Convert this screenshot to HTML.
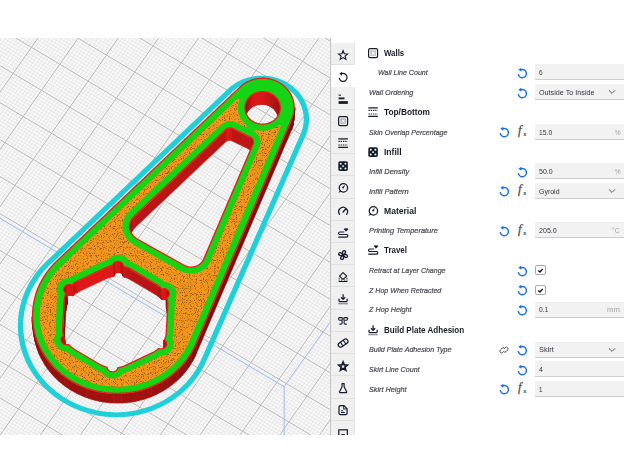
<!DOCTYPE html>
<html><head><meta charset="utf-8"><title>Cura</title>
<style>
html,body{margin:0;padding:0;background:#fff;}
body{width:628px;height:472px;position:relative;overflow:hidden;font-family:"Liberation Sans",sans-serif;color:#222;}
#view{position:absolute;left:0;top:38px;width:331px;height:397px;overflow:hidden;}
#vline{position:absolute;left:330px;top:38px;width:1px;height:397px;background:#c4c4c4;}
#side{position:absolute;left:331px;top:43px;width:24px;height:392px;background:#f0f0f0;overflow:hidden;}
.tab{position:absolute;left:0;width:24px;box-sizing:border-box;border-bottom:1px solid #e0e0e0;border-right:1px solid #e6e6e6}
.tab.sel{background:#fff;border-color:#fff}
.t{position:absolute;white-space:nowrap;line-height:12px;transform-origin:0 50%;}
.cat{font-weight:bold;font-size:9.5px;color:#161b26;}
.lab{font-style:italic;font-size:8px;color:#45484f;-webkit-text-stroke:0.2px #45484f;}
.val{font-size:8px;color:#30343c;}
.unit{font-size:8px;color:#a2a2a2;}
.fld{position:absolute;left:535px;width:88.5px;height:15px;background:#f2f2f2;border-bottom:1px solid #cdcdcd;}
.cb{position:absolute;left:535.3px;width:8.4px;height:8.4px;border:1px solid #a8a8a8;border-radius:2px;background:#fff}
svg.ic{position:absolute;overflow:visible}
</style></head>
<body>
<div id="view"><svg width="331" height="397" viewBox="0 0 331 397" style="display:block">
<defs><filter id="nz" x="0" y="0" width="100%" height="100%" color-interpolation-filters="sRGB"><feTurbulence type="fractalNoise" baseFrequency="0.85" numOctaves="2" seed="11" result="n"/><feColorMatrix in="n" type="matrix" values="0 0 0 0 0.58  0 0 0 0 0.33  0 0 0 0 0.06  4.4 0 0 0 -2.3"/></filter><clipPath id="infc"><path d="M126.5,176.5 126.5,176.5 126.8,176.1 126.8,176.1 127.2,175.7 127.2,175.6 128.6,174.0 128.6,174.0 129.0,173.6 129.0,173.6 220.7,87.0 220.7,87.0 221.0,86.7 221.0,86.7 221.4,86.3 221.4,86.3 222.1,85.8 222.1,85.8 222.5,85.5 222.5,85.5 223.2,85.1 223.2,85.1 223.7,84.8 223.7,84.8 224.5,84.5 224.5,84.5 225.0,84.3 225.0,84.2 225.8,84.0 225.8,84.0 226.3,83.8 226.4,83.8 227.1,83.6 227.2,83.6 227.7,83.5 227.7,83.5 228.5,83.4 228.6,83.4 229.1,83.3 229.2,83.3 230.0,83.3 230.0,83.3 230.5,83.3 230.6,83.3 231.4,83.3 231.4,83.3 232.0,83.4 232.0,83.4 232.8,83.5 232.8,83.5 233.4,83.6 233.4,83.6 234.2,83.8 234.2,83.9 234.7,84.0 234.7,84.0 235.5,84.3 235.5,84.3 236.0,84.5 236.0,84.5 236.4,84.7 236.4,84.7 245.1,89.0 245.3,89.1 245.5,89.1 245.7,89.1 246.0,89.1 246.2,89.0 246.4,88.9 246.5,88.7 246.7,88.6 246.8,88.4 246.8,88.2 246.8,87.9 246.8,87.7 246.7,87.5 246.6,87.4 246.4,87.2 246.0,86.9 246.0,86.9 245.9,86.7 245.8,86.7 245.4,86.4 245.4,86.4 245.3,86.2 245.3,86.2 244.9,85.9 244.9,85.9 244.7,85.7 244.7,85.7 244.3,85.3 244.3,85.3 244.1,85.1 244.1,85.1 243.8,84.8 243.8,84.7 243.6,84.6 243.6,84.6 243.3,84.2 243.3,84.2 243.1,84.0 243.1,84.0 242.8,83.6 242.8,83.6 242.6,83.4 242.6,83.4 242.3,83.0 242.3,83.0 242.2,82.8 242.1,82.8 241.8,82.4 241.8,82.4 241.7,82.2 241.7,82.2 241.4,81.7 241.4,81.7 241.3,81.5 241.3,81.5 241.0,81.1 241.0,81.1 240.9,80.9 240.9,80.9 240.6,80.4 240.6,80.4 240.5,80.2 240.5,80.2 240.3,79.8 240.3,79.7 240.2,79.5 240.1,79.5 239.9,79.1 239.9,79.1 239.8,78.9 239.8,78.8 239.6,78.4 239.6,78.4 239.5,78.2 239.5,78.2 239.3,77.7 239.3,77.7 239.2,77.5 239.2,77.5 239.1,77.0 239.1,77.0 239.0,76.7 239.0,76.7 238.8,76.3 238.8,76.3 238.8,76.0 238.7,76.0 238.6,75.5 238.6,75.5 238.5,75.3 238.5,75.3 238.4,74.8 238.4,74.8 238.4,74.6 238.4,74.6 238.3,74.1 238.3,74.1 238.2,73.8 238.2,73.8 238.1,73.3 238.1,73.3 238.1,73.1 238.1,73.1 238.0,72.6 238.0,72.6 238.0,72.4 238.0,72.4 237.9,71.9 237.9,71.8 237.9,71.6 237.9,71.6 237.9,71.1 237.9,71.1 237.9,70.9 237.9,70.9 237.9,70.4 237.9,70.4 237.8,70.1 237.8,70.1 237.8,69.6 237.8,69.6 237.9,69.4 237.9,69.4 237.9,68.9 237.9,68.9 237.9,68.6 237.9,68.6 237.9,68.1 237.9,68.1 237.9,67.9 237.9,67.9 238.0,67.4 238.0,67.4 238.0,67.1 238.0,67.1 238.1,66.6 238.1,66.6 238.1,66.4 238.1,66.4 238.2,65.9 238.2,65.9 238.3,65.7 238.3,65.7 238.4,65.2 238.4,65.1 238.4,64.9 238.4,64.9 238.6,64.4 238.6,64.4 238.6,64.2 238.6,64.2 238.8,63.7 238.8,63.7 238.8,63.5 238.9,63.5 239.0,63.0 239.0,63.0 239.1,62.8 239.1,62.8 239.3,62.3 239.3,62.3 239.3,62.2 239.4,62.0 239.4,61.8 239.3,61.6 239.3,61.4 239.2,61.2 239.0,61.0 238.8,60.9 238.6,60.8 238.4,60.7 238.2,60.7 237.9,60.7 237.7,60.8 237.5,60.9 237.3,61.0 61.7,227.9 61.7,227.9 59.9,229.6 59.9,229.7 58.2,231.4 58.2,231.4 56.6,233.2 56.6,233.2 55.1,235.1 55.0,235.1 53.6,237.0 53.6,237.0 52.2,238.9 52.2,238.9 50.8,240.9 50.8,240.9 49.6,242.9 49.5,242.9 48.4,245.0 48.3,245.0 47.2,247.1 47.2,247.1 46.2,249.2 46.2,249.2 45.2,251.3 45.2,251.4 44.3,253.5 44.3,253.6 43.5,255.7 43.5,255.8 42.8,258.0 42.7,258.0 42.1,260.2 42.1,260.3 41.5,262.5 41.5,262.5 41.0,264.8 41.0,264.8 40.6,267.1 40.6,267.1 40.3,269.4 40.3,269.5 40.0,271.7 40.0,271.8 39.9,274.1 39.8,274.1 39.8,276.4 39.8,276.4 39.8,278.7 39.8,278.8 39.8,281.1 39.8,281.1 40.0,283.4 40.0,283.4 40.3,285.7 40.3,285.8 40.6,288.0 40.6,288.1 41.0,290.3 41.0,290.4 41.5,292.6 41.5,292.7 42.1,294.9 42.1,294.9 42.7,297.2 42.7,297.2 43.4,299.4 43.5,299.4 44.3,301.6 44.3,301.6 45.2,303.8 45.2,303.8 46.1,305.9 46.1,306.0 47.2,308.1 47.2,308.1 48.3,310.1 48.3,310.2 49.5,312.2 49.5,312.2 50.7,314.2 50.8,314.3 52.1,316.2 52.1,316.2 53.5,318.1 53.5,318.2 55.0,320.0 55.0,320.1 56.5,321.9 56.5,321.9 58.1,323.7 58.1,323.7 59.8,325.4 59.8,325.5 61.5,327.1 61.5,327.2 63.3,328.8 63.3,328.8 65.2,330.4 65.2,330.4 67.1,331.9 67.1,331.9 69.0,333.4 69.1,333.4 71.0,334.8 71.1,334.8 73.1,336.2 73.1,336.2 75.2,337.5 75.2,337.5 77.4,338.7 77.4,338.7 79.5,339.9 79.6,339.9 81.8,341.0 81.8,341.0 84.1,342.0 84.1,342.0 86.4,342.9 86.4,343.0 88.7,343.8 88.7,343.8 91.1,344.6 91.1,344.7 93.5,345.4 93.5,345.4 95.9,346.1 95.9,346.1 98.3,346.7 98.4,346.7 100.8,347.2 100.8,347.2 103.3,347.6 103.3,347.7 105.8,348.0 105.8,348.0 108.3,348.3 108.3,348.3 110.8,348.5 110.9,348.6 113.4,348.7 113.4,348.7 115.9,348.8 115.9,348.8 118.4,348.8 118.5,348.8 121.0,348.7 121.0,348.7 123.5,348.5 123.5,348.5 126.0,348.3 126.0,348.3 128.5,348.0 128.6,348.0 131.0,347.6 131.1,347.6 133.5,347.2 133.5,347.1 136.0,346.6 136.0,346.6 138.4,346.0 138.4,346.0 140.8,345.3 140.9,345.3 143.2,344.6 143.3,344.6 145.6,343.8 145.6,343.8 147.9,342.9 148.0,342.9 150.3,341.9 150.3,341.9 152.5,340.9 152.6,340.9 154.8,339.8 154.8,339.8 157.0,338.6 157.0,338.6 159.1,337.4 159.1,337.4 161.2,336.1 161.2,336.1 163.3,334.7 163.3,334.7 165.3,333.3 165.3,333.3 167.2,331.8 167.3,331.8 169.2,330.3 169.2,330.3 171.0,328.7 171.0,328.7 172.8,327.0 172.8,327.0 174.5,325.3 174.6,325.3 176.2,323.6 176.2,323.6 177.8,321.8 177.8,321.8 179.4,319.9 179.4,319.9 180.8,318.0 180.9,318.0 182.2,316.1 182.3,316.1 183.6,314.1 183.6,314.1 184.9,312.1 184.9,312.1 186.1,310.0 186.1,310.0 187.2,308.0 187.2,307.9 188.2,305.8 188.2,305.8 189.2,303.6 189.2,303.6 280.8,88.3 280.8,88.1 280.9,87.9 280.8,87.7 280.8,87.5 280.7,87.3 280.5,87.2 280.4,87.0 280.2,86.9 280.0,86.9 279.7,86.8 279.5,86.8 279.3,86.9 279.1,87.0 278.9,87.1 278.7,87.3 278.7,87.3 278.5,87.4 278.5,87.4 278.1,87.7 278.1,87.8 277.9,87.9 277.9,87.9 277.4,88.2 277.4,88.2 277.2,88.3 277.2,88.3 276.8,88.6 276.8,88.6 276.6,88.8 276.5,88.8 276.1,89.1 276.1,89.1 275.9,89.2 275.9,89.2 275.4,89.5 275.4,89.5 275.2,89.6 275.2,89.6 274.7,89.8 274.7,89.8 274.5,89.9 274.5,90.0 274.0,90.2 274.0,90.2 273.8,90.3 273.8,90.3 273.3,90.5 273.3,90.5 273.0,90.6 273.0,90.6 272.5,90.8 272.5,90.8 272.3,90.9 272.3,90.9 271.8,91.1 271.8,91.1 271.5,91.2 271.5,91.2 271.0,91.4 271.0,91.4 270.8,91.5 270.8,91.5 270.3,91.6 270.2,91.6 270.0,91.7 270.0,91.7 269.5,91.8 269.5,91.9 269.2,91.9 269.2,91.9 268.7,92.0 268.7,92.0 268.5,92.1 268.4,92.1 267.9,92.2 267.9,92.2 267.7,92.3 267.7,92.3 267.1,92.4 267.1,92.4 266.9,92.4 266.9,92.4 266.3,92.5 266.3,92.5 266.1,92.5 266.1,92.5 265.5,92.6 265.5,92.6 265.3,92.6 265.3,92.6 264.7,92.7 264.7,92.7 264.5,92.7 264.4,92.7 263.9,92.7 263.9,92.7 263.6,92.7 263.6,92.7 263.1,92.7 263.1,92.7 262.8,92.8 262.8,92.8 262.3,92.8 262.3,92.8 262.0,92.7 262.0,92.7 261.5,92.7 261.5,92.7 261.2,92.7 261.2,92.7 260.7,92.7 260.7,92.7 260.4,92.7 260.4,92.7 259.9,92.6 259.9,92.6 259.6,92.6 259.6,92.6 259.1,92.5 259.0,92.5 258.8,92.5 258.8,92.5 258.3,92.4 258.2,92.4 258.0,92.4 258.0,92.4 257.5,92.3 257.5,92.3 257.2,92.2 257.2,92.2 256.7,92.1 256.7,92.1 256.4,92.0 256.4,92.0 255.9,91.9 255.9,91.9 255.7,91.8 255.5,91.8 255.2,91.8 255.0,91.9 254.8,91.9 254.6,92.1 254.4,92.2 254.3,92.4 254.2,92.6 254.2,92.8 254.2,93.1 254.2,93.3 254.4,93.5 254.5,93.7 254.7,93.8 255.3,94.2 255.4,94.2 255.8,94.6 255.9,94.6 256.6,95.2 256.6,95.2 257.0,95.6 257.0,95.6 257.6,96.3 257.7,96.3 258.0,96.8 258.1,96.8 258.6,97.5 258.6,97.5 258.9,98.0 258.9,98.0 259.3,98.8 259.3,98.8 259.6,99.3 259.6,99.4 259.9,100.1 259.9,100.2 260.1,100.7 260.1,100.8 260.3,101.6 260.3,101.6 260.4,102.2 260.4,102.2 260.5,103.0 260.6,103.1 260.6,103.6 260.6,103.7 260.6,104.5 260.6,104.6 260.5,105.1 260.5,105.2 260.4,106.0 260.4,106.0 260.3,106.6 260.3,106.6 260.0,107.4 260.0,107.5 259.8,108.0 259.8,108.0 259.7,108.4 259.7,108.4 210.4,223.5 210.4,223.6 210.2,224.0 210.2,224.0 209.4,225.6 209.3,225.6 208.8,226.5 208.8,226.5 207.7,227.9 207.7,227.9 207.1,228.7 207.0,228.8 205.8,230.0 205.8,230.0 205.0,230.7 204.9,230.8 203.5,231.8 203.5,231.8 202.6,232.4 202.6,232.4 201.0,233.3 201.0,233.3 200.0,233.8 200.0,233.8 198.3,234.5 198.2,234.5 197.2,234.8 197.2,234.8 195.4,235.2 195.3,235.2 194.3,235.4 194.2,235.4 192.4,235.6 192.4,235.6 191.3,235.6 191.2,235.6 189.4,235.6 189.4,235.6 188.3,235.5 188.2,235.5 186.4,235.2 186.4,235.1 185.3,234.9 185.3,234.9 183.6,234.3 183.5,234.3 182.5,233.9 182.5,233.9 180.9,233.1 180.8,233.1 180.4,232.9 180.3,232.9 133.6,206.7 133.5,206.7 133.1,206.4 133.1,206.4 131.2,205.1 131.2,205.1 130.8,204.8 130.7,204.8 130.3,204.5 130.3,204.4 128.7,203.0 128.7,203.0 128.3,202.6 128.2,202.6 127.9,202.2 127.9,202.2 126.5,200.5 126.5,200.5 126.2,200.1 126.2,200.0 125.9,199.6 125.9,199.6 124.8,197.8 124.8,197.7 124.5,197.3 124.5,197.3 124.3,196.8 124.3,196.8 123.5,194.8 123.5,194.8 123.3,194.3 123.3,194.3 123.2,193.8 123.2,193.8 122.7,191.7 122.7,191.7 122.7,191.2 122.6,191.1 122.6,190.6 122.6,190.6 122.5,188.5 122.5,188.5 122.5,188.0 122.5,188.0 122.5,187.5 122.5,187.4 122.7,185.4 122.7,185.3 122.8,184.8 122.8,184.8 122.9,184.3 122.9,184.3 123.5,182.3 123.5,182.2 123.7,181.8 123.7,181.7 123.9,181.2 123.9,181.2 124.8,179.3 124.8,179.3 125.0,178.8 125.0,178.8 125.3,178.3 125.3,178.3ZM69.3,239.8 69.5,239.8 69.8,239.7 70.0,239.6 70.1,239.6 70.1,239.5 72.0,238.3 72.0,238.3 72.3,238.1 72.4,238.1 72.4,238.1 72.4,238.1 72.7,237.9 72.7,237.9 74.8,236.8 74.8,236.8 74.9,236.7 74.9,236.7 75.0,236.7 75.0,236.7 75.1,236.6 75.1,236.6 101.6,224.1 101.6,224.1 101.7,224.0 101.7,224.0 101.7,224.0 101.8,224.0 101.9,224.0 101.9,224.0 104.1,223.1 104.1,223.1 104.4,222.9 104.4,222.9 104.5,222.9 104.5,222.9 104.8,222.8 104.8,222.8 107.1,222.1 107.1,222.1 107.2,222.0 107.4,221.9 107.7,221.8 107.8,221.6 108.1,221.3 108.1,221.3 108.4,220.9 108.4,220.9 108.4,220.9 108.5,220.9 108.8,220.5 108.8,220.5 109.2,220.2 109.2,220.2 109.5,219.8 109.6,219.8 109.6,219.8 109.6,219.8 110.0,219.5 110.0,219.5 110.4,219.2 110.4,219.2 110.8,218.9 110.9,218.9 110.9,218.9 110.9,218.9 111.3,218.6 111.3,218.6 111.8,218.3 111.8,218.3 112.2,218.1 112.3,218.1 112.3,218.1 112.3,218.1 112.8,217.9 112.8,217.9 113.3,217.7 113.3,217.7 113.8,217.5 113.8,217.5 113.8,217.5 113.8,217.5 114.3,217.3 114.3,217.3 114.8,217.2 114.9,217.2 115.3,217.1 115.4,217.1 115.4,217.1 115.4,217.1 115.9,217.0 115.9,217.0 116.4,216.9 116.5,216.9 117.0,216.9 117.0,216.9 117.0,216.9 117.0,216.9 117.5,216.8 117.6,216.8 118.1,216.8 118.1,216.8 118.6,216.8 118.6,216.8 118.7,216.8 118.7,216.8 119.2,216.9 119.2,216.9 119.7,216.9 119.7,216.9 120.2,217.0 120.3,217.0 120.3,217.0 120.3,217.0 120.8,217.1 120.8,217.1 121.3,217.2 121.4,217.2 121.8,217.4 121.9,217.4 121.9,217.4 121.9,217.4 122.4,217.5 122.4,217.5 122.9,217.7 122.9,217.7 123.4,217.9 123.4,217.9 123.4,217.9 123.4,217.9 123.9,218.2 123.9,218.2 124.4,218.4 124.4,218.4 124.8,218.6 124.8,218.7 124.9,218.7 124.9,218.7 125.3,218.9 125.3,219.0 125.7,219.2 125.7,219.3 126.1,219.5 126.1,219.6 126.2,219.6 126.2,219.6 126.6,219.9 126.6,219.9 127.0,220.2 127.0,220.3 127.3,220.6 127.3,220.6 127.4,220.6 127.4,220.6 127.7,221.0 127.7,221.0 128.0,221.4 128.0,221.4 128.3,221.8 128.3,221.8 128.4,221.8 128.4,221.8 128.6,222.2 128.7,222.2 128.9,222.6 129.0,222.8 129.2,222.9 129.4,223.0 129.6,223.1 129.6,223.1 131.7,224.0 131.7,224.0 132.1,224.1 132.1,224.2 132.1,224.2 132.1,224.2 132.4,224.3 132.4,224.3 134.5,225.4 134.5,225.4 134.7,225.5 134.7,225.5 134.7,225.5 134.7,225.5 134.8,225.6 134.8,225.6 159.7,240.4 159.7,240.4 159.9,240.5 159.9,240.5 159.9,240.5 159.9,240.5 160.1,240.6 160.1,240.6 162.0,241.9 162.0,241.9 162.3,242.1 162.3,242.1 162.3,242.1 162.4,242.1 162.6,242.3 162.6,242.4 164.4,243.8 164.4,243.8 164.5,243.9 164.7,244.0 165.0,244.1 165.2,244.2 165.6,244.2 165.7,244.2 166.2,244.3 166.2,244.3 166.2,244.3 166.2,244.3 166.7,244.4 166.7,244.4 167.3,244.5 167.3,244.5 167.7,244.6 167.8,244.6 167.8,244.7 167.8,244.7 168.3,244.8 168.3,244.8 168.8,245.0 168.8,245.0 169.3,245.2 169.3,245.2 169.3,245.2 169.4,245.2 169.8,245.4 169.8,245.4 170.3,245.7 170.3,245.7 170.7,245.9 170.7,245.9 170.8,246.0 170.8,246.0 171.2,246.2 171.2,246.2 171.6,246.5 171.6,246.5 172.0,246.8 172.0,246.8 172.1,246.9 172.1,246.9 172.5,247.2 172.5,247.2 172.9,247.5 172.9,247.5 173.2,247.9 173.2,247.9 173.3,247.9 173.3,247.9 173.6,248.3 173.6,248.3 173.9,248.7 173.9,248.7 174.2,249.0 174.3,249.1 174.3,249.1 174.3,249.1 174.6,249.5 174.6,249.5 174.8,249.9 174.8,249.9 175.1,250.3 175.1,250.4 175.1,250.4 175.1,250.4 175.3,250.8 175.3,250.8 175.6,251.3 175.6,251.3 175.7,251.7 175.7,251.7 175.8,251.8 175.8,251.8 175.9,252.2 175.9,252.2 176.1,252.7 176.1,252.7 176.2,253.2 176.2,253.2 176.2,253.2 176.2,253.3 176.3,253.7 176.3,253.7 176.4,254.2 176.4,254.2 176.4,254.7 176.4,254.7 176.4,254.7 176.4,254.7 176.5,255.2 176.5,255.2 176.5,255.7 176.5,255.7 176.5,256.2 176.5,256.2 176.5,256.2 176.5,256.3 176.4,256.7 176.4,256.7 176.4,257.2 176.4,257.2 176.3,257.7 176.3,257.7 176.3,257.7 176.3,257.8 176.2,258.2 176.2,258.2 176.0,258.7 176.0,258.7 175.9,259.2 175.9,259.2 175.9,259.2 175.9,259.2 175.7,259.7 175.7,259.7 175.5,260.1 175.5,260.1 175.3,260.6 175.3,260.6 175.3,260.6 175.2,260.6 175.0,261.0 175.0,261.1 174.8,261.4 174.7,261.6 174.6,261.8 174.7,262.1 174.7,262.2 174.7,262.2 174.9,264.4 174.9,264.4 174.9,264.7 174.9,264.7 174.9,264.8 174.9,264.8 174.9,265.1 174.9,265.1 174.9,267.3 174.9,267.3 174.9,267.5 174.9,267.5 174.9,267.5 174.9,267.5 174.9,267.7 174.9,267.7 173.4,294.9 173.4,294.9 173.4,295.1 173.4,295.1 173.4,295.1 173.4,295.1 173.4,295.3 173.4,295.3 173.1,297.5 173.1,297.5 173.1,297.8 173.1,297.8 173.1,297.9 173.1,297.9 173.0,298.2 173.0,298.2 172.6,300.3 172.6,300.4 172.5,300.5 172.5,300.7 172.5,300.9 172.6,301.2 172.8,301.5 172.8,301.5 173.0,302.0 173.0,302.0 173.0,302.0 173.0,302.0 173.1,302.5 173.2,302.5 173.3,303.0 173.3,303.0 173.4,303.4 173.4,303.4 173.4,303.5 173.4,303.5 173.5,303.9 173.5,304.0 173.6,304.4 173.6,304.5 173.7,304.9 173.7,304.9 173.7,305.0 173.7,305.0 173.7,305.4 173.7,305.5 173.7,306.0 173.7,306.0 173.7,306.4 173.7,306.4 173.7,306.5 173.7,306.5 173.7,307.0 173.6,307.0 173.6,307.5 173.6,307.5 173.5,307.9 173.5,307.9 173.5,308.0 173.5,308.0 173.4,308.4 173.4,308.5 173.3,308.9 173.3,309.0 173.1,309.4 173.1,309.4 173.1,309.5 173.1,309.5 172.9,309.9 172.9,309.9 172.7,310.4 172.7,310.4 172.5,310.8 172.5,310.8 172.5,310.9 172.5,310.9 172.3,311.3 172.2,311.3 172.0,311.7 172.0,311.7 171.7,312.1 171.7,312.1 171.7,312.2 171.7,312.2 171.4,312.6 171.4,312.6 171.1,313.0 171.0,313.0 170.7,313.3 170.7,313.4 170.7,313.4 170.7,313.4 170.4,313.7 170.3,313.8 170.0,314.1 170.0,314.1 169.6,314.4 169.6,314.4 169.6,314.5 169.5,314.5 169.2,314.8 169.2,314.8 168.7,315.1 168.7,315.1 168.3,315.4 168.3,315.4 168.3,315.4 168.2,315.4 167.8,315.7 167.8,315.7 167.4,315.9 167.3,315.9 166.9,316.2 166.9,316.2 166.9,316.2 166.8,316.2 166.4,316.4 166.4,316.4 165.9,316.6 165.9,316.6 165.4,316.8 165.4,316.8 165.3,316.8 165.3,316.8 164.9,316.9 164.8,316.9 164.3,317.1 164.3,317.1 163.8,317.2 163.8,317.2 163.8,317.2 163.7,317.2 163.3,317.3 163.2,317.3 162.7,317.4 162.7,317.4 162.2,317.4 162.2,317.4 162.1,317.4 162.1,317.4 161.6,317.5 161.6,317.5 161.2,317.5 160.9,317.5 160.7,317.6 160.5,317.7 160.4,317.8 160.3,317.8 158.4,319.0 158.4,319.0 158.1,319.2 158.1,319.2 158.1,319.2 158.1,319.2 157.7,319.4 157.7,319.4 155.7,320.5 155.7,320.5 155.5,320.6 155.5,320.6 155.5,320.6 155.5,320.6 155.3,320.7 155.3,320.7 128.9,333.2 128.9,333.2 128.8,333.3 128.8,333.3 128.8,333.3 128.7,333.3 128.6,333.3 128.6,333.3 126.4,334.3 126.4,334.3 126.1,334.4 126.1,334.4 126.0,334.4 126.0,334.4 125.7,334.5 125.7,334.5 123.4,335.2 123.4,335.2 123.3,335.3 123.1,335.4 122.9,335.5 122.7,335.7 122.4,336.0 122.4,336.0 122.1,336.4 122.1,336.4 122.1,336.4 122.0,336.4 121.7,336.8 121.7,336.8 121.3,337.1 121.3,337.2 121.0,337.5 120.9,337.5 120.9,337.5 120.9,337.5 120.5,337.8 120.5,337.8 120.1,338.1 120.1,338.1 119.7,338.4 119.7,338.4 119.6,338.4 119.6,338.5 119.2,338.7 119.2,338.7 118.7,339.0 118.7,339.0 118.3,339.2 118.2,339.2 118.2,339.2 118.2,339.2 117.7,339.4 117.7,339.4 117.2,339.6 117.2,339.6 116.8,339.8 116.7,339.8 116.7,339.8 116.7,339.8 116.2,340.0 116.2,340.0 115.7,340.1 115.7,340.1 115.2,340.2 115.2,340.2 115.1,340.2 115.1,340.2 114.6,340.3 114.6,340.3 114.1,340.4 114.0,340.4 113.6,340.5 113.5,340.5 113.5,340.5 113.5,340.5 113.0,340.5 113.0,340.5 112.4,340.5 112.4,340.5 111.9,340.5 111.9,340.5 111.8,340.5 111.8,340.5 111.3,340.4 111.3,340.4 110.8,340.4 110.8,340.4 110.3,340.3 110.3,340.3 110.2,340.3 110.2,340.3 109.7,340.2 109.7,340.2 109.2,340.1 109.2,340.1 108.7,340.0 108.7,340.0 108.6,339.9 108.6,339.9 108.1,339.8 108.1,339.8 107.6,339.6 107.6,339.6 107.2,339.4 107.1,339.4 107.1,339.4 107.1,339.4 106.6,339.2 106.6,339.2 106.2,338.9 106.1,338.9 105.7,338.7 105.7,338.7 105.7,338.7 105.6,338.6 105.2,338.4 105.2,338.4 104.8,338.1 104.8,338.1 104.4,337.8 104.4,337.8 104.3,337.8 104.3,337.7 104.0,337.4 104.0,337.4 103.6,337.1 103.6,337.1 103.2,336.7 103.2,336.7 103.2,336.7 103.2,336.7 102.8,336.3 102.8,336.3 102.5,335.9 102.5,335.9 102.2,335.6 102.2,335.6 102.1,335.5 102.1,335.5 101.9,335.1 101.9,335.1 101.6,334.7 101.5,334.6 101.3,334.4 101.1,334.3 100.9,334.3 100.9,334.3 98.8,333.3 98.8,333.3 98.5,333.2 98.4,333.2 98.4,333.2 98.4,333.2 98.1,333.0 98.1,333.0 96.0,331.9 96.0,331.9 95.9,331.8 95.9,331.8 95.8,331.8 95.8,331.8 95.7,331.7 95.7,331.7 70.8,317.0 70.7,317.0 70.6,316.9 70.6,316.9 70.6,316.9 70.6,316.9 70.4,316.8 70.4,316.8 68.5,315.5 68.5,315.5 68.2,315.3 68.2,315.3 68.1,315.3 68.1,315.2 67.9,315.0 67.9,315.0 66.1,313.6 66.1,313.6 66.0,313.5 65.8,313.4 65.5,313.3 65.3,313.2 64.8,313.2 64.8,313.2 64.3,313.1 64.3,313.1 64.3,313.1 64.2,313.1 63.8,313.0 63.7,313.0 63.2,312.9 63.2,312.9 62.7,312.8 62.7,312.7 62.7,312.7 62.7,312.7 62.2,312.6 62.2,312.6 61.7,312.4 61.7,312.4 61.2,312.2 61.2,312.2 61.1,312.2 61.1,312.2 60.7,312.0 60.7,312.0 60.2,311.7 60.2,311.7 59.8,311.5 59.7,311.5 59.7,311.4 59.7,311.4 59.3,311.2 59.3,311.2 58.8,310.9 58.8,310.9 58.4,310.6 58.4,310.6 58.4,310.5 58.4,310.5 58.0,310.2 58.0,310.2 57.6,309.9 57.6,309.9 57.3,309.5 57.2,309.5 57.2,309.5 57.2,309.5 56.9,309.1 56.9,309.1 56.5,308.7 56.5,308.7 56.2,308.3 56.2,308.3 56.2,308.3 56.2,308.3 55.9,307.9 55.9,307.9 55.6,307.5 55.6,307.4 55.4,307.1 55.4,307.0 55.3,307.0 55.3,307.0 55.1,306.6 55.1,306.6 54.9,306.1 54.9,306.1 54.7,305.7 54.7,305.7 54.7,305.6 54.7,305.6 54.5,305.2 54.5,305.1 54.4,304.7 54.4,304.7 54.3,304.2 54.3,304.2 54.2,304.2 54.2,304.1 54.2,303.7 54.2,303.7 54.1,303.2 54.1,303.2 54.0,302.7 54.0,302.7 54.0,302.7 54.0,302.6 54.0,302.2 54.0,302.2 54.0,301.7 54.0,301.7 54.0,301.2 54.0,301.2 54.0,301.1 54.0,301.1 54.0,300.7 54.0,300.7 54.1,300.2 54.1,300.2 54.2,299.7 54.2,299.7 54.2,299.6 54.2,299.6 54.3,299.2 54.3,299.2 54.4,298.7 54.4,298.7 54.6,298.2 54.6,298.2 54.6,298.2 54.6,298.2 54.8,297.7 54.8,297.7 55.0,297.3 55.0,297.2 55.2,296.8 55.2,296.8 55.2,296.8 55.2,296.8 55.4,296.3 55.4,296.3 55.7,296.0 55.8,295.8 55.8,295.5 55.8,295.3 55.8,295.2 55.8,295.2 55.6,293.0 55.6,293.0 55.5,292.7 55.5,292.6 55.5,292.6 55.5,292.6 55.5,292.3 55.5,292.3 55.5,290.1 55.5,290.1 55.5,289.9 55.5,289.9 55.5,289.9 55.5,289.9 55.5,289.7 55.5,289.7 57.0,262.4 57.0,262.4 57.0,262.2 57.0,262.2 57.0,262.2 57.0,262.2 57.1,262.1 57.1,262.0 57.3,259.9 57.3,259.9 57.3,259.5 57.3,259.5 57.3,259.5 57.3,259.5 57.4,259.1 57.4,259.1 57.9,257.0 57.9,257.0 57.9,256.9 57.9,256.6 57.9,256.4 57.8,256.2 57.6,255.8 57.6,255.8 57.5,255.4 57.4,255.3 57.4,255.3 57.4,255.3 57.3,254.9 57.3,254.8 57.1,254.4 57.1,254.3 57.0,253.9 57.0,253.9 57.0,253.8 57.0,253.8 56.9,253.4 56.9,253.4 56.8,252.9 56.8,252.9 56.8,252.4 56.8,252.4 56.7,252.3 56.7,252.3 56.7,251.9 56.7,251.9 56.7,251.4 56.7,251.3 56.7,250.9 56.7,250.9 56.7,250.8 56.7,250.8 56.8,250.4 56.8,250.3 56.8,249.9 56.8,249.8 56.9,249.4 56.9,249.4 56.9,249.3 56.9,249.3 57.0,248.9 57.0,248.9 57.2,248.4 57.2,248.4 57.3,247.9 57.3,247.9 57.3,247.9 57.3,247.8 57.5,247.4 57.5,247.4 57.7,246.9 57.7,246.9 57.9,246.5 57.9,246.5 57.9,246.5 57.9,246.4 58.2,246.0 58.2,246.0 58.4,245.6 58.4,245.6 58.7,245.2 58.7,245.2 58.7,245.1 58.7,245.1 59.0,244.7 59.0,244.7 59.4,244.3 59.4,244.3 59.7,244.0 59.7,243.9 59.7,243.9 59.7,243.9 60.1,243.6 60.1,243.6 60.4,243.2 60.5,243.2 60.8,242.9 60.8,242.9 60.9,242.8 60.9,242.8 61.3,242.5 61.3,242.5 61.7,242.2 61.7,242.2 62.1,241.9 62.1,241.9 62.2,241.9 62.2,241.9 62.6,241.6 62.6,241.6 63.1,241.4 63.1,241.4 63.5,241.1 63.5,241.1 63.6,241.1 63.6,241.1 64.0,240.9 64.1,240.9 64.5,240.7 64.6,240.7 65.0,240.5 65.0,240.5 65.1,240.5 65.1,240.5 65.6,240.4 65.6,240.4 66.1,240.2 66.1,240.2 66.6,240.1 66.6,240.1 66.7,240.1 66.7,240.1 67.2,240.0 67.2,240.0 67.7,239.9 67.7,239.9 68.2,239.9 68.3,239.9 68.3,239.9 68.3,239.9 68.8,239.9 68.8,239.9Z" clip-rule="evenodd"/></clipPath></defs>
<rect width="331" height="397" fill="#f9f9f9"/>
<path d="M332.5,-3.0L334.0,-2.1M326.4,-3.0L334.0,1.6M314.0,-3.0L334.0,9.0M307.9,-3.0L334.0,12.7M301.7,-3.0L334.0,16.4M295.5,-3.0L334.0,20.1M289.3,-3.0L334.0,23.8M283.2,-3.0L334.0,27.4M277.0,-3.0L334.0,31.1M270.8,-3.0L334.0,34.8M264.6,-3.0L334.0,38.5M252.3,-3.0L334.0,45.9M246.1,-3.0L334.0,49.6M239.9,-3.0L334.0,53.3M233.8,-3.0L334.0,57.0M227.6,-3.0L334.0,60.7M221.4,-3.0L334.0,64.4M215.2,-3.0L334.0,68.1M209.0,-3.0L334.0,71.8M202.8,-3.0L334.0,75.5M190.5,-3.0L334.0,82.9M184.3,-3.0L334.0,86.5M178.1,-3.0L334.0,90.2M171.9,-3.0L334.0,93.9M165.7,-3.0L334.0,97.6M159.5,-3.0L334.0,101.3M153.4,-3.0L334.0,105.0M147.2,-3.0L334.0,108.7M141.0,-3.0L334.0,112.4M128.6,-3.0L334.0,119.8M122.4,-3.0L334.0,123.5M116.2,-3.0L334.0,127.1M110.0,-3.0L334.0,130.8M103.8,-3.0L334.0,134.5M97.6,-3.0L334.0,138.2M91.4,-3.0L334.0,141.9M85.2,-3.0L334.0,145.6M79.0,-3.0L334.0,149.3M66.6,-3.0L334.0,156.7M3.9,-3.0L-3.0,6.8M60.4,-3.0L334.0,160.3M7.9,-3.0L-3.0,12.5M54.2,-3.0L334.0,164.0M11.9,-3.0L-3.0,18.3M48.0,-3.0L334.0,167.7M16.0,-3.0L-3.0,24.0M41.8,-3.0L334.0,171.4M20.0,-3.0L-3.0,29.8M35.6,-3.0L334.0,175.1M24.0,-3.0L-3.0,35.5M29.4,-3.0L334.0,178.8M28.0,-3.0L-3.0,41.2M23.2,-3.0L334.0,182.5M32.1,-3.0L-3.0,47.0M17.0,-3.0L334.0,186.2M36.1,-3.0L-3.0,52.7M4.5,-3.0L334.0,193.5M44.1,-3.0L-3.0,64.2M-1.7,-3.0L334.0,197.2M48.2,-3.0L-3.0,69.9M-3.0,-0.1L334.0,200.9M52.2,-3.0L-3.0,75.6M-3.0,3.6L334.0,204.6M56.2,-3.0L-3.0,81.4M-3.0,7.3L334.0,208.3M60.2,-3.0L-3.0,87.1M-3.0,11.0L334.0,212.0M64.3,-3.0L-3.0,92.8M-3.0,14.7L334.0,215.6M68.3,-3.0L-3.0,98.6M-3.0,18.4L334.0,219.3M72.3,-3.0L-3.0,104.3M-3.0,22.1L334.0,223.0M76.3,-3.0L-3.0,110.0M-3.0,29.5L334.0,230.4M84.4,-3.0L-3.0,121.5M-3.0,33.2L334.0,234.1M88.4,-3.0L-3.0,127.2M-3.0,36.9L334.0,237.7M92.4,-3.0L-3.0,132.9M-3.0,40.6L334.0,241.4M96.4,-3.0L-3.0,138.7M-3.0,44.3L334.0,245.1M100.4,-3.0L-3.0,144.4M-3.0,48.0L334.0,248.8M104.5,-3.0L-3.0,150.1M-3.0,51.7L334.0,252.5M108.5,-3.0L-3.0,155.8M-3.0,55.5L334.0,256.2M112.5,-3.0L-3.0,161.6M-3.0,59.2L334.0,259.8M116.5,-3.0L-3.0,167.3M-3.0,66.6L334.0,267.2M124.5,-3.0L-3.0,178.7M-3.0,70.3L334.0,270.9M128.6,-3.0L-3.0,184.5M-3.0,74.0L334.0,274.6M132.6,-3.0L-3.0,190.2M-3.0,77.7L334.0,278.3M136.6,-3.0L-3.0,195.9M-3.0,81.4L334.0,281.9M140.6,-3.0L-3.0,201.6M-3.0,85.1L334.0,285.6M144.6,-3.0L-3.0,207.4M-3.0,88.8L334.0,289.3M148.6,-3.0L-3.0,213.1M-3.0,92.5L334.0,293.0M152.7,-3.0L-3.0,218.8M-3.0,96.2L334.0,296.7M156.7,-3.0L-3.0,224.5M-3.0,103.6L334.0,304.0M164.7,-3.0L-3.0,236.0M-3.0,107.3L334.0,307.7M168.7,-3.0L-3.0,241.7M-3.0,111.0L334.0,311.4M172.7,-3.0L-3.0,247.4M-3.0,114.6L334.0,315.1M176.7,-3.0L-3.0,253.1M-3.0,118.3L334.0,318.7M180.7,-3.0L-3.0,258.8M-3.0,122.0L334.0,322.4M184.8,-3.0L-3.0,264.6M-3.0,125.7L334.0,326.1M188.8,-3.0L-3.0,270.3M-3.0,129.4L334.0,329.8M192.8,-3.0L-3.0,276.0M-3.0,133.1L334.0,333.5M196.8,-3.0L-3.0,281.7M-3.0,140.5L334.0,340.8M204.8,-3.0L-3.0,293.1M-3.0,144.2L334.0,344.5M208.8,-3.0L-3.0,298.9M-3.0,147.9L334.0,348.2M212.8,-3.0L-3.0,304.6M-3.0,151.6L334.0,351.8M216.8,-3.0L-3.0,310.3M-3.0,155.3L334.0,355.5M220.9,-3.0L-3.0,316.0M-3.0,159.0L334.0,359.2M224.9,-3.0L-3.0,321.7M-3.0,162.7L334.0,362.9M228.9,-3.0L-3.0,327.4M-3.0,166.4L334.0,366.6M232.9,-3.0L-3.0,333.1M-3.0,170.1L334.0,370.2M236.9,-3.0L-3.0,338.8M-3.0,177.5L334.0,377.6M244.9,-3.0L-3.0,350.3M-3.0,181.2L334.0,381.3M248.9,-3.0L-3.0,356.0M-3.0,184.9L334.0,384.9M252.9,-3.0L-3.0,361.7M-3.0,188.6L334.0,388.6M256.9,-3.0L-3.0,367.4M-3.0,192.3L334.0,392.3M260.9,-3.0L-3.0,373.1M-3.0,196.0L334.0,396.0M264.9,-3.0L-3.0,378.8M-3.0,199.7L334.0,399.6M268.9,-3.0L-3.0,384.5M-3.0,203.4L328.4,400.0M272.9,-3.0L-3.0,390.2M-3.0,207.0L322.2,400.0M276.9,-3.0L-3.0,395.9M-3.0,214.4L309.8,400.0M284.9,-3.0L2.1,400.0M-3.0,218.1L303.6,400.0M289.0,-3.0L6.2,400.0M-3.0,221.8L297.4,400.0M293.0,-3.0L10.2,400.0M-3.0,225.5L291.2,400.0M297.0,-3.0L14.2,400.0M-3.0,229.2L285.0,400.0M301.0,-3.0L18.2,400.0M-3.0,232.9L278.8,400.0M305.0,-3.0L22.2,400.0M-3.0,236.6L272.6,400.0M309.0,-3.0L26.2,400.0M-3.0,240.3L266.4,400.0M313.0,-3.0L30.2,400.0M-3.0,244.0L260.2,400.0M317.0,-3.0L34.2,400.0M-3.0,251.3L247.8,400.0M325.0,-3.0L42.2,400.0M-3.0,255.0L241.6,400.0M329.0,-3.0L46.2,400.0M-3.0,258.7L235.4,400.0M333.0,-3.0L50.2,400.0M-3.0,262.4L229.2,400.0M334.0,1.2L54.2,400.0M-3.0,266.1L223.0,400.0M334.0,6.9L58.2,400.0M-3.0,269.8L216.8,400.0M334.0,12.6L62.2,400.0M-3.0,273.5L210.6,400.0M334.0,18.3L66.2,400.0M-3.0,277.2L204.4,400.0M334.0,24.0L70.2,400.0M-3.0,280.9L198.2,400.0M334.0,29.7L74.2,400.0M-3.0,288.2L185.7,400.0M334.0,41.1L82.2,400.0M-3.0,291.9L179.5,400.0M334.0,46.8L86.1,400.0M-3.0,295.6L173.3,400.0M334.0,52.5L90.1,400.0M-3.0,299.3L167.1,400.0M334.0,58.2L94.1,400.0M-3.0,303.0L160.9,400.0M334.0,63.9L98.1,400.0M-3.0,306.7L154.7,400.0M334.0,69.6L102.1,400.0M-3.0,310.4L148.4,400.0M334.0,75.3L106.1,400.0M-3.0,314.1L142.2,400.0M334.0,81.0L110.1,400.0M-3.0,317.8L136.0,400.0M334.0,86.6L114.1,400.0M-3.0,325.1L123.6,400.0M334.0,98.0L122.1,400.0M-3.0,328.8L117.3,400.0M334.0,103.7L126.1,400.0M-3.0,332.5L111.1,400.0M334.0,109.4L130.1,400.0M-3.0,336.2L104.9,400.0M334.0,115.1L134.1,400.0M-3.0,339.9L98.7,400.0M334.0,120.8L138.1,400.0M-3.0,343.6L92.5,400.0M334.0,126.5L142.1,400.0M-3.0,347.2L86.2,400.0M334.0,132.2L146.1,400.0M-3.0,350.9L80.0,400.0M334.0,137.9L150.0,400.0M-3.0,354.6L73.8,400.0M334.0,143.5L154.0,400.0M-3.0,362.0L61.3,400.0M334.0,154.9L162.0,400.0M-3.0,365.7L55.1,400.0M334.0,160.6L166.0,400.0M-3.0,369.4L48.9,400.0M334.0,166.3L170.0,400.0M-3.0,373.0L42.6,400.0M334.0,172.0L174.0,400.0M-3.0,376.7L36.4,400.0M334.0,177.7L178.0,400.0M-3.0,380.4L30.2,400.0M334.0,183.3L182.0,400.0M-3.0,384.1L23.9,400.0M334.0,189.0L186.0,400.0M-3.0,387.8L17.7,400.0M334.0,194.7L189.9,400.0M-3.0,391.5L11.5,400.0M334.0,200.4L193.9,400.0M-3.0,398.8L-1.0,400.0M334.0,211.7L201.9,400.0M334.0,217.4L205.9,400.0M334.0,223.1L209.9,400.0M334.0,228.8L213.9,400.0M334.0,234.5L217.8,400.0M334.0,240.1L221.8,400.0M334.0,245.8L225.8,400.0M334.0,251.5L229.8,400.0M334.0,257.2L233.8,400.0M334.0,268.5L241.8,400.0M334.0,274.2L245.7,400.0M334.0,279.9L249.7,400.0M334.0,285.6L253.7,400.0M334.0,291.2L257.7,400.0M334.0,296.9L261.7,400.0M334.0,302.6L265.6,400.0M334.0,308.3L269.6,400.0M334.0,313.9L273.6,400.0M334.0,325.3L281.6,400.0M334.0,330.9L285.5,400.0M334.0,336.6L289.5,400.0M334.0,342.3L293.5,400.0M334.0,348.0L297.5,400.0M334.0,353.6L301.5,400.0M334.0,359.3L305.4,400.0M334.0,365.0L309.4,400.0M334.0,370.6L313.4,400.0M334.0,382.0L321.3,400.0M334.0,387.6L325.3,400.0M334.0,393.3L329.3,400.0M334.0,399.0L333.3,400.0" stroke="#e5e5e5" stroke-width="0.85" fill="none"/>
<path d="M320.2,-3.0L334.0,5.3M258.5,-3.0L334.0,42.2M196.7,-3.0L334.0,79.2M134.8,-3.0L334.0,116.1M72.8,-3.0L334.0,153.0M-0.1,-3.0L-3.0,1.1M10.8,-3.0L334.0,189.8M40.1,-3.0L-3.0,58.4M-3.0,25.8L334.0,226.7M80.3,-3.0L-3.0,115.8M-3.0,62.9L334.0,263.5M120.5,-3.0L-3.0,173.0M-3.0,99.9L334.0,300.3M160.7,-3.0L-3.0,230.2M-3.0,136.8L334.0,337.1M200.8,-3.0L-3.0,287.4M-3.0,173.8L334.0,373.9M240.9,-3.0L-3.0,344.6M-3.0,210.7L316.0,400.0M280.9,-3.0L-1.9,400.0M-3.0,247.7L254.0,400.0M321.0,-3.0L38.2,400.0M-3.0,284.6L191.9,400.0M334.0,35.4L78.2,400.0M-3.0,321.4L129.8,400.0M334.0,92.3L118.1,400.0M-3.0,358.3L67.5,400.0M334.0,149.2L158.0,400.0M-3.0,395.1L5.2,400.0M334.0,206.1L197.9,400.0M334.0,262.9L237.8,400.0M334.0,319.6L277.6,400.0M334.0,376.3L317.4,400.0" stroke="#b8b8b8" stroke-width="1.0" fill="none"/>
<path d="M-2,179.2 L284.1,348.8 L332,281.3 M284.1,348.8 V400" stroke="#94b9f6" stroke-width="0.95" fill="none"/>
<path d="M286.0,43.8 285.1,43.3 284.6,43.1 283.7,42.6 283.3,42.4 282.3,42.0 281.9,41.8 280.9,41.4 280.5,41.2 279.5,40.8 279.0,40.7 278.0,40.3 277.6,40.2 276.6,39.9 276.1,39.7 275.1,39.4 274.6,39.3 273.6,39.1 273.1,38.9 272.1,38.7 271.6,38.6 270.6,38.4 270.1,38.3 269.1,38.2 268.6,38.1 267.5,38.0 267.0,37.9 266.0,37.8 265.5,37.8 264.4,37.7 263.9,37.7 262.9,37.7 262.4,37.7 261.3,37.7 260.8,37.7 259.8,37.7 259.3,37.7 258.2,37.8 257.7,37.8 256.7,37.9 256.2,38.0 255.2,38.1 254.7,38.2 253.6,38.3 253.1,38.4 252.1,38.6 251.6,38.7 250.6,38.9 250.1,39.0 249.1,39.3 248.6,39.4 247.6,39.7 247.1,39.8 246.1,40.1 245.7,40.3 244.7,40.6 244.2,40.8 243.2,41.1 242.8,41.3 241.8,41.7 241.4,41.9 240.4,42.3 240.0,42.6 239.1,43.0 238.6,43.2 237.7,43.7 237.3,44.0 236.4,44.5 236.0,44.7 235.1,45.3 234.7,45.5 233.8,46.1 233.4,46.4 232.6,46.9 232.2,47.2 231.4,47.8 231.0,48.1 230.2,48.8 229.8,49.1 229.1,49.7 228.7,50.1 228.0,50.8 227.8,50.9 46.1,223.5 45.9,223.7 44.0,225.5 43.7,225.9 41.8,227.8 41.5,228.2 39.7,230.1 39.4,230.5 37.7,232.5 37.4,232.9 35.8,235.0 35.5,235.3 34.0,237.5 33.7,237.9 32.2,240.0 32.0,240.4 30.6,242.6 30.4,243.0 29.0,245.3 28.8,245.7 27.6,248.0 27.4,248.4 26.2,250.7 26.0,251.1 25.0,253.5 24.8,253.9 23.8,256.3 23.6,256.8 22.7,259.2 22.6,259.6 21.8,262.0 21.6,262.5 20.9,265.0 20.8,265.4 20.2,267.9 20.1,268.3 19.5,270.8 19.4,271.3 19.0,273.8 18.9,274.3 18.5,276.8 18.5,277.3 18.2,279.8 18.2,280.3 18.0,282.8 18.0,283.3 17.9,285.8 17.9,286.3 17.8,288.8 17.9,289.3 17.9,291.8 18.0,292.3 18.1,294.8 18.2,295.3 18.5,297.8 18.5,298.3 18.9,300.8 19.0,301.3 19.4,303.8 19.5,304.2 20.0,306.7 20.1,307.2 20.8,309.7 20.9,310.1 21.6,312.6 21.7,313.0 22.5,315.5 22.7,315.9 23.6,318.3 23.8,318.8 24.7,321.1 24.9,321.6 26.0,323.9 26.2,324.3 27.3,326.7 27.5,327.1 28.8,329.4 29.0,329.8 30.3,332.0 30.5,332.4 31.9,334.6 32.2,335.0 33.6,337.2 33.9,337.6 35.4,339.7 35.7,340.1 37.3,342.1 37.6,342.5 39.3,344.5 39.6,344.9 41.4,346.9 41.7,347.2 43.5,349.1 43.9,349.5 45.8,351.3 46.1,351.6 48.1,353.4 48.4,353.8 50.5,355.5 50.8,355.8 52.9,357.5 53.3,357.8 55.4,359.4 55.8,359.7 58.0,361.2 58.4,361.5 60.7,363.0 61.1,363.2 63.4,364.7 63.8,364.9 66.2,366.2 66.6,366.5 69.0,367.8 69.4,368.0 71.9,369.2 72.3,369.4 74.8,370.5 75.3,370.7 77.8,371.7 78.2,371.9 80.8,372.9 81.3,373.1 83.8,374.0 84.3,374.1 86.9,374.9 87.4,375.1 90.1,375.8 90.5,375.9 93.2,376.6 93.7,376.7 96.4,377.3 96.9,377.4 99.6,377.9 100.1,377.9 102.8,378.3 103.3,378.4 106.1,378.7 106.6,378.8 109.3,379.0 109.8,379.1 112.6,379.2 113.1,379.3 115.8,379.3 116.3,379.3 117.1,379.3 117.6,379.3 120.2,379.3 120.7,379.2 123.4,379.1 123.9,379.0 126.6,378.8 127.1,378.7 129.8,378.4 130.3,378.3 133.0,377.9 133.5,377.8 136.1,377.3 136.6,377.2 139.2,376.7 139.7,376.6 142.3,375.9 142.8,375.8 145.4,375.1 145.9,374.9 148.4,374.1 148.9,374.0 151.4,373.1 151.9,372.9 154.4,372.0 154.8,371.8 157.3,370.8 157.7,370.6 160.2,369.5 160.6,369.2 163.0,368.1 163.4,367.8 165.8,366.6 166.2,366.4 168.5,365.0 168.9,364.8 171.2,363.4 171.6,363.2 173.8,361.7 174.2,361.4 176.3,359.9 176.7,359.6 178.8,358.1 179.2,357.7 181.2,356.1 181.6,355.8 183.5,354.1 183.9,353.8 185.8,352.0 186.2,351.7 188.0,349.9 188.3,349.5 190.1,347.7 190.5,347.3 192.2,345.4 192.5,345.0 194.1,343.1 194.4,342.7 196.0,340.7 196.3,340.3 197.8,338.2 198.1,337.8 199.5,335.7 199.7,335.3 201.1,333.2 201.3,332.8 202.6,330.6 202.8,330.2 204.0,328.0 204.3,327.5 205.4,325.3 205.6,324.8 206.6,322.6 206.7,322.4 305.7,97.6 305.8,97.3 306.2,96.4 306.4,96.0 306.7,95.0 306.8,94.6 307.2,93.7 307.3,93.2 307.6,92.3 307.7,91.8 307.9,90.9 308.0,90.5 308.2,89.5 308.3,89.0 308.5,88.1 308.6,87.6 308.7,86.7 308.8,86.2 308.9,85.3 308.9,84.8 309.0,83.8 309.0,83.4 309.1,82.4 309.1,81.9 309.1,81.0 309.1,80.5 309.0,79.5 309.0,79.1 308.9,78.1 308.9,77.7 308.8,76.7 308.8,76.2 308.6,75.3 308.5,74.8 308.4,73.9 308.3,73.4 308.1,72.5 308.0,72.0 307.7,71.1 307.6,70.6 307.4,69.7 307.2,69.2 306.9,68.3 306.8,67.9 306.4,67.0 306.3,66.5 305.9,65.6 305.7,65.2 305.3,64.3 305.1,63.9 304.7,63.0 304.5,62.6 304.0,61.7 303.8,61.3 303.3,60.4 303.1,60.0 302.5,59.2 302.3,58.8 301.7,58.0 301.5,57.6 300.9,56.8 300.6,56.4 300.0,55.6 299.7,55.2 299.1,54.5 298.7,54.1 298.1,53.3 297.8,53.0 297.1,52.3 296.7,51.9 296.0,51.2 295.7,50.9 294.9,50.2 294.6,49.9 293.8,49.2 293.4,48.9 292.7,48.3 292.3,48.0 291.5,47.3 291.1,47.1 290.2,46.5 289.8,46.2 289.0,45.6 288.6,45.4 287.7,44.8 287.3,44.6 286.4,44.1ZM284.4,48.8 284.7,48.9 285.6,49.5 285.9,49.6 286.7,50.2 287.0,50.4 287.8,51.0 288.0,51.2 288.9,51.8 289.1,52.0 289.9,52.6 290.1,52.8 290.9,53.5 291.1,53.7 291.9,54.4 292.1,54.6 292.8,55.3 293.0,55.5 293.7,56.3 293.9,56.5 294.6,57.2 294.8,57.5 295.4,58.2 295.6,58.5 296.2,59.3 296.4,59.5 297.0,60.3 297.2,60.6 297.7,61.4 297.9,61.7 298.4,62.5 298.6,62.8 299.0,63.6 299.2,63.9 299.7,64.7 299.8,65.0 300.2,65.9 300.4,66.2 300.8,67.1 300.9,67.4 301.2,68.3 301.3,68.5 301.7,69.5 301.8,69.7 302.1,70.7 302.2,71.0 302.4,71.9 302.5,72.2 302.8,73.1 302.8,73.4 303.0,74.4 303.1,74.7 303.2,75.6 303.3,75.9 303.4,76.9 303.5,77.2 303.6,78.1 303.6,78.4 303.7,79.4 303.7,79.7 303.7,80.7 303.7,81.0 303.7,81.9 303.7,82.2 303.7,83.2 303.6,83.5 303.6,84.5 303.5,84.8 303.4,85.7 303.4,86.0 303.3,87.0 303.2,87.3 303.0,88.2 303.0,88.5 302.8,89.5 302.7,89.8 302.5,90.7 302.4,91.0 302.1,91.9 302.0,92.2 301.7,93.2 301.6,93.4 301.3,94.4 301.2,94.6 300.8,95.5 300.7,95.7 201.7,320.6 201.6,320.7 200.6,323.0 200.5,323.2 199.4,325.5 199.2,325.8 198.0,328.0 197.9,328.3 196.6,330.5 196.4,330.7 195.1,332.9 194.9,333.1 193.5,335.2 193.3,335.5 191.8,337.5 191.6,337.8 190.1,339.8 189.9,340.1 188.2,342.0 188.0,342.3 186.3,344.2 186.1,344.4 184.3,346.3 184.1,346.5 182.2,348.3 182.0,348.5 180.1,350.3 179.9,350.5 177.9,352.2 177.7,352.4 175.6,354.0 175.4,354.2 173.3,355.8 173.0,356.0 170.9,357.5 170.6,357.7 168.4,359.1 168.2,359.3 165.9,360.7 165.7,360.9 163.4,362.2 163.1,362.3 160.7,363.6 160.5,363.7 158.1,364.9 157.8,365.0 155.4,366.1 155.1,366.3 152.6,367.3 152.3,367.4 149.8,368.4 149.5,368.5 147.0,369.3 146.7,369.4 144.1,370.2 143.8,370.3 141.2,371.1 140.9,371.1 138.3,371.8 138.0,371.9 135.4,372.4 135.1,372.5 132.4,373.0 132.1,373.0 129.4,373.4 129.1,373.5 126.4,373.8 126.1,373.9 123.4,374.1 123.1,374.1 120.4,374.3 120.1,374.3 117.4,374.4 117.1,374.4 116.3,374.4 116.0,374.4 113.3,374.3 112.9,374.3 110.2,374.1 109.8,374.1 107.1,373.9 106.8,373.8 104.0,373.5 103.7,373.5 101.0,373.1 100.6,373.0 97.9,372.5 97.6,372.4 94.9,371.9 94.6,371.8 91.9,371.1 91.6,371.1 89.0,370.3 88.7,370.2 86.1,369.4 85.7,369.3 83.2,368.4 82.8,368.3 80.3,367.4 80.0,367.2 77.5,366.2 77.2,366.1 74.7,364.9 74.4,364.8 72.0,363.6 71.7,363.5 69.3,362.2 69.0,362.0 66.7,360.7 66.4,360.5 64.1,359.1 63.8,359.0 61.6,357.5 61.3,357.3 59.1,355.8 58.9,355.6 56.7,354.0 56.5,353.8 54.4,352.1 54.1,351.9 52.1,350.1 51.9,349.9 49.9,348.1 49.7,347.9 47.8,346.1 47.6,345.8 45.8,343.9 45.6,343.7 43.8,341.7 43.6,341.5 41.9,339.5 41.7,339.2 40.1,337.2 39.9,336.9 38.4,334.8 38.2,334.6 36.8,332.4 36.6,332.1 35.2,329.9 35.0,329.7 33.7,327.4 33.6,327.2 32.4,324.9 32.2,324.6 31.1,322.3 31.0,322.0 29.9,319.7 29.8,319.4 28.8,317.0 28.7,316.7 27.8,314.3 27.7,314.0 26.9,311.6 26.8,311.3 26.1,308.8 26.0,308.5 25.4,306.1 25.3,305.8 24.8,303.3 24.7,303.0 24.3,300.5 24.2,300.2 23.9,297.6 23.8,297.3 23.6,294.8 23.5,294.5 23.4,292.0 23.3,291.7 23.2,289.1 23.2,288.8 23.2,286.3 23.2,286.0 23.3,283.4 23.4,283.1 23.5,280.6 23.6,280.3 23.8,277.7 23.9,277.4 24.2,274.9 24.3,274.6 24.7,272.1 24.8,271.8 25.3,269.3 25.4,269.0 26.0,266.5 26.1,266.2 26.8,263.8 26.9,263.5 27.7,261.0 27.8,260.8 28.7,258.3 28.8,258.1 29.8,255.7 29.9,255.4 31.0,253.0 31.1,252.8 32.3,250.4 32.4,250.2 33.7,247.9 33.8,247.6 35.1,245.4 35.3,245.1 36.7,242.9 36.8,242.6 38.3,240.5 38.5,240.2 40.0,238.1 40.2,237.8 41.8,235.8 42.0,235.5 43.7,233.5 43.9,233.3 45.7,231.3 45.9,231.1 47.7,229.2 47.9,228.9 49.8,227.1 49.9,227.0 231.6,54.4 231.7,54.3 232.5,53.6 232.7,53.4 233.5,52.7 233.7,52.5 234.5,51.9 234.8,51.7 235.6,51.1 235.8,50.9 236.7,50.3 236.9,50.1 237.8,49.6 238.1,49.4 238.9,48.9 239.2,48.7 240.1,48.2 240.4,48.0 241.3,47.5 241.6,47.4 242.5,46.9 242.8,46.8 243.7,46.4 244.0,46.3 245.0,45.9 245.3,45.7 246.2,45.4 246.6,45.3 247.5,44.9 247.8,44.8 248.8,44.5 249.1,44.4 250.1,44.1 250.5,44.1 251.5,43.8 251.8,43.7 252.8,43.5 253.1,43.5 254.2,43.3 254.5,43.2 255.5,43.1 255.8,43.0 256.9,42.9 257.2,42.9 258.2,42.8 258.6,42.7 259.6,42.7 259.9,42.7 261.0,42.6 261.3,42.6 262.4,42.6 262.7,42.6 263.7,42.7 264.1,42.7 265.1,42.8 265.4,42.8 266.5,42.9 266.8,42.9 267.8,43.0 268.2,43.1 269.2,43.2 269.5,43.3 270.5,43.5 270.9,43.6 271.9,43.8 272.2,43.8 273.2,44.1 273.5,44.2 274.5,44.5 274.8,44.6 275.8,44.9 276.1,45.0 277.1,45.3 277.4,45.4 278.4,45.8 278.7,45.9 279.6,46.3 279.9,46.4 280.9,46.9 281.2,47.0 282.1,47.5 282.4,47.6 283.3,48.1 283.6,48.3Z" fill="#1fd0d8" fill-rule="evenodd"/>
<path d="M33.4,288.8 33.4,291.4 32.0,281.4 31.9,278.9ZM33.4,291.4 33.6,293.9 32.2,284.0 32.0,281.4ZM33.6,293.9 33.9,296.4 32.5,286.6 32.2,284.0ZM33.9,296.4 34.2,298.9 32.8,289.1 32.5,286.6ZM34.2,298.9 34.7,301.5 33.3,291.6 32.8,289.1ZM191.5,325.1 192.8,322.9 193.0,313.3 191.7,315.6ZM192.8,322.9 194.0,320.6 194.2,311.0 193.0,313.3ZM194.0,320.6 195.2,318.3 195.4,308.7 194.2,311.0ZM195.2,318.3 196.2,316.0 196.5,306.3 195.4,308.7ZM245.1,79.6 245.2,79.1 245.9,67.1 245.8,67.6ZM245.2,79.1 245.3,78.6 246.0,66.6 245.9,67.1ZM245.3,78.6 245.5,78.1 246.2,66.1 246.0,66.6ZM65.7,260.9 65.7,260.8 64.6,250.6 64.6,250.7ZM63.0,310.7 63.0,310.6 61.9,300.9 61.9,301.0ZM65.3,307.4 65.3,307.3 64.2,297.5 64.2,297.7ZM66.2,270.7 66.2,270.6 65.1,260.5 65.1,260.5ZM66.2,270.6 66.6,268.5 65.5,258.4 65.1,260.5ZM66.6,268.5 66.6,268.4 65.5,258.3 65.5,258.4Z" fill="#840e0e" stroke="#840e0e" stroke-width="0.6"/>
<path d="M34.7,301.5 35.2,304.0 33.8,294.2 33.3,291.6ZM35.2,304.0 35.9,306.4 34.5,296.7 33.8,294.2ZM35.9,306.4 36.6,308.9 35.2,299.2 34.5,296.7ZM36.6,308.9 37.4,311.3 36.0,301.6 35.2,299.2ZM37.4,311.3 38.3,313.7 36.9,304.0 36.0,301.6ZM38.3,313.7 39.2,316.1 37.9,306.4 36.9,304.0ZM39.2,316.1 40.3,318.5 38.9,308.8 37.9,306.4ZM185.5,333.7 187.1,331.6 187.3,322.1 185.6,324.2ZM187.1,331.6 188.7,329.5 188.8,320.0 187.3,322.1ZM188.7,329.5 190.1,327.3 190.3,317.8 188.8,320.0ZM190.1,327.3 191.5,325.1 191.7,315.6 190.3,317.8ZM245.5,78.1 245.6,77.6 246.3,65.6 246.2,66.1ZM245.6,77.6 245.8,77.1 246.5,65.1 246.3,65.6ZM245.8,77.1 245.9,76.7 246.7,64.6 246.5,65.1ZM131.0,196.9 131.5,194.9 131.1,184.0 130.5,186.1ZM65.7,260.8 65.8,260.3 64.8,250.1 64.6,250.6ZM65.8,260.3 65.9,260.3 64.8,250.1 64.8,250.1ZM114.0,238.0 114.1,237.5 113.5,227.1 113.3,227.6ZM114.1,237.5 114.1,237.5 113.5,227.0 113.5,227.1ZM168.7,265.5 168.7,266.0 168.7,255.8 168.7,255.3ZM166.0,315.2 166.0,315.8 165.9,306.1 165.9,305.6ZM63.0,310.6 63.1,310.1 62.0,300.4 61.9,300.9ZM63.1,310.1 63.2,310.1 62.0,300.4 62.0,300.4ZM66.6,268.4 67.3,266.4 66.2,256.2 65.5,258.3ZM67.5,265.9 67.6,265.7 66.5,255.6 66.4,255.8Z" fill="#8a0f0f" stroke="#8a0f0f" stroke-width="0.6"/>
<path d="M40.3,318.5 41.4,320.8 40.1,311.2 38.9,308.8ZM41.4,320.8 42.7,323.0 41.3,313.5 40.1,311.2ZM42.7,323.0 44.0,325.3 42.6,315.7 41.3,313.5ZM44.0,325.3 45.3,327.5 44.0,317.9 42.6,315.7ZM45.3,327.5 46.8,329.6 45.5,320.1 44.0,317.9ZM46.8,329.6 48.3,331.8 47.1,322.3 45.5,320.1ZM48.3,331.8 49.9,333.8 48.7,324.3 47.1,322.3ZM178.4,341.4 180.3,339.6 180.3,330.1 178.4,332.0ZM180.3,339.6 182.1,337.7 182.2,328.2 180.3,330.1ZM182.1,337.7 183.8,335.7 183.9,326.2 182.2,328.2ZM183.8,335.7 185.5,333.7 185.6,324.2 183.9,326.2ZM245.9,76.7 246.1,76.2 246.9,64.1 246.7,64.6ZM278.4,79.7 278.4,80.2 279.5,68.1 279.4,67.6ZM278.4,80.2 278.5,80.7 279.5,68.6 279.5,68.1ZM278.5,80.7 278.5,81.2 279.6,69.2 279.5,68.6ZM278.5,81.2 278.5,81.7 279.6,69.7 279.6,69.2ZM252.0,115.1 252.0,115.7 252.8,104.0 252.8,103.4ZM65.9,260.3 66.1,259.8 65.0,249.6 64.8,250.1ZM113.9,238.2 114.0,238.0 113.3,227.6 113.3,227.8ZM114.1,237.5 114.3,237.0 113.7,226.5 113.5,227.0ZM168.7,265.4 168.7,265.5 168.7,255.3 168.7,255.3ZM167.0,273.0 167.2,275.1 167.1,265.1 166.9,262.9ZM167.2,275.1 167.2,275.2 167.1,265.1 167.1,265.1ZM164.1,311.6 164.1,311.8 164.0,302.1 164.0,301.9ZM166.0,315.2 166.0,315.2 165.9,305.6 165.9,305.5ZM63.2,310.1 63.4,309.6 62.2,299.9 62.0,300.4ZM67.3,266.4 67.3,266.3 66.2,256.2 66.2,256.2ZM67.3,266.3 67.5,265.9 66.4,255.8 66.2,256.2Z" fill="#900f0f" stroke="#900f0f" stroke-width="0.6"/>
<path d="M49.9,333.8 51.6,335.8 50.4,326.4 48.7,324.3ZM51.6,335.8 53.4,337.8 52.2,328.4 50.4,326.4ZM53.4,337.8 55.2,339.7 54.0,330.3 52.2,328.4ZM55.2,339.7 57.1,341.6 55.9,332.2 54.0,330.3ZM57.1,341.6 59.0,343.4 57.9,334.0 55.9,332.2ZM59.0,343.4 61.1,345.1 59.9,335.7 57.9,334.0ZM61.1,345.1 63.1,346.8 62.0,337.4 59.9,335.7ZM63.1,346.8 65.3,348.4 64.2,339.0 62.0,337.4ZM168.0,349.8 170.2,348.2 170.1,338.9 167.9,340.5ZM170.2,348.2 172.3,346.6 172.3,337.3 170.1,338.9ZM172.3,346.6 174.4,345.0 174.4,335.6 172.3,337.3ZM174.4,345.0 176.4,343.2 176.4,333.8 174.4,335.6ZM176.4,343.2 178.4,341.4 178.4,332.0 176.4,333.8ZM246.1,76.2 246.4,75.7 247.1,63.6 246.9,64.1ZM246.4,75.7 246.6,75.3 247.3,63.2 247.1,63.6ZM278.0,78.2 278.2,78.7 279.2,66.6 279.1,66.1ZM278.2,78.7 278.3,79.2 279.3,67.1 279.2,66.6ZM278.3,79.2 278.4,79.7 279.4,67.6 279.3,67.1ZM251.9,114.5 252.0,115.1 252.8,103.4 252.6,102.8ZM131.5,194.9 132.4,193.0 132.0,182.1 131.1,184.0ZM66.1,259.8 66.1,259.7 65.0,249.5 65.0,249.6ZM114.3,237.0 114.3,236.9 113.7,226.5 113.7,226.5ZM123.2,237.9 123.2,237.9 122.7,227.5 122.7,227.4ZM123.2,237.9 123.3,238.4 122.7,228.0 122.7,227.5ZM123.3,238.4 123.3,238.6 122.8,228.2 122.7,228.0ZM168.6,264.9 168.6,264.9 168.6,254.8 168.6,254.7ZM168.6,264.9 168.7,265.4 168.7,255.3 168.6,254.8ZM166.4,270.2 166.4,270.4 166.3,260.2 166.3,260.1ZM166.5,270.8 166.5,270.8 166.4,260.7 166.4,260.7ZM166.5,270.8 167.0,272.9 166.9,262.8 166.4,260.7ZM167.0,272.9 167.0,273.0 166.9,262.9 166.9,262.8ZM165.9,314.6 165.9,314.7 165.8,305.0 165.8,305.0ZM165.9,314.7 166.0,315.2 165.9,305.5 165.8,305.0ZM63.4,309.6 63.4,309.6 62.3,299.8 62.2,299.9ZM65.2,307.6 65.3,307.4 64.2,297.7 64.1,297.9Z" fill="#961010" stroke="#961010" stroke-width="0.6"/>
<path d="M65.3,348.4 67.5,349.9 66.4,340.6 64.2,339.0ZM67.5,349.9 69.7,351.4 68.7,342.1 66.4,340.6ZM69.7,351.4 72.0,352.8 71.0,343.5 68.7,342.1ZM72.0,352.8 74.3,354.1 73.3,344.9 71.0,343.5ZM74.3,354.1 76.7,355.4 75.8,346.2 73.3,344.9ZM76.7,355.4 79.2,356.6 78.2,347.4 75.8,346.2ZM79.2,356.6 81.7,357.7 80.7,348.5 78.2,347.4ZM81.7,357.7 84.2,358.8 83.3,349.5 80.7,348.5ZM84.2,358.8 86.7,359.7 85.8,350.5 83.3,349.5ZM151.3,358.7 153.8,357.6 153.6,348.4 151.1,349.4ZM153.8,357.6 156.3,356.5 156.1,347.2 153.6,348.4ZM156.3,356.5 158.7,355.3 158.6,346.0 156.1,347.2ZM158.7,355.3 161.1,354.0 161.0,344.8 158.6,346.0ZM161.1,354.0 163.5,352.7 163.3,343.4 161.0,344.8ZM163.5,352.7 165.8,351.3 165.7,342.0 163.3,343.4ZM165.8,351.3 168.0,349.8 167.9,340.5 165.7,342.0ZM246.6,75.3 246.8,74.8 247.5,62.7 247.3,63.2ZM246.8,74.8 247.1,74.3 247.8,62.3 247.5,62.7ZM277.4,76.2 277.6,76.7 278.6,64.7 278.4,64.2ZM277.6,76.7 277.7,77.2 278.8,65.1 278.6,64.7ZM277.7,77.2 277.9,77.7 278.9,65.6 278.8,65.1ZM277.9,77.7 278.0,78.2 279.1,66.1 278.9,65.6ZM251.7,113.9 251.9,114.5 252.6,102.8 252.5,102.2ZM66.1,259.7 66.4,259.3 65.3,249.1 65.0,249.5ZM114.3,236.9 114.6,236.5 114.0,226.0 113.7,226.5ZM123.0,237.3 123.0,237.4 122.5,226.9 122.5,226.9ZM123.0,237.4 123.2,237.9 122.7,227.4 122.5,226.9ZM168.5,264.3 168.5,264.4 168.4,254.2 168.4,254.2ZM168.5,264.4 168.6,264.9 168.6,254.7 168.4,254.2ZM166.4,270.4 166.5,270.8 166.4,260.7 166.3,260.2ZM164.1,311.8 164.1,312.0 164.0,302.3 164.0,302.1ZM165.7,314.1 165.7,314.1 165.6,304.5 165.6,304.4ZM165.7,314.1 165.9,314.6 165.8,305.0 165.6,304.5ZM63.4,309.6 63.7,309.1 62.5,299.4 62.3,299.8Z" fill="#9c1111" stroke="#9c1111" stroke-width="0.6"/>
<path d="M86.7,359.7 89.3,360.6 88.4,351.4 85.8,350.5ZM89.3,360.6 91.9,361.4 91.1,352.2 88.4,351.4ZM91.9,361.4 94.6,362.2 93.8,353.0 91.1,352.2ZM94.6,362.2 97.2,362.8 96.5,353.6 93.8,353.0ZM97.2,362.8 99.9,363.4 99.2,354.2 96.5,353.6ZM99.9,363.4 102.6,363.9 101.9,354.7 99.2,354.2ZM102.6,363.9 105.4,364.3 104.7,355.1 101.9,354.7ZM105.4,364.3 108.1,364.6 107.4,355.5 104.7,355.1ZM108.1,364.6 110.8,364.9 110.2,355.7 107.4,355.5ZM110.8,364.9 113.6,365.0 113.0,355.9 110.2,355.7ZM121.9,365.0 124.6,364.9 124.1,355.7 121.3,355.9ZM124.6,364.9 127.4,364.6 126.9,355.4 124.1,355.7ZM127.4,364.6 130.1,364.3 129.7,355.1 126.9,355.4ZM130.1,364.3 132.8,363.9 132.4,354.7 129.7,355.1ZM132.8,363.9 135.5,363.4 135.2,354.2 132.4,354.7ZM135.5,363.4 138.2,362.8 137.9,353.6 135.2,354.2ZM138.2,362.8 140.9,362.1 140.6,352.9 137.9,353.6ZM140.9,362.1 143.5,361.4 143.2,352.2 140.6,352.9ZM143.5,361.4 146.2,360.6 145.9,351.3 143.2,352.2ZM146.2,360.6 148.7,359.7 148.5,350.4 145.9,351.3ZM148.7,359.7 151.3,358.7 151.1,349.4 148.5,350.4ZM247.1,74.3 247.4,73.9 248.1,61.8 247.8,62.3ZM247.4,73.9 247.7,73.5 248.4,61.4 248.1,61.8ZM276.4,74.4 276.7,74.8 277.7,62.8 277.5,62.3ZM276.7,74.8 276.9,75.3 278.0,63.2 277.7,62.8ZM276.9,75.3 277.2,75.8 278.2,63.7 278.0,63.2ZM277.2,75.8 277.4,76.2 278.4,64.2 278.2,63.7ZM251.4,113.4 251.7,113.9 252.5,102.2 252.2,101.7ZM132.4,193.0 133.6,191.2 133.2,180.3 132.0,182.1ZM66.4,259.3 66.4,259.3 65.3,249.0 65.3,249.1ZM113.8,238.3 113.9,238.2 113.3,227.8 113.2,227.9ZM114.6,236.5 114.6,236.4 114.0,226.0 114.0,226.0ZM122.8,236.8 122.8,236.9 122.3,226.4 122.2,226.4ZM122.8,236.9 123.0,237.3 122.5,226.9 122.3,226.4ZM123.3,238.6 123.4,238.8 122.9,228.3 122.8,228.2ZM168.2,263.8 168.2,263.9 168.2,253.7 168.1,253.6ZM168.2,263.9 168.5,264.3 168.4,254.2 168.2,253.7ZM165.5,313.6 165.5,313.6 165.4,303.9 165.4,303.9ZM165.5,313.6 165.7,314.1 165.6,304.4 165.4,303.9ZM63.7,309.1 63.7,309.1 62.6,299.3 62.5,299.4Z" fill="#a21111" stroke="#a21111" stroke-width="0.6"/>
<path d="M113.6,365.0 116.4,365.1 115.8,356.0 113.0,355.9ZM116.4,365.1 119.1,365.1 118.6,356.0 115.8,356.0ZM119.1,365.1 121.9,365.0 121.3,355.9 118.6,356.0ZM247.7,73.5 248.0,73.1 248.7,61.0 248.4,61.4ZM248.0,73.1 248.3,72.6 249.0,60.6 248.7,61.0ZM275.3,72.7 275.6,73.1 276.6,61.0 276.3,60.6ZM275.6,73.1 275.9,73.5 276.9,61.4 276.6,61.0ZM275.9,73.5 276.2,74.0 277.2,61.9 276.9,61.4ZM276.2,74.0 276.4,74.4 277.5,62.3 277.2,61.9ZM251.1,112.8 251.4,113.4 252.2,101.7 251.9,101.2ZM66.4,259.3 66.7,258.8 65.6,248.6 65.3,249.0ZM114.6,236.4 115.0,236.0 114.4,225.6 114.0,226.0ZM122.4,236.3 122.5,236.4 121.9,225.9 121.9,225.9ZM122.5,236.4 122.8,236.8 122.2,226.4 121.9,225.9ZM167.9,263.3 167.9,263.4 167.9,253.2 167.8,253.1ZM167.9,263.4 168.2,263.8 168.1,253.6 167.9,253.2ZM164.1,312.0 164.2,312.2 164.1,302.5 164.0,302.3ZM165.1,313.1 165.2,313.1 165.1,303.4 165.0,303.4ZM165.2,313.1 165.5,313.6 165.4,303.9 165.1,303.4ZM63.7,309.1 64.0,308.7 62.9,298.9 62.6,299.3ZM65.1,307.8 65.2,307.6 64.1,297.9 64.0,298.0Z" fill="#a81212" stroke="#a81212" stroke-width="0.6"/>
<path d="M196.2,316.0 291.4,92.3 292.5,80.4 196.5,306.3ZM291.4,92.3 291.8,91.3 292.9,79.4 292.5,80.4ZM291.8,91.3 292.1,90.4 293.3,78.5 292.9,79.4ZM292.1,90.4 292.4,89.5 293.6,77.6 293.3,78.5ZM245.0,81.1 245.0,80.6 245.7,68.6 245.7,69.1ZM245.0,80.6 245.1,80.1 245.8,68.1 245.7,68.6ZM245.1,80.1 245.1,79.6 245.8,67.6 245.8,68.1ZM130.7,199.0 131.0,196.9 130.5,186.1 130.3,188.2ZM65.6,261.4 65.6,261.4 64.5,251.2 64.5,251.2ZM65.6,261.4 65.7,260.9 64.6,250.7 64.5,251.2ZM62.9,311.3 62.9,311.2 61.8,301.5 61.8,301.5ZM62.9,311.2 63.0,310.7 61.9,301.0 61.8,301.5ZM64.5,299.9 65.9,272.9 64.8,262.8 63.4,290.0ZM65.9,272.9 65.9,272.8 64.8,262.7 64.8,262.8ZM65.9,272.8 66.2,270.7 65.1,260.5 64.8,262.7ZM67.6,265.7 67.6,265.6 66.5,255.4 66.5,255.6Z" fill="#7e0d0d" stroke="#7e0d0d" stroke-width="0.6"/>
<path d="M292.4,89.5 292.7,88.6 293.8,76.7 293.6,77.6ZM292.7,88.6 292.9,87.6 294.1,75.7 293.8,76.7ZM292.9,87.6 293.1,86.7 294.3,74.8 294.1,75.7ZM245.0,82.1 245.0,81.6 245.7,69.6 245.7,70.1ZM245.0,81.6 245.0,81.1 245.7,69.1 245.7,69.6ZM65.3,307.3 65.3,307.1 64.2,297.3 64.2,297.5ZM64.5,302.1 64.5,299.9 63.4,290.1 63.3,292.3ZM64.5,299.9 64.5,299.9 63.4,290.0 63.4,290.1Z" fill="#780d0d" stroke="#780d0d" stroke-width="0.6"/>
<path d="M293.1,86.7 293.3,85.8 294.5,73.8 294.3,74.8ZM293.3,85.8 293.4,84.8 294.6,72.8 294.5,73.8ZM293.4,84.8 293.5,83.8 294.7,71.9 294.6,72.8ZM293.5,83.8 293.6,82.9 294.8,70.9 294.7,71.9Z" fill="#720c0c" stroke="#720c0c" stroke-width="0.6"/>
<path d="M293.6,82.9 293.6,81.9 294.8,69.9 294.8,70.9ZM293.6,81.9 293.6,81.0 294.8,68.9 294.8,69.9Z" fill="#6c0b0b" stroke="#6c0b0b" stroke-width="0.6"/>
<path d="M248.3,72.6 248.6,72.2 249.4,60.1 249.0,60.6ZM248.6,72.2 249.0,71.9 249.7,59.8 249.4,60.1ZM273.8,71.1 274.2,71.5 275.2,59.4 274.8,59.0ZM274.2,71.5 274.6,71.9 275.6,59.8 275.2,59.4ZM274.6,71.9 274.9,72.3 275.9,60.2 275.6,59.8ZM274.9,72.3 275.3,72.7 276.3,60.6 275.9,60.2ZM133.6,191.2 135.0,189.6 134.6,178.7 133.2,180.3ZM250.7,112.4 251.1,112.8 251.9,101.2 251.5,100.7ZM122.0,235.9 122.1,235.9 121.6,225.5 121.5,225.4ZM122.1,235.9 122.4,236.3 121.9,225.9 121.6,225.5ZM123.4,238.8 123.5,238.9 123.0,228.5 122.9,228.3ZM161.1,261.0 161.1,261.1 161.0,250.9 161.0,250.8ZM161.1,261.1 161.4,261.4 161.3,251.2 161.0,250.9ZM167.5,262.9 167.5,262.9 167.5,252.7 167.4,252.7ZM167.5,262.9 167.9,263.3 167.8,253.1 167.5,252.7ZM164.2,312.2 164.4,312.3 164.3,302.6 164.1,302.5ZM164.8,312.6 164.8,312.7 164.7,303.0 164.7,302.9ZM164.8,312.7 165.1,313.1 165.0,303.4 164.7,303.0ZM64.0,308.7 64.1,308.6 62.9,298.9 62.9,298.9Z" fill="#ae1313" stroke="#ae1313" stroke-width="0.6"/>
<path d="M249.0,71.9 249.3,71.5 250.1,59.4 249.7,59.8ZM249.3,71.5 249.7,71.1 250.5,59.0 250.1,59.4ZM272.2,69.8 272.6,70.1 273.6,58.0 273.2,57.7ZM272.6,70.1 273.1,70.4 274.0,58.3 273.6,58.0ZM273.1,70.4 273.5,70.8 274.4,58.7 274.0,58.3ZM273.5,70.8 273.8,71.1 274.8,59.0 274.4,58.7ZM250.2,111.9 250.7,112.4 251.5,100.7 251.0,100.2ZM66.7,258.8 66.8,258.8 65.7,248.6 65.6,248.6ZM73.4,257.5 73.8,257.2 72.7,246.9 72.4,247.2ZM113.6,238.5 113.8,238.3 113.2,227.9 113.0,228.0ZM115.0,236.0 115.0,236.0 114.4,225.5 114.4,225.6ZM121.6,235.5 121.7,235.5 121.1,225.1 121.1,225.0ZM121.7,235.5 122.0,235.9 121.5,225.4 121.1,225.1ZM123.5,238.9 123.7,239.0 123.2,228.6 123.0,228.5ZM157.7,258.0 159.4,259.4 159.3,249.2 157.5,247.8ZM159.4,259.4 159.5,259.5 159.3,249.2 159.3,249.2ZM159.5,259.5 161.1,261.0 161.0,250.8 159.3,249.2ZM161.4,261.4 161.6,261.5 161.4,251.3 161.3,251.2ZM167.1,262.5 167.1,262.5 167.0,252.3 167.0,252.3ZM167.1,262.5 167.5,262.9 167.4,252.7 167.0,252.3ZM164.4,312.3 164.8,312.6 164.7,302.9 164.3,302.6Z" fill="#b41313" stroke="#b41313" stroke-width="0.6"/>
<path d="M249.7,71.1 250.1,70.7 250.8,58.6 250.5,59.0ZM270.4,68.6 270.9,68.9 271.8,56.8 271.4,56.5ZM270.9,68.9 271.3,69.2 272.3,57.0 271.8,56.8ZM271.3,69.2 271.8,69.5 272.7,57.3 272.3,57.0ZM271.8,69.5 272.2,69.8 273.2,57.7 272.7,57.3ZM135.0,189.6 225.8,103.8 226.3,92.0 134.6,178.7ZM249.2,111.3 249.7,111.6 250.5,99.9 249.9,99.5ZM249.7,111.6 250.2,111.9 251.0,100.2 250.5,99.9ZM66.8,258.8 67.2,258.4 66.1,248.2 65.7,248.6ZM73.8,257.2 73.8,257.1 72.8,246.9 72.7,246.9ZM115.0,236.0 115.4,235.6 114.8,225.2 114.4,225.5ZM121.1,235.2 121.2,235.2 120.6,224.7 120.6,224.7ZM121.2,235.2 121.6,235.5 121.1,225.0 120.6,224.7ZM131.0,242.1 155.7,256.7 155.5,246.5 130.6,231.7ZM155.7,256.7 155.7,256.7 155.5,246.5 155.5,246.5ZM155.7,256.7 157.6,258.0 157.5,247.8 155.5,246.5ZM157.6,258.0 157.7,258.0 157.5,247.8 157.5,247.8ZM161.6,261.5 161.7,261.7 161.6,251.4 161.4,251.3ZM166.6,262.2 166.6,262.2 166.5,252.0 166.5,252.0ZM166.6,262.2 167.1,262.5 167.0,252.3 166.5,252.0ZM64.1,308.6 64.4,308.2 63.3,298.5 62.9,298.9ZM64.9,307.9 65.1,307.8 64.0,298.0 63.8,298.1Z" fill="#ba1414" stroke="#ba1414" stroke-width="0.6"/>
<path d="M250.1,70.7 250.5,70.4 251.3,58.3 250.8,58.6ZM250.5,70.4 250.9,70.1 251.7,57.9 251.3,58.3ZM268.5,67.7 269.0,67.9 269.9,55.8 269.4,55.5ZM269.0,67.9 269.5,68.1 270.4,56.0 269.9,55.8ZM269.5,68.1 269.9,68.4 270.9,56.2 270.4,56.0ZM269.9,68.4 270.4,68.6 271.4,56.5 270.9,56.2ZM225.8,103.8 226.2,103.4 226.7,91.6 226.3,92.0ZM231.6,102.6 232.1,102.9 232.7,91.1 232.2,90.8ZM232.1,102.9 249.2,111.3 249.9,99.5 232.7,91.1ZM67.2,258.4 67.2,258.4 66.1,248.2 66.1,248.2ZM73.3,257.6 73.4,257.5 72.4,247.2 72.3,247.3ZM73.8,257.1 75.6,255.7 74.6,245.4 72.8,246.9ZM115.4,235.6 115.4,235.6 114.8,225.1 114.8,225.2ZM120.6,234.9 120.6,234.9 120.1,224.4 120.0,224.4ZM120.6,234.9 121.1,235.2 120.6,224.7 120.1,224.4ZM123.7,239.0 123.8,239.1 123.3,228.7 123.2,228.6ZM126.8,240.0 128.9,240.9 128.5,230.5 126.3,229.6ZM128.9,240.9 129.0,241.0 128.5,230.6 128.5,230.5ZM129.0,241.0 131.0,242.1 130.6,231.7 128.5,230.6ZM131.0,242.1 131.0,242.1 130.6,231.7 130.6,231.7ZM166.0,261.9 166.1,261.9 166.0,251.7 165.9,251.7ZM166.1,261.9 166.6,262.2 166.5,252.0 166.0,251.7ZM64.4,308.2 64.5,308.2 63.4,298.5 63.3,298.5Z" fill="#c01515" stroke="#c01515" stroke-width="0.6"/>
<path d="M250.9,70.1 251.3,69.7 252.1,57.6 251.7,57.9ZM266.4,67.0 266.9,67.2 267.8,55.0 267.3,54.9ZM266.9,67.2 267.4,67.3 268.4,55.2 267.8,55.0ZM267.4,67.3 268.0,67.5 268.9,55.4 268.4,55.2ZM268.0,67.5 268.5,67.7 269.4,55.5 268.9,55.4ZM231.1,102.5 231.6,102.6 232.2,90.8 231.6,90.7ZM67.2,258.4 67.6,258.1 66.6,247.8 66.1,248.2ZM71.8,257.5 71.8,257.5 70.8,247.3 70.7,247.2ZM71.8,257.5 72.3,257.7 71.3,247.4 70.8,247.3ZM75.6,255.7 75.6,255.7 74.6,245.4 74.6,245.4ZM115.4,235.6 115.9,235.3 115.3,224.8 114.8,225.1ZM120.0,234.7 120.1,234.7 119.5,224.2 119.4,224.2ZM120.1,234.7 120.6,234.9 120.0,224.4 119.5,224.2ZM123.8,239.1 124.0,239.2 123.5,228.8 123.3,228.7ZM124.5,239.3 126.7,240.0 126.3,229.6 124.0,228.9ZM126.7,240.0 126.8,240.0 126.3,229.6 126.3,229.6ZM161.7,261.7 161.9,261.7 161.8,251.5 161.6,251.4ZM165.5,261.7 165.5,261.7 165.4,251.5 165.4,251.5ZM165.5,261.7 166.0,261.9 165.9,251.7 165.4,251.5ZM64.5,308.2 64.9,307.9 63.8,298.1 63.4,298.5Z" fill="#c61515" stroke="#c61515" stroke-width="0.6"/>
<path d="M251.3,69.7 251.8,69.4 252.5,57.3 252.1,57.6ZM251.8,69.4 252.2,69.1 253.0,57.0 252.5,57.3ZM264.2,66.6 264.8,66.7 265.7,54.5 265.1,54.4ZM264.8,66.7 265.3,66.8 266.2,54.6 265.7,54.5ZM265.3,66.8 265.9,66.9 266.8,54.7 266.2,54.6ZM265.9,66.9 266.4,67.0 267.3,54.9 266.8,54.7ZM226.2,103.4 226.7,103.1 227.2,91.3 226.7,91.6ZM230.5,102.3 231.1,102.5 231.6,90.7 231.1,90.5ZM71.2,257.4 71.2,257.4 70.2,247.1 70.1,247.1ZM71.2,257.4 71.8,257.5 70.7,247.2 70.2,247.1ZM72.3,257.7 72.5,257.7 71.5,247.5 71.3,247.4ZM75.6,255.7 77.5,254.4 76.6,244.1 74.6,245.4ZM113.5,238.6 113.6,238.5 113.0,228.0 112.9,228.2ZM119.4,234.6 119.5,234.6 118.9,224.1 118.8,224.1ZM119.5,234.6 120.0,234.7 119.4,224.2 118.9,224.1ZM124.0,239.2 124.5,239.3 124.0,228.9 123.5,228.8ZM124.5,239.3 124.5,239.3 124.0,228.9 124.0,228.9ZM161.9,261.7 162.1,261.8 162.0,251.6 161.8,251.5ZM164.9,261.6 164.9,261.6 164.8,251.4 164.8,251.4ZM164.9,261.6 165.5,261.7 165.4,251.5 164.8,251.4Z" fill="#cc1616" stroke="#cc1616" stroke-width="0.6"/>
<path d="M252.2,69.1 252.7,68.9 253.5,56.7 253.0,57.0ZM262.1,66.4 262.6,66.4 263.5,54.3 262.9,54.2ZM262.6,66.4 263.2,66.5 264.0,54.3 263.5,54.3ZM263.2,66.5 263.7,66.5 264.6,54.4 264.0,54.3ZM263.7,66.5 264.2,66.6 265.1,54.4 264.6,54.4ZM229.9,102.3 230.5,102.3 231.1,90.5 230.5,90.5ZM67.6,258.1 67.7,258.0 66.6,247.8 66.6,247.8ZM70.5,257.3 70.6,257.3 69.6,247.0 69.5,247.0ZM70.6,257.3 71.2,257.4 70.1,247.1 69.6,247.0ZM72.5,257.7 72.7,257.8 71.7,247.5 71.5,247.5ZM77.5,254.4 77.6,254.4 76.6,244.1 76.6,244.1ZM115.9,235.3 115.9,235.2 115.3,224.8 115.3,224.8ZM118.8,234.5 118.8,234.5 118.3,224.0 118.2,224.0ZM118.8,234.5 119.4,234.6 118.8,224.1 118.3,224.0ZM164.2,261.5 164.3,261.5 164.2,251.3 164.1,251.3ZM164.3,261.5 164.9,261.6 164.8,251.4 164.2,251.3Z" fill="#d21717" stroke="#d21717" stroke-width="0.6"/>
<path d="M252.7,68.9 253.1,68.6 253.9,56.5 253.5,56.7ZM253.1,68.6 253.6,68.3 254.4,56.2 253.9,56.5ZM257.7,66.9 258.2,66.7 259.1,54.6 258.5,54.7ZM258.2,66.7 258.8,66.6 259.6,54.5 259.1,54.6ZM258.8,66.6 259.3,66.6 260.2,54.4 259.6,54.5ZM259.3,66.6 259.9,66.5 260.7,54.3 260.2,54.4ZM259.9,66.5 260.4,66.5 261.3,54.3 260.7,54.3ZM260.4,66.5 261.0,66.4 261.8,54.3 261.3,54.3ZM261.0,66.4 261.5,66.4 262.4,54.2 261.8,54.3ZM261.5,66.4 262.1,66.4 262.9,54.2 262.4,54.2ZM226.7,103.1 227.2,102.8 227.7,91.0 227.2,91.3ZM228.2,102.4 228.8,102.3 229.3,90.5 228.8,90.6ZM228.8,102.3 229.4,102.3 229.9,90.5 229.3,90.5ZM229.4,102.3 229.9,102.3 230.5,90.5 229.9,90.5ZM67.7,258.0 68.2,257.8 67.1,247.5 66.6,247.8ZM69.3,257.4 69.4,257.4 68.3,247.1 68.3,247.1ZM69.4,257.4 69.9,257.3 68.9,247.1 68.3,247.1ZM69.9,257.3 70.0,257.3 68.9,247.1 68.9,247.1ZM70.0,257.3 70.5,257.3 69.5,247.0 68.9,247.1ZM72.7,257.8 72.9,257.7 71.9,247.5 71.7,247.5ZM73.1,257.7 73.3,257.6 72.3,247.3 72.1,247.4ZM77.6,254.4 79.6,253.3 78.7,243.0 76.6,244.1ZM112.6,238.8 112.6,238.8 112.0,228.3 112.0,228.3ZM112.6,238.8 113.1,238.7 112.5,228.3 112.0,228.3ZM115.9,235.2 116.4,235.0 115.8,224.5 115.3,224.8ZM117.6,234.6 117.6,234.6 117.0,224.1 117.0,224.1ZM117.6,234.6 118.2,234.5 117.6,224.0 117.0,224.1ZM118.2,234.5 118.2,234.5 117.7,224.0 117.6,224.0ZM118.2,234.5 118.8,234.5 118.2,224.0 117.7,224.0ZM162.1,261.8 162.3,261.8 162.2,251.6 162.0,251.6ZM162.3,261.8 162.5,261.7 162.4,251.5 162.2,251.6ZM163.0,261.6 163.1,261.6 163.0,251.4 162.9,251.4ZM163.1,261.6 163.6,261.5 163.5,251.3 163.0,251.4ZM163.6,261.5 163.7,261.5 163.6,251.3 163.5,251.3ZM163.7,261.5 164.2,261.5 164.1,251.3 163.6,251.3Z" fill="#d81717" stroke="#d81717" stroke-width="0.6"/>
<path d="M253.6,68.3 254.1,68.1 254.9,56.0 254.4,56.2ZM254.1,68.1 254.6,67.9 255.4,55.7 254.9,56.0ZM254.6,67.9 255.1,67.7 255.9,55.5 255.4,55.7ZM255.1,67.7 255.6,67.5 256.4,55.3 255.9,55.5ZM255.6,67.5 256.1,67.3 256.9,55.2 256.4,55.3ZM256.1,67.3 256.6,67.1 257.5,55.0 256.9,55.2ZM256.6,67.1 257.2,67.0 258.0,54.8 257.5,55.0ZM257.2,67.0 257.7,66.9 258.5,54.7 258.0,54.8ZM227.2,102.8 227.7,102.6 228.2,90.8 227.7,91.0ZM227.7,102.6 228.2,102.4 228.8,90.6 228.2,90.8ZM68.2,257.8 68.2,257.8 67.2,247.5 67.1,247.5ZM68.2,257.8 68.7,257.6 67.7,247.3 67.2,247.5ZM68.7,257.6 68.8,257.5 67.7,247.3 67.7,247.3ZM68.8,257.5 69.3,257.4 68.3,247.1 67.7,247.3ZM72.9,257.7 73.1,257.7 72.1,247.4 71.9,247.5ZM79.6,253.3 79.6,253.3 78.7,243.0 78.7,243.0ZM79.6,253.3 105.8,240.9 105.1,230.5 78.7,243.0ZM105.8,240.9 105.8,240.9 105.1,230.5 105.1,230.5ZM105.8,240.9 108.0,240.0 107.3,229.6 105.1,230.5ZM108.0,240.0 108.0,240.0 107.4,229.6 107.3,229.6ZM108.0,240.0 110.3,239.3 109.6,228.9 107.4,229.6ZM110.3,239.3 110.3,239.3 109.7,228.9 109.6,228.9ZM110.3,239.3 112.6,238.8 112.0,228.3 109.7,228.9ZM113.1,238.7 113.3,238.7 112.7,228.2 112.5,228.3ZM113.3,238.7 113.5,238.6 112.9,228.2 112.7,228.2ZM116.4,235.0 116.5,235.0 115.9,224.5 115.8,224.5ZM116.5,235.0 117.0,234.8 116.4,224.3 115.9,224.5ZM117.0,234.8 117.0,234.7 116.4,224.3 116.4,224.3ZM117.0,234.7 117.6,234.6 117.0,224.1 116.4,224.3ZM162.5,261.7 163.0,261.6 162.9,251.4 162.4,251.5Z" fill="#de1818" stroke="#de1818" stroke-width="0.6"/>
<path d="M279.2,43.9 278.3,43.4 277.4,42.9 276.5,42.5 275.5,42.1 274.5,41.7 273.5,41.4 272.5,41.1 271.5,40.8 270.5,40.5 269.5,40.3 268.5,40.1 267.4,40.0 266.4,39.8 265.3,39.7 264.3,39.7 263.2,39.6 262.2,39.6 261.1,39.7 260.1,39.7 259.0,39.8 258.0,39.9 256.9,40.1 255.9,40.3 254.9,40.5 253.8,40.8 252.8,41.0 251.8,41.3 250.8,41.7 249.9,42.1 248.9,42.5 248.0,42.9 247.0,43.3 246.1,43.8 245.2,44.3 244.3,44.9 243.5,45.5 242.6,46.0 241.8,46.7 241.0,47.3 240.2,48.0 239.5,48.7 56.0,222.9 54.1,224.8 52.3,226.8 50.5,228.7 48.8,230.8 47.1,232.9 45.6,235.0 44.1,237.2 42.7,239.4 41.4,241.7 40.2,244.0 39.0,246.3 37.9,248.7 36.9,251.1 36.0,253.6 35.2,256.0 34.5,258.5 33.9,261.0 33.3,263.5 32.9,266.1 32.5,268.6 32.2,271.2 32.0,273.7 31.9,276.3 31.9,278.9 32.0,281.4 32.2,284.0 32.5,286.6 32.8,289.1 33.3,291.6 33.8,294.2 34.5,296.7 35.2,299.2 36.0,301.6 36.9,304.0 37.9,306.4 38.9,308.8 40.1,311.2 41.3,313.5 42.6,315.7 44.0,317.9 45.5,320.1 47.1,322.3 48.7,324.3 50.4,326.4 52.2,328.4 54.0,330.3 55.9,332.2 57.9,334.0 59.9,335.7 62.0,337.4 64.2,339.0 66.4,340.6 68.7,342.1 71.0,343.5 73.3,344.9 75.8,346.2 78.2,347.4 80.7,348.5 83.3,349.5 85.8,350.5 88.4,351.4 91.1,352.2 93.8,353.0 96.5,353.6 99.2,354.2 101.9,354.7 104.7,355.1 107.4,355.5 110.2,355.7 113.0,355.9 115.8,356.0 118.6,356.0 121.3,355.9 124.1,355.7 126.9,355.4 129.7,355.1 132.4,354.7 135.2,354.2 137.9,353.6 140.6,352.9 143.2,352.2 145.9,351.3 148.5,350.4 151.1,349.4 153.6,348.4 156.1,347.2 158.6,346.0 161.0,344.8 163.3,343.4 165.7,342.0 167.9,340.5 170.1,338.9 172.3,337.3 174.4,335.6 176.4,333.8 178.4,332.0 180.3,330.1 182.2,328.2 183.9,326.2 185.6,324.2 187.3,322.1 188.8,320.0 190.3,317.8 191.7,315.6 193.0,313.3 194.2,311.0 195.4,308.7 196.5,306.3 292.5,80.4 292.9,79.4 293.3,78.5 293.6,77.6 293.8,76.7 294.1,75.7 294.3,74.8 294.5,73.8 294.6,72.8 294.7,71.9 294.8,70.9 294.8,69.9 294.8,68.9 294.8,68.0 294.7,67.0 294.6,66.0 294.5,65.1 294.3,64.1 294.1,63.2 293.9,62.2 293.6,61.3 293.3,60.3 293.0,59.4 292.6,58.5 292.2,57.6 291.8,56.7 291.3,55.8 290.8,55.0 290.3,54.1 289.7,53.3 289.1,52.5 288.5,51.7 287.9,50.9 287.2,50.2 286.5,49.4 285.8,48.7 285.1,48.0 284.3,47.4 283.5,46.7 282.7,46.1 281.9,45.5 281.0,45.0 280.1,44.4ZM276.8,78.4 276.5,78.8 276.2,79.2 275.9,79.7 275.5,80.0 275.2,80.4 274.8,80.8 274.4,81.2 274.0,81.5 273.6,81.9 273.1,82.2 272.7,82.5 272.2,82.8 271.8,83.1 271.3,83.3 270.8,83.6 270.3,83.8 269.8,84.1 269.3,84.3 268.8,84.5 268.3,84.6 267.8,84.8 267.2,85.0 266.7,85.1 266.2,85.2 265.6,85.3 265.1,85.4 264.5,85.5 264.0,85.5 263.4,85.5 262.9,85.6 262.3,85.6 261.7,85.5 261.2,85.5 260.6,85.4 260.1,85.4 259.5,85.3 259.0,85.2 258.5,85.1 257.9,84.9 257.4,84.8 256.9,84.6 256.3,84.5 255.8,84.3 255.3,84.0 254.8,83.8 254.3,83.6 253.9,83.3 253.4,83.0 252.9,82.8 252.5,82.5 252.0,82.1 251.6,81.8 251.2,81.5 250.8,81.1 250.4,80.8 250.0,80.4 249.7,80.0 249.3,79.6 249.0,79.2 248.6,78.8 248.3,78.4 248.0,77.9 247.8,77.5 247.5,77.0 247.3,76.6 247.0,76.1 246.8,75.6 246.6,75.2 246.5,74.7 246.3,74.2 246.2,73.7 246.0,73.2 245.9,72.7 245.8,72.2 245.8,71.7 245.7,71.2 245.7,70.6 245.7,70.1 245.7,69.6 245.7,69.1 245.7,68.6 245.8,68.1 245.8,67.6 245.9,67.1 246.0,66.6 246.2,66.1 246.3,65.6 246.5,65.1 246.7,64.6 246.9,64.1 247.1,63.6 247.3,63.2 247.5,62.7 247.8,62.3 248.1,61.8 248.4,61.4 248.7,61.0 249.0,60.6 249.4,60.1 249.7,59.8 250.1,59.4 250.5,59.0 250.8,58.6 251.3,58.3 251.7,57.9 252.1,57.6 252.5,57.3 253.0,57.0 253.5,56.7 253.9,56.5 254.4,56.2 254.9,56.0 255.4,55.7 255.9,55.5 256.4,55.3 256.9,55.2 257.5,55.0 258.0,54.8 258.5,54.7 259.1,54.6 259.6,54.5 260.2,54.4 260.7,54.3 261.3,54.3 261.8,54.3 262.4,54.2 262.9,54.2 263.5,54.3 264.0,54.3 264.6,54.4 265.1,54.4 265.7,54.5 266.2,54.6 266.8,54.7 267.3,54.9 267.8,55.0 268.4,55.2 268.9,55.4 269.4,55.5 269.9,55.8 270.4,56.0 270.9,56.2 271.4,56.5 271.8,56.8 272.3,57.0 272.7,57.3 273.2,57.7 273.6,58.0 274.0,58.3 274.4,58.7 274.8,59.0 275.2,59.4 275.6,59.8 275.9,60.2 276.3,60.6 276.6,61.0 276.9,61.4 277.2,61.9 277.5,62.3 277.7,62.8 278.0,63.2 278.2,63.7 278.4,64.2 278.6,64.7 278.8,65.1 278.9,65.6 279.1,66.1 279.2,66.6 279.3,67.1 279.4,67.6 279.5,68.1 279.5,68.6 279.6,69.2 279.6,69.7 279.6,70.2 279.5,70.7 279.5,71.2 279.5,71.7 279.4,72.2 279.3,72.7 279.2,73.2 279.1,73.7 278.9,74.2 278.7,74.7 278.6,75.2 278.4,75.7 278.2,76.2 277.9,76.6 277.7,77.1 277.4,77.5 277.1,78.0ZM133.2,180.3 134.6,178.7 226.3,92.0 226.7,91.6 227.2,91.3 227.7,91.0 228.2,90.8 228.8,90.6 229.3,90.5 229.9,90.5 230.5,90.5 231.1,90.5 231.6,90.7 232.2,90.8 232.7,91.1 249.9,99.5 250.5,99.9 251.0,100.2 251.5,100.7 251.9,101.2 252.2,101.7 252.5,102.2 252.6,102.8 252.8,103.4 252.8,104.0 252.7,104.6 252.6,105.2 252.4,105.8 203.1,220.9 202.3,222.5 201.3,223.9 200.0,225.2 198.6,226.3 197.0,227.2 195.2,227.8 193.4,228.3 191.6,228.5 189.7,228.4 187.9,228.1 186.1,227.5 184.4,226.7 137.6,200.5 135.8,199.3 134.1,197.8 132.7,196.1 131.6,194.3 130.9,192.3 130.4,190.3 130.3,188.2 130.5,186.1 131.1,184.0 132.0,182.1ZM66.3,254.9 66.2,254.7 65.8,254.4 65.7,254.3 65.4,253.9 65.4,253.9 65.1,253.4 65.0,253.4 64.8,252.9 64.8,252.9 64.6,252.4 64.6,252.3 64.6,251.8 64.5,251.7 64.5,251.2 64.5,251.2 64.6,250.7 64.6,250.6 64.8,250.1 64.8,250.1 65.0,249.6 65.0,249.5 65.3,249.1 65.3,249.0 65.6,248.6 65.7,248.6 66.1,248.2 66.1,248.2 66.6,247.8 66.6,247.8 67.1,247.5 67.2,247.5 67.7,247.3 67.7,247.3 68.3,247.1 68.3,247.1 68.9,247.1 68.9,247.1 69.5,247.0 69.6,247.0 70.1,247.1 70.2,247.1 70.7,247.2 70.8,247.3 71.3,247.4 71.5,247.5 71.7,247.5 71.9,247.5 72.1,247.4 72.3,247.3 72.4,247.2 72.7,246.9 72.8,246.9 74.6,245.4 74.6,245.4 76.6,244.1 76.6,244.1 78.7,243.0 78.7,243.0 105.1,230.5 105.1,230.5 107.3,229.6 107.4,229.6 109.6,228.9 109.7,228.9 112.0,228.3 112.0,228.3 112.5,228.3 112.7,228.2 112.9,228.2 113.0,228.0 113.2,227.9 113.3,227.8 113.3,227.6 113.5,227.1 113.5,227.0 113.7,226.5 113.7,226.5 114.0,226.0 114.0,226.0 114.4,225.6 114.4,225.5 114.8,225.2 114.8,225.1 115.3,224.8 115.3,224.8 115.8,224.5 115.9,224.5 116.4,224.3 116.4,224.3 117.0,224.1 117.0,224.1 117.6,224.0 117.7,224.0 118.2,224.0 118.3,224.0 118.8,224.1 118.9,224.1 119.4,224.2 119.5,224.2 120.0,224.4 120.1,224.4 120.6,224.7 120.6,224.7 121.1,225.0 121.1,225.1 121.5,225.4 121.6,225.5 121.9,225.9 121.9,225.9 122.2,226.4 122.3,226.4 122.5,226.9 122.5,226.9 122.7,227.4 122.7,227.5 122.7,228.0 122.8,228.2 122.9,228.3 123.0,228.5 123.2,228.6 123.3,228.7 123.5,228.8 124.0,228.9 124.0,228.9 126.3,229.6 126.3,229.6 128.5,230.5 128.5,230.6 130.6,231.7 130.6,231.7 155.5,246.5 155.5,246.5 157.5,247.8 157.5,247.8 159.3,249.2 159.3,249.2 161.0,250.8 161.0,250.9 161.3,251.2 161.4,251.3 161.6,251.4 161.8,251.5 162.0,251.6 162.2,251.6 162.4,251.5 162.9,251.4 163.0,251.4 163.5,251.3 163.6,251.3 164.1,251.3 164.2,251.3 164.8,251.4 164.8,251.4 165.4,251.5 165.4,251.5 165.9,251.7 166.0,251.7 166.5,252.0 166.5,252.0 167.0,252.3 167.0,252.3 167.4,252.7 167.5,252.7 167.8,253.1 167.9,253.2 168.1,253.6 168.2,253.7 168.4,254.2 168.4,254.2 168.6,254.7 168.6,254.8 168.7,255.3 168.7,255.3 168.7,255.8 168.7,255.9 168.6,256.4 168.6,256.5 168.5,257.0 168.4,257.0 168.2,257.5 168.2,257.6 167.9,258.0 167.9,258.1 167.6,258.5 167.5,258.5 167.1,258.9 167.1,258.9 166.7,259.2 166.5,259.4 166.4,259.5 166.3,259.7 166.3,259.9 166.3,260.1 166.3,260.2 166.4,260.7 166.4,260.7 166.9,262.8 166.9,262.9 167.1,265.1 167.1,265.1 167.1,267.3 167.1,267.3 165.6,294.6 165.6,294.6 165.4,296.8 165.4,296.8 164.9,299.0 164.9,299.0 164.2,301.1 164.2,301.2 164.0,301.6 164.0,301.8 164.0,301.9 164.0,302.1 164.0,302.3 164.1,302.5 164.3,302.6 164.7,302.9 164.7,303.0 165.0,303.4 165.1,303.4 165.4,303.9 165.4,303.9 165.6,304.4 165.6,304.5 165.8,305.0 165.8,305.0 165.9,305.5 165.9,305.6 165.9,306.1 165.9,306.2 165.8,306.7 165.8,306.7 165.7,307.2 165.7,307.3 165.5,307.7 165.4,307.8 165.2,308.2 165.1,308.3 164.8,308.7 164.8,308.8 164.4,309.1 164.3,309.2 163.9,309.5 163.8,309.5 163.4,309.8 163.3,309.8 162.8,310.0 162.7,310.0 162.2,310.2 162.1,310.2 161.6,310.3 161.5,310.3 161.0,310.3 160.9,310.3 160.3,310.2 160.3,310.2 159.7,310.1 159.7,310.1 159.2,309.9 159.0,309.8 158.8,309.8 158.6,309.8 158.4,309.9 158.2,310.0 158.0,310.1 157.7,310.4 157.7,310.4 155.9,311.9 155.8,311.9 153.9,313.2 153.9,313.2 151.8,314.3 151.8,314.3 125.4,326.8 125.4,326.8 123.2,327.7 123.1,327.7 120.9,328.5 120.8,328.5 118.5,329.0 118.5,329.0 118.0,329.1 117.8,329.1 117.6,329.2 117.5,329.3 117.3,329.4 117.2,329.6 117.2,329.8 117.0,330.2 117.0,330.3 116.8,330.8 116.8,330.8 116.5,331.3 116.5,331.3 116.1,331.7 116.1,331.8 115.7,332.2 115.7,332.2 115.2,332.5 115.2,332.6 114.7,332.8 114.6,332.8 114.1,333.0 114.1,333.1 113.5,333.2 113.5,333.2 112.9,333.3 112.9,333.3 112.3,333.3 112.2,333.3 111.7,333.3 111.6,333.2 111.1,333.1 111.0,333.1 110.5,332.9 110.4,332.9 110.0,332.6 109.9,332.6 109.4,332.3 109.4,332.3 109.0,331.9 109.0,331.9 108.6,331.5 108.6,331.4 108.3,331.0 108.3,330.9 108.0,330.5 108.0,330.4 107.9,329.9 107.8,329.8 107.8,329.3 107.7,329.2 107.6,329.0 107.5,328.8 107.4,328.7 107.2,328.6 107.0,328.6 106.5,328.5 106.5,328.4 104.3,327.7 104.2,327.7 102.0,326.8 102.0,326.8 99.9,325.7 99.9,325.7 75.0,310.9 75.0,310.9 73.0,309.6 73.0,309.6 71.2,308.2 71.2,308.1 69.5,306.6 69.5,306.5 69.2,306.2 69.1,306.0 68.9,305.9 68.7,305.9 68.5,305.8 68.3,305.8 68.1,305.9 67.6,306.0 67.5,306.0 67.0,306.1 66.9,306.1 66.3,306.1 66.3,306.1 65.7,306.0 65.7,306.0 65.1,305.9 65.1,305.9 64.5,305.7 64.5,305.7 64.0,305.4 63.9,305.4 63.5,305.1 63.4,305.0 63.0,304.7 63.0,304.6 62.7,304.2 62.6,304.2 62.3,303.8 62.3,303.7 62.1,303.2 62.1,303.2 61.9,302.7 61.9,302.6 61.8,302.1 61.8,302.1 61.8,301.5 61.8,301.5 61.9,301.0 61.9,300.9 62.0,300.4 62.0,300.4 62.2,299.9 62.3,299.8 62.5,299.4 62.6,299.3 62.9,298.9 62.9,298.9 63.3,298.5 63.4,298.5 63.8,298.1 64.0,298.0 64.1,297.9 64.2,297.7 64.2,297.5 64.2,297.3 64.2,297.1 64.0,296.7 64.0,296.7 63.6,294.5 63.6,294.5 63.4,292.3 63.3,292.3 63.4,290.1 63.4,290.0 64.8,262.8 64.8,262.7 65.1,260.5 65.1,260.5 65.5,258.4 65.5,258.3 66.2,256.2 66.2,256.2 66.4,255.8 66.5,255.6 66.5,255.4 66.5,255.2 66.4,255.0Z" fill="#ee1c1c" fill-rule="evenodd"/>
<path d="M278.5,45.0 277.7,44.5 276.8,44.1 275.9,43.6 275.0,43.3 274.0,42.9 273.1,42.6 272.1,42.3 271.2,42.0 270.2,41.8 269.2,41.5 268.2,41.4 267.2,41.2 266.2,41.1 265.2,41.0 264.2,40.9 263.2,40.9 262.2,40.9 261.2,40.9 260.2,41.0 259.2,41.1 258.2,41.2 257.2,41.3 256.2,41.5 255.2,41.7 254.2,42.0 253.2,42.2 252.3,42.5 251.3,42.9 250.4,43.2 249.5,43.6 248.6,44.0 247.7,44.4 246.8,44.9 245.9,45.4 245.1,45.9 244.3,46.5 243.5,47.0 242.7,47.6 241.9,48.2 241.2,48.9 240.5,49.5 57.0,223.8 55.1,225.7 53.3,227.6 51.5,229.5 49.9,231.5 48.3,233.6 46.7,235.7 45.3,237.8 43.9,240.0 42.6,242.3 41.4,244.5 40.2,246.8 39.2,249.2 38.2,251.5 37.3,253.9 36.5,256.4 35.8,258.8 35.2,261.3 34.7,263.8 34.2,266.2 33.8,268.8 33.6,271.3 33.4,273.8 33.3,276.3 33.3,278.9 33.4,281.4 33.6,283.9 33.8,286.4 34.2,288.9 34.6,291.4 35.2,293.9 35.8,296.4 36.5,298.8 37.3,301.2 38.2,303.6 39.1,306.0 40.2,308.3 41.3,310.6 42.5,312.9 43.8,315.1 45.2,317.3 46.7,319.4 48.2,321.5 49.8,323.6 51.5,325.6 53.2,327.6 55.0,329.5 56.9,331.3 58.8,333.1 60.8,334.8 62.9,336.5 65.0,338.1 67.2,339.6 69.4,341.1 71.7,342.5 74.0,343.8 76.4,345.1 78.8,346.2 81.3,347.4 83.8,348.4 86.3,349.4 88.9,350.2 91.5,351.1 94.1,351.8 96.8,352.4 99.5,353.0 102.2,353.5 104.9,353.9 107.6,354.2 110.3,354.5 113.0,354.6 115.8,354.7 118.5,354.7 121.3,354.6 124.0,354.4 126.7,354.2 129.5,353.9 132.2,353.4 134.9,352.9 137.5,352.4 140.2,351.7 142.8,351.0 145.4,350.2 148.0,349.3 150.5,348.3 153.0,347.3 155.5,346.1 157.9,344.9 160.3,343.7 162.6,342.3 164.9,340.9 167.1,339.5 169.3,337.9 171.4,336.3 173.5,334.7 175.5,332.9 177.4,331.1 179.3,329.3 181.1,327.4 182.9,325.4 184.5,323.4 186.1,321.4 187.7,319.3 189.1,317.1 190.5,315.0 191.8,312.7 193.0,310.5 194.1,308.2 195.2,305.8 291.3,79.9 291.6,79.0 292.0,78.1 292.3,77.2 292.5,76.3 292.8,75.4 293.0,74.5 293.1,73.6 293.3,72.7 293.4,71.8 293.4,70.8 293.5,69.9 293.5,69.0 293.4,68.0 293.4,67.1 293.3,66.2 293.1,65.2 293.0,64.3 292.8,63.4 292.6,62.5 292.3,61.6 292.0,60.7 291.7,59.8 291.3,59.0 291.0,58.1 290.5,57.2 290.1,56.4 289.6,55.6 289.1,54.8 288.6,54.0 288.0,53.2 287.4,52.4 286.8,51.7 286.2,51.0 285.5,50.3 284.8,49.6 284.1,48.9 283.4,48.3 282.6,47.7 281.9,47.1 281.1,46.5 280.2,46.0 279.4,45.5ZM65.1,255.5 64.8,255.3 64.8,255.2 64.7,255.2 64.7,255.1 64.3,254.7 64.3,254.7 64.2,254.6 64.2,254.5 63.9,254.1 63.9,254.0 63.8,254.0 63.8,253.9 63.6,253.4 63.5,253.3 63.5,253.3 63.5,253.2 63.3,252.7 63.3,252.6 63.3,252.6 63.3,252.5 63.2,252.0 63.2,251.9 63.2,251.9 63.2,251.8 63.2,251.3 63.2,251.2 63.2,251.1 63.2,251.0 63.3,250.5 63.3,250.4 63.3,250.4 63.3,250.3 63.4,249.8 63.5,249.7 63.5,249.7 63.5,249.6 63.7,249.1 63.7,249.0 63.8,249.0 63.8,248.9 64.1,248.5 64.1,248.4 64.2,248.3 64.2,248.3 64.6,247.9 64.6,247.8 64.7,247.8 64.7,247.7 65.1,247.3 65.2,247.3 65.2,247.2 65.3,247.2 65.7,246.9 65.8,246.8 65.8,246.8 65.9,246.7 66.4,246.5 66.5,246.4 66.5,246.4 66.6,246.4 67.1,246.2 67.2,246.1 67.3,246.1 67.4,246.1 67.9,245.9 68.0,245.9 68.0,245.9 68.1,245.9 68.7,245.8 68.8,245.8 68.8,245.8 68.9,245.8 69.5,245.8 69.6,245.8 69.6,245.8 69.7,245.8 70.3,245.9 70.4,245.9 70.4,245.9 70.5,245.9 71.1,246.0 71.1,246.0 71.2,246.1 71.3,246.1 71.6,246.2 71.8,246.0 71.8,246.0 71.8,246.0 71.9,245.9 73.7,244.5 73.7,244.5 73.8,244.4 73.8,244.4 75.8,243.1 75.8,243.1 75.9,243.1 75.9,243.0 78.0,241.9 78.0,241.9 78.0,241.9 78.1,241.9 104.5,229.4 104.5,229.4 104.6,229.4 104.6,229.4 106.8,228.5 106.8,228.4 106.9,228.4 106.9,228.4 109.2,227.7 109.2,227.7 109.3,227.7 109.3,227.6 111.7,227.1 111.7,227.1 111.8,227.1 111.8,227.1 112.1,227.1 112.2,226.8 112.2,226.7 112.2,226.6 112.2,226.6 112.4,226.1 112.5,226.0 112.5,226.0 112.5,225.9 112.8,225.4 112.9,225.4 112.9,225.3 112.9,225.2 113.3,224.8 113.3,224.8 113.4,224.7 113.4,224.7 113.8,224.3 113.9,224.2 113.9,224.2 114.0,224.1 114.4,223.8 114.5,223.8 114.6,223.7 114.6,223.7 115.1,223.4 115.2,223.4 115.3,223.4 115.3,223.3 115.8,223.1 115.9,223.1 116.0,223.1 116.1,223.1 116.6,222.9 116.7,222.9 116.8,222.9 116.8,222.9 117.4,222.8 117.5,222.8 117.6,222.8 117.6,222.8 118.2,222.8 118.3,222.8 118.4,222.8 118.4,222.8 119.0,222.8 119.1,222.8 119.1,222.9 119.2,222.9 119.8,223.0 119.9,223.0 119.9,223.0 120.0,223.1 120.5,223.3 120.6,223.3 120.7,223.3 120.7,223.4 121.2,223.6 121.3,223.6 121.4,223.7 121.4,223.7 121.9,224.0 121.9,224.1 122.0,224.1 122.1,224.2 122.5,224.5 122.5,224.6 122.6,224.6 122.6,224.7 123.0,225.1 123.0,225.2 123.1,225.2 123.1,225.3 123.4,225.7 123.4,225.8 123.5,225.8 123.5,225.9 123.7,226.4 123.8,226.5 123.8,226.5 123.8,226.6 124.0,227.1 124.0,227.2 124.0,227.2 124.0,227.3 124.1,227.6 124.3,227.7 124.4,227.7 124.4,227.7 124.5,227.7 126.7,228.4 126.8,228.4 126.8,228.5 126.9,228.5 129.0,229.4 129.1,229.4 129.1,229.4 129.2,229.5 131.3,230.6 131.3,230.6 131.3,230.6 131.3,230.6 156.2,245.4 156.3,245.4 156.3,245.4 156.3,245.5 158.3,246.7 158.3,246.8 158.3,246.8 158.4,246.8 160.2,248.3 160.2,248.3 160.3,248.3 160.3,248.4 161.9,250.0 162.0,250.0 162.0,250.0 162.1,250.1 162.2,250.3 162.5,250.2 162.6,250.2 162.7,250.2 162.8,250.1 163.3,250.1 163.4,250.1 163.5,250.1 163.6,250.0 164.1,250.0 164.2,250.0 164.3,250.0 164.4,250.1 164.9,250.1 165.0,250.1 165.1,250.1 165.1,250.1 165.7,250.3 165.8,250.3 165.8,250.3 165.9,250.3 166.4,250.5 166.5,250.6 166.6,250.6 166.7,250.6 167.1,250.9 167.2,250.9 167.3,250.9 167.3,251.0 167.8,251.3 167.9,251.4 167.9,251.4 168.0,251.4 168.4,251.8 168.4,251.9 168.5,251.9 168.5,252.0 168.9,252.4 168.9,252.4 169.0,252.5 169.0,252.6 169.3,253.0 169.3,253.1 169.4,253.1 169.4,253.2 169.6,253.7 169.7,253.7 169.7,253.8 169.7,253.9 169.9,254.4 169.9,254.4 169.9,254.5 169.9,254.6 170.0,255.1 170.0,255.2 170.0,255.2 170.0,255.3 170.0,255.8 170.0,255.9 170.0,256.0 170.0,256.0 170.0,256.6 169.9,256.6 169.9,256.7 169.9,256.8 169.8,257.3 169.7,257.3 169.7,257.4 169.7,257.5 169.5,258.0 169.5,258.0 169.4,258.1 169.4,258.2 169.1,258.6 169.1,258.7 169.0,258.7 169.0,258.8 168.7,259.2 168.6,259.3 168.6,259.3 168.5,259.4 168.1,259.7 168.0,259.8 168.0,259.8 167.9,259.9 167.7,260.1 167.7,260.3 167.8,260.4 167.8,260.4 167.8,260.5 168.2,262.6 168.2,262.7 168.2,262.7 168.2,262.8 168.5,264.9 168.5,265.0 168.5,265.1 168.5,265.1 168.5,267.3 168.5,267.3 168.5,267.4 168.5,267.4 167.0,294.6 167.0,294.7 167.0,294.7 167.0,294.7 166.7,296.9 166.7,297.0 166.7,297.0 166.7,297.1 166.2,299.2 166.2,299.3 166.2,299.3 166.2,299.4 165.5,301.5 165.5,301.5 165.5,301.6 165.5,301.6 165.4,301.8 165.6,302.1 165.7,302.1 165.7,302.2 165.8,302.2 166.1,302.6 166.2,302.7 166.2,302.7 166.3,302.8 166.5,303.2 166.6,303.3 166.6,303.4 166.6,303.4 166.9,303.9 166.9,304.0 166.9,304.0 166.9,304.1 167.1,304.6 167.1,304.7 167.1,304.7 167.2,304.8 167.2,305.3 167.2,305.4 167.2,305.5 167.3,305.6 167.3,306.1 167.3,306.1 167.3,306.2 167.2,306.3 167.2,306.8 167.2,306.9 167.2,306.9 167.1,307.0 167.0,307.5 167.0,307.6 167.0,307.7 166.9,307.7 166.7,308.2 166.7,308.3 166.7,308.3 166.6,308.4 166.3,308.9 166.3,308.9 166.3,309.0 166.2,309.0 165.9,309.5 165.8,309.5 165.8,309.6 165.7,309.6 165.3,310.0 165.3,310.1 165.2,310.1 165.2,310.1 164.7,310.5 164.7,310.5 164.6,310.5 164.5,310.6 164.0,310.9 164.0,310.9 163.9,310.9 163.8,311.0 163.3,311.2 163.2,311.2 163.2,311.2 163.1,311.2 162.6,311.4 162.5,311.4 162.4,311.4 162.3,311.4 161.8,311.5 161.7,311.5 161.6,311.5 161.5,311.5 161.0,311.5 160.9,311.5 160.8,311.5 160.7,311.5 160.2,311.5 160.1,311.4 160.0,311.4 159.9,311.4 159.4,311.3 159.3,311.3 159.2,311.3 159.2,311.2 158.9,311.1 158.7,311.3 158.6,311.3 158.6,311.4 158.6,311.4 156.8,312.8 156.7,312.9 156.7,312.9 156.6,312.9 154.7,314.2 154.6,314.2 154.6,314.2 154.5,314.3 152.5,315.4 152.4,315.4 152.4,315.4 152.4,315.4 126.0,327.9 126.0,327.9 125.9,327.9 125.9,327.9 123.7,328.9 123.7,328.9 123.6,328.9 123.6,328.9 121.3,329.6 121.3,329.6 121.2,329.7 121.2,329.7 118.9,330.2 118.8,330.2 118.7,330.2 118.7,330.2 118.4,330.3 118.4,330.5 118.3,330.6 118.3,330.7 118.3,330.8 118.1,331.2 118.0,331.3 118.0,331.4 118.0,331.4 117.7,331.9 117.7,332.0 117.6,332.0 117.6,332.1 117.2,332.5 117.2,332.6 117.1,332.6 117.1,332.7 116.7,333.0 116.6,333.1 116.6,333.1 116.5,333.2 116.1,333.5 116.0,333.5 115.9,333.6 115.9,333.6 115.4,333.9 115.3,333.9 115.3,334.0 115.2,334.0 114.7,334.2 114.6,334.2 114.5,334.2 114.4,334.3 113.9,334.4 113.8,334.4 113.8,334.4 113.7,334.5 113.1,334.5 113.0,334.5 113.0,334.5 112.9,334.6 112.3,334.6 112.2,334.6 112.2,334.6 112.1,334.6 111.5,334.5 111.4,334.5 111.4,334.5 111.3,334.5 110.7,334.3 110.7,334.3 110.6,334.3 110.5,334.3 110.0,334.1 109.9,334.0 109.9,334.0 109.8,334.0 109.3,333.7 109.2,333.7 109.2,333.7 109.1,333.6 108.6,333.3 108.6,333.3 108.5,333.2 108.5,333.2 108.1,332.8 108.0,332.7 107.9,332.7 107.9,332.6 107.5,332.2 107.5,332.2 107.5,332.1 107.4,332.1 107.1,331.6 107.1,331.5 107.0,331.5 107.0,331.4 106.8,330.9 106.8,330.9 106.7,330.8 106.7,330.7 106.6,330.2 106.5,330.2 106.5,330.1 106.5,330.0 106.5,329.7 106.2,329.7 106.2,329.7 106.1,329.6 106.0,329.6 103.8,328.9 103.7,328.9 103.7,328.9 103.6,328.9 101.5,327.9 101.4,327.9 101.4,327.9 101.3,327.9 99.3,326.8 99.2,326.8 99.2,326.7 99.2,326.7 74.3,312.0 74.2,311.9 74.2,311.9 74.2,311.9 72.2,310.6 72.2,310.6 72.1,310.6 72.1,310.5 70.3,309.1 70.3,309.1 70.2,309.0 70.2,309.0 68.5,307.4 68.5,307.4 68.5,307.3 68.4,307.3 68.3,307.1 68.0,307.2 67.9,307.2 67.8,307.2 67.7,307.2 67.2,307.3 67.1,307.3 67.0,307.3 66.9,307.3 66.4,307.3 66.3,307.3 66.2,307.3 66.1,307.3 65.6,307.3 65.5,307.3 65.4,307.3 65.3,307.2 64.8,307.1 64.7,307.1 64.6,307.1 64.6,307.0 64.0,306.9 64.0,306.8 63.9,306.8 63.8,306.8 63.3,306.5 63.3,306.5 63.2,306.4 63.1,306.4 62.7,306.1 62.6,306.0 62.6,306.0 62.5,305.9 62.1,305.6 62.0,305.5 62.0,305.5 61.9,305.4 61.6,305.0 61.5,305.0 61.5,304.9 61.5,304.8 61.2,304.4 61.1,304.3 61.1,304.3 61.1,304.2 60.8,303.7 60.8,303.7 60.8,303.6 60.8,303.5 60.6,303.0 60.6,302.9 60.6,302.9 60.5,302.8 60.5,302.3 60.5,302.2 60.5,302.2 60.4,302.1 60.4,301.6 60.4,301.5 60.4,301.4 60.4,301.3 60.5,300.8 60.5,300.8 60.5,300.7 60.6,300.6 60.7,300.1 60.7,300.0 60.7,300.0 60.8,299.9 61.0,299.4 61.0,299.3 61.0,299.3 61.1,299.2 61.3,298.8 61.4,298.7 61.4,298.7 61.5,298.6 61.8,298.2 61.9,298.1 61.9,298.1 62.0,298.0 62.4,297.6 62.4,297.6 62.5,297.5 62.5,297.5 62.8,297.3 62.7,297.1 62.7,297.0 62.7,297.0 62.7,296.9 62.2,294.8 62.2,294.7 62.2,294.7 62.2,294.6 62.0,292.4 62.0,292.4 62.0,292.3 62.0,292.3 62.0,290.1 62.0,290.0 62.0,290.0 62.0,290.0 63.5,262.7 63.5,262.7 63.5,262.6 63.5,262.6 63.7,260.4 63.7,260.4 63.7,260.3 63.7,260.3 64.2,258.1 64.2,258.1 64.2,258.0 64.2,258.0 64.9,255.9 64.9,255.8 65.0,255.8 65.0,255.7ZM132.0,179.6 132.1,179.5 132.1,179.5 133.6,177.9 133.7,177.8 225.3,91.1 225.4,91.1 225.8,90.7 225.9,90.6 226.4,90.3 226.5,90.2 227.0,90.0 227.1,89.9 227.7,89.7 227.8,89.6 228.3,89.5 228.5,89.4 229.1,89.3 229.2,89.3 229.8,89.2 229.9,89.2 230.5,89.2 230.7,89.2 231.2,89.3 231.4,89.3 231.9,89.4 232.1,89.5 232.6,89.7 232.8,89.7 233.3,89.9 233.4,90.0 250.6,98.4 250.6,98.5 251.2,98.8 251.3,98.9 251.8,99.3 252.0,99.4 252.4,99.8 252.5,99.9 252.9,100.4 253.0,100.5 253.4,101.0 253.4,101.2 253.7,101.7 253.8,101.9 253.9,102.5 254.0,102.6 254.1,103.2 254.1,103.4 254.1,104.0 254.1,104.1 254.1,104.7 254.1,104.9 253.9,105.5 253.9,105.6 253.7,106.2 253.7,106.3 204.4,221.4 204.4,221.5 203.5,223.0 203.4,223.2 202.4,224.6 202.3,224.8 201.0,226.0 200.9,226.2 199.4,227.2 199.3,227.4 197.7,228.2 197.5,228.3 195.8,229.0 195.6,229.1 193.8,229.5 193.6,229.5 191.7,229.7 191.5,229.7 189.6,229.6 189.4,229.6 187.6,229.3 187.4,229.3 185.6,228.7 185.5,228.6 183.8,227.9 183.7,227.8 136.9,201.6 136.8,201.5 135.0,200.3 134.9,200.3 134.8,200.2 133.2,198.7 133.1,198.7 133.0,198.6 131.7,196.9 131.6,196.8 131.5,196.7 130.4,194.9 130.4,194.8 130.4,194.7 129.6,192.8 129.5,192.7 129.5,192.6 129.1,190.5 129.1,190.4 129.0,190.3 128.9,188.2 128.9,188.1 128.9,188.0 129.2,185.9 129.2,185.8 129.2,185.8 129.8,183.7 129.8,183.6 129.8,183.5 130.7,181.6 130.8,181.5 130.8,181.4ZM278.0,79.1 278.0,79.1 277.7,79.5 277.6,79.6 277.3,80.0 277.3,80.0 276.9,80.4 276.9,80.4 276.6,80.8 276.5,80.9 276.2,81.3 276.1,81.3 275.8,81.7 275.7,81.7 275.3,82.1 275.3,82.1 274.9,82.4 274.9,82.5 274.4,82.8 274.4,82.8 274.0,83.1 273.9,83.2 273.5,83.5 273.5,83.5 273.0,83.8 273.0,83.8 272.5,84.1 272.5,84.1 272.0,84.4 272.0,84.4 271.5,84.7 271.5,84.7 271.0,84.9 270.9,85.0 270.4,85.2 270.4,85.2 269.9,85.4 269.8,85.4 269.3,85.6 269.3,85.6 268.8,85.8 268.7,85.8 268.2,86.0 268.2,86.0 267.6,86.2 267.6,86.2 267.0,86.3 267.0,86.3 266.5,86.4 266.4,86.4 265.9,86.5 265.8,86.5 265.3,86.6 265.2,86.6 264.7,86.7 264.6,86.7 264.1,86.7 264.0,86.8 263.5,86.8 263.4,86.8 262.9,86.8 262.8,86.8 262.3,86.8 262.3,86.8 261.7,86.8 261.7,86.8 261.1,86.7 261.1,86.7 260.5,86.7 260.5,86.7 259.9,86.6 259.9,86.6 259.3,86.5 259.3,86.5 258.7,86.4 258.7,86.4 258.1,86.3 258.1,86.3 257.6,86.2 257.5,86.1 257.0,86.0 257.0,86.0 256.4,85.8 256.4,85.8 255.9,85.6 255.8,85.6 255.3,85.4 255.3,85.4 254.8,85.2 254.7,85.2 254.2,84.9 254.2,84.9 253.7,84.7 253.7,84.7 253.2,84.4 253.1,84.4 252.7,84.1 252.6,84.1 252.2,83.8 252.1,83.8 251.7,83.5 251.7,83.5 251.2,83.1 251.2,83.1 250.7,82.8 250.7,82.8 250.3,82.4 250.3,82.4 249.9,82.0 249.8,82.0 249.4,81.7 249.4,81.6 249.0,81.3 249.0,81.2 248.6,80.8 248.6,80.8 248.3,80.4 248.2,80.4 247.9,80.0 247.9,79.9 247.5,79.5 247.5,79.5 247.2,79.1 247.2,79.0 246.9,78.6 246.9,78.6 246.6,78.1 246.6,78.1 246.3,77.6 246.3,77.6 246.0,77.1 246.0,77.1 245.8,76.6 245.8,76.6 245.6,76.1 245.6,76.1 245.4,75.6 245.3,75.6 245.2,75.1 245.2,75.0 245.0,74.5 245.0,74.5 244.8,74.0 244.8,74.0 244.7,73.5 244.7,73.4 244.6,72.9 244.6,72.9 244.5,72.4 244.5,72.3 244.4,71.8 244.4,71.8 244.4,71.3 244.4,71.2 244.3,70.7 244.3,70.7 244.3,70.2 244.3,70.1 244.3,69.6 244.3,69.6 244.3,69.1 244.3,69.0 244.4,68.5 244.4,68.5 244.4,68.0 244.4,67.9 244.5,67.4 244.5,67.4 244.6,66.9 244.6,66.8 244.7,66.3 244.7,66.3 244.8,65.8 244.9,65.7 245.0,65.3 245.0,65.2 245.2,64.7 245.2,64.7 245.4,64.2 245.4,64.2 245.6,63.7 245.6,63.6 245.8,63.2 245.8,63.1 246.1,62.7 246.1,62.6 246.3,62.2 246.3,62.1 246.6,61.7 246.6,61.6 246.9,61.2 246.9,61.2 247.2,60.7 247.3,60.7 247.6,60.3 247.6,60.2 247.9,59.8 247.9,59.8 248.3,59.4 248.3,59.4 248.7,59.0 248.7,58.9 249.1,58.5 249.1,58.5 249.5,58.1 249.5,58.1 249.9,57.7 249.9,57.7 250.3,57.4 250.4,57.3 250.8,57.0 250.8,57.0 251.2,56.7 251.3,56.6 251.7,56.3 251.8,56.3 252.2,56.0 252.2,56.0 252.7,55.7 252.7,55.7 253.2,55.4 253.3,55.4 253.7,55.1 253.8,55.1 254.3,54.9 254.3,54.8 254.8,54.6 254.8,54.6 255.3,54.4 255.4,54.4 255.9,54.2 255.9,54.2 256.5,54.0 256.5,54.0 257.0,53.8 257.1,53.8 257.6,53.6 257.6,53.6 258.2,53.5 258.2,53.5 258.8,53.4 258.8,53.4 259.4,53.3 259.4,53.3 259.9,53.2 260.0,53.2 260.5,53.1 260.6,53.1 261.1,53.0 261.2,53.0 261.7,53.0 261.8,53.0 262.3,53.0 262.4,53.0 262.9,53.0 263.0,53.0 263.5,53.0 263.6,53.0 264.1,53.0 264.2,53.1 264.7,53.1 264.8,53.1 265.3,53.2 265.4,53.2 265.9,53.3 266.0,53.3 266.5,53.4 266.5,53.4 267.1,53.5 267.1,53.5 267.7,53.6 267.7,53.7 268.2,53.8 268.3,53.8 268.8,54.0 268.8,54.0 269.4,54.2 269.4,54.2 269.9,54.4 270.0,54.4 270.5,54.6 270.5,54.6 271.0,54.9 271.0,54.9 271.5,55.1 271.6,55.1 272.0,55.4 272.1,55.4 272.6,55.7 272.6,55.7 273.1,56.0 273.1,56.0 273.5,56.3 273.6,56.4 274.0,56.7 274.0,56.7 274.5,57.0 274.5,57.0 274.9,57.4 275.0,57.4 275.4,57.8 275.4,57.8 275.8,58.1 275.8,58.2 276.2,58.6 276.2,58.6 276.6,59.0 276.6,59.0 277.0,59.4 277.0,59.4 277.3,59.8 277.4,59.9 277.7,60.3 277.7,60.3 278.0,60.7 278.0,60.8 278.3,61.2 278.4,61.3 278.6,61.7 278.7,61.7 278.9,62.2 278.9,62.2 279.2,62.7 279.2,62.7 279.4,63.2 279.4,63.2 279.7,63.7 279.7,63.7 279.9,64.2 279.9,64.3 280.1,64.7 280.1,64.8 280.2,65.3 280.2,65.3 280.4,65.8 280.4,65.8 280.5,66.3 280.5,66.4 280.6,66.9 280.6,66.9 280.7,67.4 280.7,67.5 280.8,68.0 280.8,68.0 280.9,68.5 280.9,68.6 280.9,69.1 280.9,69.1 280.9,69.6 280.9,69.7 280.9,70.2 280.9,70.2 280.9,70.7 280.9,70.8 280.9,71.3 280.9,71.3 280.8,71.8 280.8,71.9 280.7,72.4 280.7,72.4 280.6,72.9 280.6,73.0 280.5,73.5 280.5,73.5 280.4,74.0 280.4,74.1 280.2,74.6 280.2,74.6 280.0,75.1 280.0,75.1 279.8,75.6 279.8,75.6 279.6,76.1 279.6,76.2 279.4,76.6 279.4,76.7 279.2,77.1 279.1,77.2 278.9,77.6 278.9,77.7 278.6,78.1 278.6,78.2 278.3,78.6 278.3,78.6Z" fill="#14d414" fill-rule="evenodd"/>
<path d="M126.5,176.5 126.5,176.5 126.8,176.1 126.8,176.1 127.2,175.7 127.2,175.6 128.6,174.0 128.6,174.0 129.0,173.6 129.0,173.6 220.7,87.0 220.7,87.0 221.0,86.7 221.0,86.7 221.4,86.3 221.4,86.3 222.1,85.8 222.1,85.8 222.5,85.5 222.5,85.5 223.2,85.1 223.2,85.1 223.7,84.8 223.7,84.8 224.5,84.5 224.5,84.5 225.0,84.3 225.0,84.2 225.8,84.0 225.8,84.0 226.3,83.8 226.4,83.8 227.1,83.6 227.2,83.6 227.7,83.5 227.7,83.5 228.5,83.4 228.6,83.4 229.1,83.3 229.2,83.3 230.0,83.3 230.0,83.3 230.5,83.3 230.6,83.3 231.4,83.3 231.4,83.3 232.0,83.4 232.0,83.4 232.8,83.5 232.8,83.5 233.4,83.6 233.4,83.6 234.2,83.8 234.2,83.9 234.7,84.0 234.7,84.0 235.5,84.3 235.5,84.3 236.0,84.5 236.0,84.5 236.4,84.7 236.4,84.7 245.1,89.0 245.3,89.1 245.5,89.1 245.7,89.1 246.0,89.1 246.2,89.0 246.4,88.9 246.5,88.7 246.7,88.6 246.8,88.4 246.8,88.2 246.8,87.9 246.8,87.7 246.7,87.5 246.6,87.4 246.4,87.2 246.0,86.9 246.0,86.9 245.9,86.7 245.8,86.7 245.4,86.4 245.4,86.4 245.3,86.2 245.3,86.2 244.9,85.9 244.9,85.9 244.7,85.7 244.7,85.7 244.3,85.3 244.3,85.3 244.1,85.1 244.1,85.1 243.8,84.8 243.8,84.7 243.6,84.6 243.6,84.6 243.3,84.2 243.3,84.2 243.1,84.0 243.1,84.0 242.8,83.6 242.8,83.6 242.6,83.4 242.6,83.4 242.3,83.0 242.3,83.0 242.2,82.8 242.1,82.8 241.8,82.4 241.8,82.4 241.7,82.2 241.7,82.2 241.4,81.7 241.4,81.7 241.3,81.5 241.3,81.5 241.0,81.1 241.0,81.1 240.9,80.9 240.9,80.9 240.6,80.4 240.6,80.4 240.5,80.2 240.5,80.2 240.3,79.8 240.3,79.7 240.2,79.5 240.1,79.5 239.9,79.1 239.9,79.1 239.8,78.9 239.8,78.8 239.6,78.4 239.6,78.4 239.5,78.2 239.5,78.2 239.3,77.7 239.3,77.7 239.2,77.5 239.2,77.5 239.1,77.0 239.1,77.0 239.0,76.7 239.0,76.7 238.8,76.3 238.8,76.3 238.8,76.0 238.7,76.0 238.6,75.5 238.6,75.5 238.5,75.3 238.5,75.3 238.4,74.8 238.4,74.8 238.4,74.6 238.4,74.6 238.3,74.1 238.3,74.1 238.2,73.8 238.2,73.8 238.1,73.3 238.1,73.3 238.1,73.1 238.1,73.1 238.0,72.6 238.0,72.6 238.0,72.4 238.0,72.4 237.9,71.9 237.9,71.8 237.9,71.6 237.9,71.6 237.9,71.1 237.9,71.1 237.9,70.9 237.9,70.9 237.9,70.4 237.9,70.4 237.8,70.1 237.8,70.1 237.8,69.6 237.8,69.6 237.9,69.4 237.9,69.4 237.9,68.9 237.9,68.9 237.9,68.6 237.9,68.6 237.9,68.1 237.9,68.1 237.9,67.9 237.9,67.9 238.0,67.4 238.0,67.4 238.0,67.1 238.0,67.1 238.1,66.6 238.1,66.6 238.1,66.4 238.1,66.4 238.2,65.9 238.2,65.9 238.3,65.7 238.3,65.7 238.4,65.2 238.4,65.1 238.4,64.9 238.4,64.9 238.6,64.4 238.6,64.4 238.6,64.2 238.6,64.2 238.8,63.7 238.8,63.7 238.8,63.5 238.9,63.5 239.0,63.0 239.0,63.0 239.1,62.8 239.1,62.8 239.3,62.3 239.3,62.3 239.3,62.2 239.4,62.0 239.4,61.8 239.3,61.6 239.3,61.4 239.2,61.2 239.0,61.0 238.8,60.9 238.6,60.8 238.4,60.7 238.2,60.7 237.9,60.7 237.7,60.8 237.5,60.9 237.3,61.0 61.7,227.9 61.7,227.9 59.9,229.6 59.9,229.7 58.2,231.4 58.2,231.4 56.6,233.2 56.6,233.2 55.1,235.1 55.0,235.1 53.6,237.0 53.6,237.0 52.2,238.9 52.2,238.9 50.8,240.9 50.8,240.9 49.6,242.9 49.5,242.9 48.4,245.0 48.3,245.0 47.2,247.1 47.2,247.1 46.2,249.2 46.2,249.2 45.2,251.3 45.2,251.4 44.3,253.5 44.3,253.6 43.5,255.7 43.5,255.8 42.8,258.0 42.7,258.0 42.1,260.2 42.1,260.3 41.5,262.5 41.5,262.5 41.0,264.8 41.0,264.8 40.6,267.1 40.6,267.1 40.3,269.4 40.3,269.5 40.0,271.7 40.0,271.8 39.9,274.1 39.8,274.1 39.8,276.4 39.8,276.4 39.8,278.7 39.8,278.8 39.8,281.1 39.8,281.1 40.0,283.4 40.0,283.4 40.3,285.7 40.3,285.8 40.6,288.0 40.6,288.1 41.0,290.3 41.0,290.4 41.5,292.6 41.5,292.7 42.1,294.9 42.1,294.9 42.7,297.2 42.7,297.2 43.4,299.4 43.5,299.4 44.3,301.6 44.3,301.6 45.2,303.8 45.2,303.8 46.1,305.9 46.1,306.0 47.2,308.1 47.2,308.1 48.3,310.1 48.3,310.2 49.5,312.2 49.5,312.2 50.7,314.2 50.8,314.3 52.1,316.2 52.1,316.2 53.5,318.1 53.5,318.2 55.0,320.0 55.0,320.1 56.5,321.9 56.5,321.9 58.1,323.7 58.1,323.7 59.8,325.4 59.8,325.5 61.5,327.1 61.5,327.2 63.3,328.8 63.3,328.8 65.2,330.4 65.2,330.4 67.1,331.9 67.1,331.9 69.0,333.4 69.1,333.4 71.0,334.8 71.1,334.8 73.1,336.2 73.1,336.2 75.2,337.5 75.2,337.5 77.4,338.7 77.4,338.7 79.5,339.9 79.6,339.9 81.8,341.0 81.8,341.0 84.1,342.0 84.1,342.0 86.4,342.9 86.4,343.0 88.7,343.8 88.7,343.8 91.1,344.6 91.1,344.7 93.5,345.4 93.5,345.4 95.9,346.1 95.9,346.1 98.3,346.7 98.4,346.7 100.8,347.2 100.8,347.2 103.3,347.6 103.3,347.7 105.8,348.0 105.8,348.0 108.3,348.3 108.3,348.3 110.8,348.5 110.9,348.6 113.4,348.7 113.4,348.7 115.9,348.8 115.9,348.8 118.4,348.8 118.5,348.8 121.0,348.7 121.0,348.7 123.5,348.5 123.5,348.5 126.0,348.3 126.0,348.3 128.5,348.0 128.6,348.0 131.0,347.6 131.1,347.6 133.5,347.2 133.5,347.1 136.0,346.6 136.0,346.6 138.4,346.0 138.4,346.0 140.8,345.3 140.9,345.3 143.2,344.6 143.3,344.6 145.6,343.8 145.6,343.8 147.9,342.9 148.0,342.9 150.3,341.9 150.3,341.9 152.5,340.9 152.6,340.9 154.8,339.8 154.8,339.8 157.0,338.6 157.0,338.6 159.1,337.4 159.1,337.4 161.2,336.1 161.2,336.1 163.3,334.7 163.3,334.7 165.3,333.3 165.3,333.3 167.2,331.8 167.3,331.8 169.2,330.3 169.2,330.3 171.0,328.7 171.0,328.7 172.8,327.0 172.8,327.0 174.5,325.3 174.6,325.3 176.2,323.6 176.2,323.6 177.8,321.8 177.8,321.8 179.4,319.9 179.4,319.9 180.8,318.0 180.9,318.0 182.2,316.1 182.3,316.1 183.6,314.1 183.6,314.1 184.9,312.1 184.9,312.1 186.1,310.0 186.1,310.0 187.2,308.0 187.2,307.9 188.2,305.8 188.2,305.8 189.2,303.6 189.2,303.6 280.8,88.3 280.8,88.1 280.9,87.9 280.8,87.7 280.8,87.5 280.7,87.3 280.5,87.2 280.4,87.0 280.2,86.9 280.0,86.9 279.7,86.8 279.5,86.8 279.3,86.9 279.1,87.0 278.9,87.1 278.7,87.3 278.7,87.3 278.5,87.4 278.5,87.4 278.1,87.7 278.1,87.8 277.9,87.9 277.9,87.9 277.4,88.2 277.4,88.2 277.2,88.3 277.2,88.3 276.8,88.6 276.8,88.6 276.6,88.8 276.5,88.8 276.1,89.1 276.1,89.1 275.9,89.2 275.9,89.2 275.4,89.5 275.4,89.5 275.2,89.6 275.2,89.6 274.7,89.8 274.7,89.8 274.5,89.9 274.5,90.0 274.0,90.2 274.0,90.2 273.8,90.3 273.8,90.3 273.3,90.5 273.3,90.5 273.0,90.6 273.0,90.6 272.5,90.8 272.5,90.8 272.3,90.9 272.3,90.9 271.8,91.1 271.8,91.1 271.5,91.2 271.5,91.2 271.0,91.4 271.0,91.4 270.8,91.5 270.8,91.5 270.3,91.6 270.2,91.6 270.0,91.7 270.0,91.7 269.5,91.8 269.5,91.9 269.2,91.9 269.2,91.9 268.7,92.0 268.7,92.0 268.5,92.1 268.4,92.1 267.9,92.2 267.9,92.2 267.7,92.3 267.7,92.3 267.1,92.4 267.1,92.4 266.9,92.4 266.9,92.4 266.3,92.5 266.3,92.5 266.1,92.5 266.1,92.5 265.5,92.6 265.5,92.6 265.3,92.6 265.3,92.6 264.7,92.7 264.7,92.7 264.5,92.7 264.4,92.7 263.9,92.7 263.9,92.7 263.6,92.7 263.6,92.7 263.1,92.7 263.1,92.7 262.8,92.8 262.8,92.8 262.3,92.8 262.3,92.8 262.0,92.7 262.0,92.7 261.5,92.7 261.5,92.7 261.2,92.7 261.2,92.7 260.7,92.7 260.7,92.7 260.4,92.7 260.4,92.7 259.9,92.6 259.9,92.6 259.6,92.6 259.6,92.6 259.1,92.5 259.0,92.5 258.8,92.5 258.8,92.5 258.3,92.4 258.2,92.4 258.0,92.4 258.0,92.4 257.5,92.3 257.5,92.3 257.2,92.2 257.2,92.2 256.7,92.1 256.7,92.1 256.4,92.0 256.4,92.0 255.9,91.9 255.9,91.9 255.7,91.8 255.5,91.8 255.2,91.8 255.0,91.9 254.8,91.9 254.6,92.1 254.4,92.2 254.3,92.4 254.2,92.6 254.2,92.8 254.2,93.1 254.2,93.3 254.4,93.5 254.5,93.7 254.7,93.8 255.3,94.2 255.4,94.2 255.8,94.6 255.9,94.6 256.6,95.2 256.6,95.2 257.0,95.6 257.0,95.6 257.6,96.3 257.7,96.3 258.0,96.8 258.1,96.8 258.6,97.5 258.6,97.5 258.9,98.0 258.9,98.0 259.3,98.8 259.3,98.8 259.6,99.3 259.6,99.4 259.9,100.1 259.9,100.2 260.1,100.7 260.1,100.8 260.3,101.6 260.3,101.6 260.4,102.2 260.4,102.2 260.5,103.0 260.6,103.1 260.6,103.6 260.6,103.7 260.6,104.5 260.6,104.6 260.5,105.1 260.5,105.2 260.4,106.0 260.4,106.0 260.3,106.6 260.3,106.6 260.0,107.4 260.0,107.5 259.8,108.0 259.8,108.0 259.7,108.4 259.7,108.4 210.4,223.5 210.4,223.6 210.2,224.0 210.2,224.0 209.4,225.6 209.3,225.6 208.8,226.5 208.8,226.5 207.7,227.9 207.7,227.9 207.1,228.7 207.0,228.8 205.8,230.0 205.8,230.0 205.0,230.7 204.9,230.8 203.5,231.8 203.5,231.8 202.6,232.4 202.6,232.4 201.0,233.3 201.0,233.3 200.0,233.8 200.0,233.8 198.3,234.5 198.2,234.5 197.2,234.8 197.2,234.8 195.4,235.2 195.3,235.2 194.3,235.4 194.2,235.4 192.4,235.6 192.4,235.6 191.3,235.6 191.2,235.6 189.4,235.6 189.4,235.6 188.3,235.5 188.2,235.5 186.4,235.2 186.4,235.1 185.3,234.9 185.3,234.9 183.6,234.3 183.5,234.3 182.5,233.9 182.5,233.9 180.9,233.1 180.8,233.1 180.4,232.9 180.3,232.9 133.6,206.7 133.5,206.7 133.1,206.4 133.1,206.4 131.2,205.1 131.2,205.1 130.8,204.8 130.7,204.8 130.3,204.5 130.3,204.4 128.7,203.0 128.7,203.0 128.3,202.6 128.2,202.6 127.9,202.2 127.9,202.2 126.5,200.5 126.5,200.5 126.2,200.1 126.2,200.0 125.9,199.6 125.9,199.6 124.8,197.8 124.8,197.7 124.5,197.3 124.5,197.3 124.3,196.8 124.3,196.8 123.5,194.8 123.5,194.8 123.3,194.3 123.3,194.3 123.2,193.8 123.2,193.8 122.7,191.7 122.7,191.7 122.7,191.2 122.6,191.1 122.6,190.6 122.6,190.6 122.5,188.5 122.5,188.5 122.5,188.0 122.5,188.0 122.5,187.5 122.5,187.4 122.7,185.4 122.7,185.3 122.8,184.8 122.8,184.8 122.9,184.3 122.9,184.3 123.5,182.3 123.5,182.2 123.7,181.8 123.7,181.7 123.9,181.2 123.9,181.2 124.8,179.3 124.8,179.3 125.0,178.8 125.0,178.8 125.3,178.3 125.3,178.3ZM69.3,239.8 69.5,239.8 69.8,239.7 70.0,239.6 70.1,239.6 70.1,239.5 72.0,238.3 72.0,238.3 72.3,238.1 72.4,238.1 72.4,238.1 72.4,238.1 72.7,237.9 72.7,237.9 74.8,236.8 74.8,236.8 74.9,236.7 74.9,236.7 75.0,236.7 75.0,236.7 75.1,236.6 75.1,236.6 101.6,224.1 101.6,224.1 101.7,224.0 101.7,224.0 101.7,224.0 101.8,224.0 101.9,224.0 101.9,224.0 104.1,223.1 104.1,223.1 104.4,222.9 104.4,222.9 104.5,222.9 104.5,222.9 104.8,222.8 104.8,222.8 107.1,222.1 107.1,222.1 107.2,222.0 107.4,221.9 107.7,221.8 107.8,221.6 108.1,221.3 108.1,221.3 108.4,220.9 108.4,220.9 108.4,220.9 108.5,220.9 108.8,220.5 108.8,220.5 109.2,220.2 109.2,220.2 109.5,219.8 109.6,219.8 109.6,219.8 109.6,219.8 110.0,219.5 110.0,219.5 110.4,219.2 110.4,219.2 110.8,218.9 110.9,218.9 110.9,218.9 110.9,218.9 111.3,218.6 111.3,218.6 111.8,218.3 111.8,218.3 112.2,218.1 112.3,218.1 112.3,218.1 112.3,218.1 112.8,217.9 112.8,217.9 113.3,217.7 113.3,217.7 113.8,217.5 113.8,217.5 113.8,217.5 113.8,217.5 114.3,217.3 114.3,217.3 114.8,217.2 114.9,217.2 115.3,217.1 115.4,217.1 115.4,217.1 115.4,217.1 115.9,217.0 115.9,217.0 116.4,216.9 116.5,216.9 117.0,216.9 117.0,216.9 117.0,216.9 117.0,216.9 117.5,216.8 117.6,216.8 118.1,216.8 118.1,216.8 118.6,216.8 118.6,216.8 118.7,216.8 118.7,216.8 119.2,216.9 119.2,216.9 119.7,216.9 119.7,216.9 120.2,217.0 120.3,217.0 120.3,217.0 120.3,217.0 120.8,217.1 120.8,217.1 121.3,217.2 121.4,217.2 121.8,217.4 121.9,217.4 121.9,217.4 121.9,217.4 122.4,217.5 122.4,217.5 122.9,217.7 122.9,217.7 123.4,217.9 123.4,217.9 123.4,217.9 123.4,217.9 123.9,218.2 123.9,218.2 124.4,218.4 124.4,218.4 124.8,218.6 124.8,218.7 124.9,218.7 124.9,218.7 125.3,218.9 125.3,219.0 125.7,219.2 125.7,219.3 126.1,219.5 126.1,219.6 126.2,219.6 126.2,219.6 126.6,219.9 126.6,219.9 127.0,220.2 127.0,220.3 127.3,220.6 127.3,220.6 127.4,220.6 127.4,220.6 127.7,221.0 127.7,221.0 128.0,221.4 128.0,221.4 128.3,221.8 128.3,221.8 128.4,221.8 128.4,221.8 128.6,222.2 128.7,222.2 128.9,222.6 129.0,222.8 129.2,222.9 129.4,223.0 129.6,223.1 129.6,223.1 131.7,224.0 131.7,224.0 132.1,224.1 132.1,224.2 132.1,224.2 132.1,224.2 132.4,224.3 132.4,224.3 134.5,225.4 134.5,225.4 134.7,225.5 134.7,225.5 134.7,225.5 134.7,225.5 134.8,225.6 134.8,225.6 159.7,240.4 159.7,240.4 159.9,240.5 159.9,240.5 159.9,240.5 159.9,240.5 160.1,240.6 160.1,240.6 162.0,241.9 162.0,241.9 162.3,242.1 162.3,242.1 162.3,242.1 162.4,242.1 162.6,242.3 162.6,242.4 164.4,243.8 164.4,243.8 164.5,243.9 164.7,244.0 165.0,244.1 165.2,244.2 165.6,244.2 165.7,244.2 166.2,244.3 166.2,244.3 166.2,244.3 166.2,244.3 166.7,244.4 166.7,244.4 167.3,244.5 167.3,244.5 167.7,244.6 167.8,244.6 167.8,244.7 167.8,244.7 168.3,244.8 168.3,244.8 168.8,245.0 168.8,245.0 169.3,245.2 169.3,245.2 169.3,245.2 169.4,245.2 169.8,245.4 169.8,245.4 170.3,245.7 170.3,245.7 170.7,245.9 170.7,245.9 170.8,246.0 170.8,246.0 171.2,246.2 171.2,246.2 171.6,246.5 171.6,246.5 172.0,246.8 172.0,246.8 172.1,246.9 172.1,246.9 172.5,247.2 172.5,247.2 172.9,247.5 172.9,247.5 173.2,247.9 173.2,247.9 173.3,247.9 173.3,247.9 173.6,248.3 173.6,248.3 173.9,248.7 173.9,248.7 174.2,249.0 174.3,249.1 174.3,249.1 174.3,249.1 174.6,249.5 174.6,249.5 174.8,249.9 174.8,249.9 175.1,250.3 175.1,250.4 175.1,250.4 175.1,250.4 175.3,250.8 175.3,250.8 175.6,251.3 175.6,251.3 175.7,251.7 175.7,251.7 175.8,251.8 175.8,251.8 175.9,252.2 175.9,252.2 176.1,252.7 176.1,252.7 176.2,253.2 176.2,253.2 176.2,253.2 176.2,253.3 176.3,253.7 176.3,253.7 176.4,254.2 176.4,254.2 176.4,254.7 176.4,254.7 176.4,254.7 176.4,254.7 176.5,255.2 176.5,255.2 176.5,255.7 176.5,255.7 176.5,256.2 176.5,256.2 176.5,256.2 176.5,256.3 176.4,256.7 176.4,256.7 176.4,257.2 176.4,257.2 176.3,257.7 176.3,257.7 176.3,257.7 176.3,257.8 176.2,258.2 176.2,258.2 176.0,258.7 176.0,258.7 175.9,259.2 175.9,259.2 175.9,259.2 175.9,259.2 175.7,259.7 175.7,259.7 175.5,260.1 175.5,260.1 175.3,260.6 175.3,260.6 175.3,260.6 175.2,260.6 175.0,261.0 175.0,261.1 174.8,261.4 174.7,261.6 174.6,261.8 174.7,262.1 174.7,262.2 174.7,262.2 174.9,264.4 174.9,264.4 174.9,264.7 174.9,264.7 174.9,264.8 174.9,264.8 174.9,265.1 174.9,265.1 174.9,267.3 174.9,267.3 174.9,267.5 174.9,267.5 174.9,267.5 174.9,267.5 174.9,267.7 174.9,267.7 173.4,294.9 173.4,294.9 173.4,295.1 173.4,295.1 173.4,295.1 173.4,295.1 173.4,295.3 173.4,295.3 173.1,297.5 173.1,297.5 173.1,297.8 173.1,297.8 173.1,297.9 173.1,297.9 173.0,298.2 173.0,298.2 172.6,300.3 172.6,300.4 172.5,300.5 172.5,300.7 172.5,300.9 172.6,301.2 172.8,301.5 172.8,301.5 173.0,302.0 173.0,302.0 173.0,302.0 173.0,302.0 173.1,302.5 173.2,302.5 173.3,303.0 173.3,303.0 173.4,303.4 173.4,303.4 173.4,303.5 173.4,303.5 173.5,303.9 173.5,304.0 173.6,304.4 173.6,304.5 173.7,304.9 173.7,304.9 173.7,305.0 173.7,305.0 173.7,305.4 173.7,305.5 173.7,306.0 173.7,306.0 173.7,306.4 173.7,306.4 173.7,306.5 173.7,306.5 173.7,307.0 173.6,307.0 173.6,307.5 173.6,307.5 173.5,307.9 173.5,307.9 173.5,308.0 173.5,308.0 173.4,308.4 173.4,308.5 173.3,308.9 173.3,309.0 173.1,309.4 173.1,309.4 173.1,309.5 173.1,309.5 172.9,309.9 172.9,309.9 172.7,310.4 172.7,310.4 172.5,310.8 172.5,310.8 172.5,310.9 172.5,310.9 172.3,311.3 172.2,311.3 172.0,311.7 172.0,311.7 171.7,312.1 171.7,312.1 171.7,312.2 171.7,312.2 171.4,312.6 171.4,312.6 171.1,313.0 171.0,313.0 170.7,313.3 170.7,313.4 170.7,313.4 170.7,313.4 170.4,313.7 170.3,313.8 170.0,314.1 170.0,314.1 169.6,314.4 169.6,314.4 169.6,314.5 169.5,314.5 169.2,314.8 169.2,314.8 168.7,315.1 168.7,315.1 168.3,315.4 168.3,315.4 168.3,315.4 168.2,315.4 167.8,315.7 167.8,315.7 167.4,315.9 167.3,315.9 166.9,316.2 166.9,316.2 166.9,316.2 166.8,316.2 166.4,316.4 166.4,316.4 165.9,316.6 165.9,316.6 165.4,316.8 165.4,316.8 165.3,316.8 165.3,316.8 164.9,316.9 164.8,316.9 164.3,317.1 164.3,317.1 163.8,317.2 163.8,317.2 163.8,317.2 163.7,317.2 163.3,317.3 163.2,317.3 162.7,317.4 162.7,317.4 162.2,317.4 162.2,317.4 162.1,317.4 162.1,317.4 161.6,317.5 161.6,317.5 161.2,317.5 160.9,317.5 160.7,317.6 160.5,317.7 160.4,317.8 160.3,317.8 158.4,319.0 158.4,319.0 158.1,319.2 158.1,319.2 158.1,319.2 158.1,319.2 157.7,319.4 157.7,319.4 155.7,320.5 155.7,320.5 155.5,320.6 155.5,320.6 155.5,320.6 155.5,320.6 155.3,320.7 155.3,320.7 128.9,333.2 128.9,333.2 128.8,333.3 128.8,333.3 128.8,333.3 128.7,333.3 128.6,333.3 128.6,333.3 126.4,334.3 126.4,334.3 126.1,334.4 126.1,334.4 126.0,334.4 126.0,334.4 125.7,334.5 125.7,334.5 123.4,335.2 123.4,335.2 123.3,335.3 123.1,335.4 122.9,335.5 122.7,335.7 122.4,336.0 122.4,336.0 122.1,336.4 122.1,336.4 122.1,336.4 122.0,336.4 121.7,336.8 121.7,336.8 121.3,337.1 121.3,337.2 121.0,337.5 120.9,337.5 120.9,337.5 120.9,337.5 120.5,337.8 120.5,337.8 120.1,338.1 120.1,338.1 119.7,338.4 119.7,338.4 119.6,338.4 119.6,338.5 119.2,338.7 119.2,338.7 118.7,339.0 118.7,339.0 118.3,339.2 118.2,339.2 118.2,339.2 118.2,339.2 117.7,339.4 117.7,339.4 117.2,339.6 117.2,339.6 116.8,339.8 116.7,339.8 116.7,339.8 116.7,339.8 116.2,340.0 116.2,340.0 115.7,340.1 115.7,340.1 115.2,340.2 115.2,340.2 115.1,340.2 115.1,340.2 114.6,340.3 114.6,340.3 114.1,340.4 114.0,340.4 113.6,340.5 113.5,340.5 113.5,340.5 113.5,340.5 113.0,340.5 113.0,340.5 112.4,340.5 112.4,340.5 111.9,340.5 111.9,340.5 111.8,340.5 111.8,340.5 111.3,340.4 111.3,340.4 110.8,340.4 110.8,340.4 110.3,340.3 110.3,340.3 110.2,340.3 110.2,340.3 109.7,340.2 109.7,340.2 109.2,340.1 109.2,340.1 108.7,340.0 108.7,340.0 108.6,339.9 108.6,339.9 108.1,339.8 108.1,339.8 107.6,339.6 107.6,339.6 107.2,339.4 107.1,339.4 107.1,339.4 107.1,339.4 106.6,339.2 106.6,339.2 106.2,338.9 106.1,338.9 105.7,338.7 105.7,338.7 105.7,338.7 105.6,338.6 105.2,338.4 105.2,338.4 104.8,338.1 104.8,338.1 104.4,337.8 104.4,337.8 104.3,337.8 104.3,337.7 104.0,337.4 104.0,337.4 103.6,337.1 103.6,337.1 103.2,336.7 103.2,336.7 103.2,336.7 103.2,336.7 102.8,336.3 102.8,336.3 102.5,335.9 102.5,335.9 102.2,335.6 102.2,335.6 102.1,335.5 102.1,335.5 101.9,335.1 101.9,335.1 101.6,334.7 101.5,334.6 101.3,334.4 101.1,334.3 100.9,334.3 100.9,334.3 98.8,333.3 98.8,333.3 98.5,333.2 98.4,333.2 98.4,333.2 98.4,333.2 98.1,333.0 98.1,333.0 96.0,331.9 96.0,331.9 95.9,331.8 95.9,331.8 95.8,331.8 95.8,331.8 95.7,331.7 95.7,331.7 70.8,317.0 70.7,317.0 70.6,316.9 70.6,316.9 70.6,316.9 70.6,316.9 70.4,316.8 70.4,316.8 68.5,315.5 68.5,315.5 68.2,315.3 68.2,315.3 68.1,315.3 68.1,315.2 67.9,315.0 67.9,315.0 66.1,313.6 66.1,313.6 66.0,313.5 65.8,313.4 65.5,313.3 65.3,313.2 64.8,313.2 64.8,313.2 64.3,313.1 64.3,313.1 64.3,313.1 64.2,313.1 63.8,313.0 63.7,313.0 63.2,312.9 63.2,312.9 62.7,312.8 62.7,312.7 62.7,312.7 62.7,312.7 62.2,312.6 62.2,312.6 61.7,312.4 61.7,312.4 61.2,312.2 61.2,312.2 61.1,312.2 61.1,312.2 60.7,312.0 60.7,312.0 60.2,311.7 60.2,311.7 59.8,311.5 59.7,311.5 59.7,311.4 59.7,311.4 59.3,311.2 59.3,311.2 58.8,310.9 58.8,310.9 58.4,310.6 58.4,310.6 58.4,310.5 58.4,310.5 58.0,310.2 58.0,310.2 57.6,309.9 57.6,309.9 57.3,309.5 57.2,309.5 57.2,309.5 57.2,309.5 56.9,309.1 56.9,309.1 56.5,308.7 56.5,308.7 56.2,308.3 56.2,308.3 56.2,308.3 56.2,308.3 55.9,307.9 55.9,307.9 55.6,307.5 55.6,307.4 55.4,307.1 55.4,307.0 55.3,307.0 55.3,307.0 55.1,306.6 55.1,306.6 54.9,306.1 54.9,306.1 54.7,305.7 54.7,305.7 54.7,305.6 54.7,305.6 54.5,305.2 54.5,305.1 54.4,304.7 54.4,304.7 54.3,304.2 54.3,304.2 54.2,304.2 54.2,304.1 54.2,303.7 54.2,303.7 54.1,303.2 54.1,303.2 54.0,302.7 54.0,302.7 54.0,302.7 54.0,302.6 54.0,302.2 54.0,302.2 54.0,301.7 54.0,301.7 54.0,301.2 54.0,301.2 54.0,301.1 54.0,301.1 54.0,300.7 54.0,300.7 54.1,300.2 54.1,300.2 54.2,299.7 54.2,299.7 54.2,299.6 54.2,299.6 54.3,299.2 54.3,299.2 54.4,298.7 54.4,298.7 54.6,298.2 54.6,298.2 54.6,298.2 54.6,298.2 54.8,297.7 54.8,297.7 55.0,297.3 55.0,297.2 55.2,296.8 55.2,296.8 55.2,296.8 55.2,296.8 55.4,296.3 55.4,296.3 55.7,296.0 55.8,295.8 55.8,295.5 55.8,295.3 55.8,295.2 55.8,295.2 55.6,293.0 55.6,293.0 55.5,292.7 55.5,292.6 55.5,292.6 55.5,292.6 55.5,292.3 55.5,292.3 55.5,290.1 55.5,290.1 55.5,289.9 55.5,289.9 55.5,289.9 55.5,289.9 55.5,289.7 55.5,289.7 57.0,262.4 57.0,262.4 57.0,262.2 57.0,262.2 57.0,262.2 57.0,262.2 57.1,262.1 57.1,262.0 57.3,259.9 57.3,259.9 57.3,259.5 57.3,259.5 57.3,259.5 57.3,259.5 57.4,259.1 57.4,259.1 57.9,257.0 57.9,257.0 57.9,256.9 57.9,256.6 57.9,256.4 57.8,256.2 57.6,255.8 57.6,255.8 57.5,255.4 57.4,255.3 57.4,255.3 57.4,255.3 57.3,254.9 57.3,254.8 57.1,254.4 57.1,254.3 57.0,253.9 57.0,253.9 57.0,253.8 57.0,253.8 56.9,253.4 56.9,253.4 56.8,252.9 56.8,252.9 56.8,252.4 56.8,252.4 56.7,252.3 56.7,252.3 56.7,251.9 56.7,251.9 56.7,251.4 56.7,251.3 56.7,250.9 56.7,250.9 56.7,250.8 56.7,250.8 56.8,250.4 56.8,250.3 56.8,249.9 56.8,249.8 56.9,249.4 56.9,249.4 56.9,249.3 56.9,249.3 57.0,248.9 57.0,248.9 57.2,248.4 57.2,248.4 57.3,247.9 57.3,247.9 57.3,247.9 57.3,247.8 57.5,247.4 57.5,247.4 57.7,246.9 57.7,246.9 57.9,246.5 57.9,246.5 57.9,246.5 57.9,246.4 58.2,246.0 58.2,246.0 58.4,245.6 58.4,245.6 58.7,245.2 58.7,245.2 58.7,245.1 58.7,245.1 59.0,244.7 59.0,244.7 59.4,244.3 59.4,244.3 59.7,244.0 59.7,243.9 59.7,243.9 59.7,243.9 60.1,243.6 60.1,243.6 60.4,243.2 60.5,243.2 60.8,242.9 60.8,242.9 60.9,242.8 60.9,242.8 61.3,242.5 61.3,242.5 61.7,242.2 61.7,242.2 62.1,241.9 62.1,241.9 62.2,241.9 62.2,241.9 62.6,241.6 62.6,241.6 63.1,241.4 63.1,241.4 63.5,241.1 63.5,241.1 63.6,241.1 63.6,241.1 64.0,240.9 64.1,240.9 64.5,240.7 64.6,240.7 65.0,240.5 65.0,240.5 65.1,240.5 65.1,240.5 65.6,240.4 65.6,240.4 66.1,240.2 66.1,240.2 66.6,240.1 66.6,240.1 66.7,240.1 66.7,240.1 67.2,240.0 67.2,240.0 67.7,239.9 67.7,239.9 68.2,239.9 68.3,239.9 68.3,239.9 68.3,239.9 68.8,239.9 68.8,239.9Z" fill="#f3961c" fill-rule="evenodd"/>
<g clip-path="url(#infc)"><rect x="20" y="30" width="290" height="340" filter="url(#nz)"/></g>
</svg></div><div id="vline"></div>
<div id="side"><div class="tab" style="top:0.00px;height:22.22px"></div><div class="tab sel" style="top:22.22px;height:22.22px"></div><div class="tab" style="top:44.44px;height:22.22px"></div><div class="tab" style="top:66.66px;height:22.22px"></div><div class="tab" style="top:88.88px;height:22.22px"></div><div class="tab" style="top:111.10px;height:22.22px"></div><div class="tab" style="top:133.32px;height:22.22px"></div><div class="tab" style="top:155.54px;height:22.22px"></div><div class="tab" style="top:177.76px;height:22.22px"></div><div class="tab" style="top:199.98px;height:22.22px"></div><div class="tab" style="top:222.20px;height:22.22px"></div><div class="tab" style="top:244.42px;height:22.22px"></div><div class="tab" style="top:266.64px;height:22.22px"></div><div class="tab" style="top:288.86px;height:22.22px"></div><div class="tab" style="top:311.08px;height:22.22px"></div><div class="tab" style="top:333.30px;height:22.22px"></div><div class="tab" style="top:355.52px;height:22.22px"></div><div class="tab" style="top:377.74px;height:22.22px"></div></div>
<svg class="ic" style="left:338.4px;top:49.7px" width="10.2" height="10.2" viewBox="0 0 10 10"><path d="M5.00,0.70 L6.23,3.70 L9.47,3.95 L7.00,6.05 L7.76,9.20 L5.00,7.50 L2.24,9.20 L3.00,6.05 L0.53,3.95 L3.77,3.70Z" fill="none" stroke="#141b29" stroke-width="1.1" stroke-linejoin="miter"/></svg>
<svg class="ic" style="left:338.4px;top:71.9px" width="10.2" height="10.2" viewBox="0 0 10 10"><path d="M3.67,1.64 A3.9,3.9 0 1 1 1.14,5.84" fill="none" stroke="#141b29" stroke-width="1.2"/><path d="M1.3,1.7 L4.0,-0.2 L4.0,3.6Z" fill="#141b29"/></svg>
<svg class="ic" style="left:338.4px;top:93.9px" width="10.2" height="10.2" viewBox="0 0 10 10"><rect x="0.6" y="0.6" width="2.3" height="1.1" fill="#141b29"/><rect x="0.6" y="3.4" width="5.8" height="1.8" fill="#141b29"/><rect x="0.6" y="7.0" width="9.1" height="2.7" fill="#141b29"/></svg>
<svg class="ic" style="left:338.4px;top:116.0px" width="10.2" height="10.2" viewBox="0 0 10 10"><rect x="0.6" y="0.6" width="8.8" height="8.8" rx="1.6" fill="none" stroke="#141b29" stroke-width="1.2"/><rect x="2.6" y="2.6" width="0.9" height="0.9" fill="#141b29"/><rect x="2.6" y="4.5" width="0.9" height="0.9" fill="#141b29"/><rect x="2.6" y="6.5" width="0.9" height="0.9" fill="#141b29"/><rect x="4.5" y="2.6" width="0.9" height="0.9" fill="#141b29"/><rect x="4.5" y="6.5" width="0.9" height="0.9" fill="#141b29"/><rect x="6.5" y="2.6" width="0.9" height="0.9" fill="#141b29"/><rect x="6.5" y="4.5" width="0.9" height="0.9" fill="#141b29"/><rect x="6.5" y="6.5" width="0.9" height="0.9" fill="#141b29"/></svg>
<svg class="ic" style="left:338.4px;top:138.2px" width="10.2" height="10.2" viewBox="0 0 10 10"><path d="M0.3,0.9 H9.7 M0.3,9.1 H9.7" stroke="#141b29" stroke-width="1.2" fill="none"/><path d="M0.5,3.3 H9.5 M0.5,6.9 H9.5" stroke="#141b29" stroke-width="1.1" stroke-dasharray="1.3 0.9" fill="none"/></svg>
<svg class="ic" style="left:338.4px;top:160.6px" width="10.2" height="10.2" viewBox="0 0 10 10"><rect x="0.3" y="0.3" width="9.4" height="9.4" rx="1.7" fill="#141b29"/><circle cx="2.7" cy="2.7" r="0.95" fill="#fff"/><circle cx="7.3" cy="2.7" r="0.95" fill="#fff"/><circle cx="2.7" cy="7.3" r="0.95" fill="#fff"/><circle cx="7.3" cy="7.3" r="0.95" fill="#fff"/><circle cx="5.0" cy="5.0" r="0.95" fill="#fff"/></svg>
<svg class="ic" style="left:338.4px;top:182.8px" width="10.2" height="10.2" viewBox="0 0 10 10"><circle cx="5.3" cy="4.8" r="4.1" fill="none" stroke="#141b29" stroke-width="1.2"/><circle cx="5.1" cy="4.4" r="1.0" fill="#141b29"/><path d="M5.4,3.9 L6.6,2.4" stroke="#141b29" stroke-width="0.9"/><path d="M2.2,7.2 L0.3,9.6 L3.4,8.6Z" fill="#141b29"/></svg>
<svg class="ic" style="left:338.4px;top:205.7px" width="10.2" height="10.2" viewBox="0 0 10 10"><path d="M1.6,8.2 A4.3,4.3 0 1 1 8.4,8.2" fill="none" stroke="#141b29" stroke-width="1.2" stroke-linecap="round"/><path d="M5,5.9 L7.3,3.2" stroke="#141b29" stroke-width="1.3" stroke-linecap="round"/></svg>
<svg class="ic" style="left:338.4px;top:227.5px" width="10.2" height="10.2" viewBox="0 0 10 10"><path d="M0.6,8.9 H8.4 A1.25,1.25 0 0 0 8.4,6.4 H1.8 A1.25,1.25 0 0 1 1.8,3.9 H5.6" fill="none" stroke="#141b29" stroke-width="1.15" stroke-linecap="round"/><path d="M6.3,0.7 H9.5 V1.6 L7.9,3.2 L6.3,1.6Z" fill="#141b29" stroke="#141b29" stroke-width="0.6" stroke-linejoin="round"/></svg>
<svg class="ic" style="left:338.4px;top:249.6px" width="10.2" height="10.2" viewBox="0 0 10 10"><path d="M5,5 C3.4,3.8 3.0,1.6 4.3,0.7 C5.6,0.0 6.8,1.2 6.2,2.6 C5.9,3.4 5.4,4.2 5,5Z" transform="rotate(20 5 5)" fill="none" stroke="#141b29" stroke-width="1.3" stroke-linejoin="round"/><path d="M5,5 C3.4,3.8 3.0,1.6 4.3,0.7 C5.6,0.0 6.8,1.2 6.2,2.6 C5.9,3.4 5.4,4.2 5,5Z" transform="rotate(110 5 5)" fill="none" stroke="#141b29" stroke-width="1.3" stroke-linejoin="round"/><path d="M5,5 C3.4,3.8 3.0,1.6 4.3,0.7 C5.6,0.0 6.8,1.2 6.2,2.6 C5.9,3.4 5.4,4.2 5,5Z" transform="rotate(200 5 5)" fill="none" stroke="#141b29" stroke-width="1.3" stroke-linejoin="round"/><path d="M5,5 C3.4,3.8 3.0,1.6 4.3,0.7 C5.6,0.0 6.8,1.2 6.2,2.6 C5.9,3.4 5.4,4.2 5,5Z" transform="rotate(290 5 5)" fill="none" stroke="#141b29" stroke-width="1.3" stroke-linejoin="round"/><circle cx="5" cy="5" r="1.2" fill="#141b29"/></svg>
<svg class="ic" style="left:338.4px;top:271.5px" width="10.2" height="10.2" viewBox="0 0 10 10"><path d="M5,0.6 L8.6,4.0 L5,7.2 L1.4,4.0Z" fill="none" stroke="#141b29" stroke-width="1.15" stroke-linejoin="round"/><path d="M0.7,9.3 H9.3" stroke="#141b29" stroke-width="1.1"/><path d="M1.2,5.6 V9 M3.4,7.4 V9 M6.6,7.4 V9 M8.8,5.6 V9" stroke="#141b29" stroke-width="1.0" stroke-dasharray="1 0.7"/></svg>
<svg class="ic" style="left:338.4px;top:294.2px" width="10.2" height="10.2" viewBox="0 0 10 10"><path d="M5,0.3 V5.0 M2.9,3.2 L5,5.3 L7.1,3.2" fill="none" stroke="#141b29" stroke-width="1.2" stroke-linejoin="round"/><path d="M1.0,4.6 V6.3 A1.2,1.2 0 0 0 2.2,7.5 H7.8 A1.2,1.2 0 0 0 9.0,6.3 V4.6" fill="none" stroke="#141b29" stroke-width="1.2"/><path d="M0.6,9.5 H9.6" stroke="#141b29" stroke-width="1.0" stroke-dasharray="1.1 0.8"/></svg>
<svg class="ic" style="left:338.4px;top:316.2px" width="10.2" height="10.2" viewBox="0 0 10 10"><rect x="0.7" y="1.6" width="3.6" height="2.6" rx="0.9" fill="none" stroke="#141b29" stroke-width="1.1"/><path d="M4.0,4.2 V6.8 A1.2,1.2 0 0 1 2.8,8.0 H1.4" fill="none" stroke="#141b29" stroke-width="1.1"/><rect x="5.7" y="1.6" width="3.6" height="2.6" rx="0.9" fill="none" stroke="#141b29" stroke-width="1.1"/><path d="M6.0,4.2 V6.8 A1.2,1.2 0 0 0 7.2,8.0 H8.6" fill="none" stroke="#141b29" stroke-width="1.1"/></svg>
<svg class="ic" style="left:338.4px;top:338.4px" width="10.2" height="10.2" viewBox="0 0 10 10"><g transform="rotate(-35 5 5)"><rect x="-0.3" y="2.7" width="10.6" height="4.6" rx="2.3" fill="none" stroke="#141b29" stroke-width="1.2"/><path d="M3.3,2.7 V7.3 M6.7,2.7 V7.3" stroke="#141b29" stroke-width="1.1"/></g></svg>
<svg class="ic" style="left:338.4px;top:360.7px" width="10.2" height="10.2" viewBox="0 0 10 10"><path d="M5.00,1.10 L6.12,3.86 L9.09,4.07 L6.81,5.99 L7.53,8.88 L5.00,7.30 L2.47,8.88 L3.19,5.99 L0.91,4.07 L3.88,3.86Z" fill="none" stroke="#141b29" stroke-width="1.7" stroke-linejoin="miter"/></svg>
<svg class="ic" style="left:338.4px;top:383.1px" width="10.2" height="10.2" viewBox="0 0 10 10"><path d="M3.6,0.6 H6.4 M4.0,0.6 V3.6 L1.5,8.6 A0.6,0.6 0 0 0 2.0,9.4 H8.0 A0.6,0.6 0 0 0 8.5,8.6 L6.0,3.6 V0.6" fill="none" stroke="#141b29" stroke-width="1.15" stroke-linejoin="round"/></svg>
<svg class="ic" style="left:338.4px;top:405.2px" width="10.2" height="10.2" viewBox="0 0 10 10"><path d="M2.4,0.6 H5.9 L8.9,3.6 V8.0 A1.4,1.4 0 0 1 7.5,9.4 H2.4 A1.4,1.4 0 0 1 1.0,8.0 V2.0 A1.4,1.4 0 0 1 2.4,0.6Z" fill="none" stroke="#141b29" stroke-width="1.2"/><path d="M5.6,0.8 V3.9 H8.7" fill="none" stroke="#141b29" stroke-width="1.0"/><path d="M3.0,5.6 H5.0 M3.0,7.4 H6.6" stroke="#141b29" stroke-width="1.0"/></svg>
<div style="position:absolute;left:331px;top:420px;width:24px;height:15px;overflow:hidden"><svg class="ic" style="left:7.4px;top:8.6px" width="10.2" height="10.2" viewBox="0 0 10 10"><rect x="0.8" y="0.8" width="8.4" height="9" fill="none" stroke="#141b29" stroke-width="1.2"/><path d="M3.3,5.6 H6.7" stroke="#141b29" stroke-width="1.3"/></svg></div>
<svg class="ic" style="left:368.2px;top:47.6px" width="10.2" height="10.2" viewBox="0 0 10 10"><rect x="0.6" y="0.6" width="8.8" height="8.8" rx="1.6" fill="none" stroke="#141b29" stroke-width="1.2"/><rect x="2.6" y="2.6" width="0.9" height="0.9" fill="#141b29"/><rect x="2.6" y="4.5" width="0.9" height="0.9" fill="#141b29"/><rect x="2.6" y="6.5" width="0.9" height="0.9" fill="#141b29"/><rect x="4.5" y="2.6" width="0.9" height="0.9" fill="#141b29"/><rect x="4.5" y="6.5" width="0.9" height="0.9" fill="#141b29"/><rect x="6.5" y="2.6" width="0.9" height="0.9" fill="#141b29"/><rect x="6.5" y="4.5" width="0.9" height="0.9" fill="#141b29"/><rect x="6.5" y="6.5" width="0.9" height="0.9" fill="#141b29"/></svg>
<svg class="ic" style="left:517.0px;top:67.6px" width="10.6" height="10.6" viewBox="0 0 10 10"><path d="M3.67,1.64 A3.9,3.9 0 1 1 1.14,5.84" fill="none" stroke="#196ef0" stroke-width="1.35"/><path d="M1.3,1.7 L4.0,-0.2 L4.0,3.6Z" fill="#196ef0"/></svg>
<div class="fld" style="top:64px"></div>
<svg class="ic" style="left:517.0px;top:87.6px" width="10.6" height="10.6" viewBox="0 0 10 10"><path d="M3.67,1.64 A3.9,3.9 0 1 1 1.14,5.84" fill="none" stroke="#196ef0" stroke-width="1.35"/><path d="M1.3,1.7 L4.0,-0.2 L4.0,3.6Z" fill="#196ef0"/></svg>
<div class="fld" style="top:84px"></div>
<svg class="ic" style="left:608.1px;top:89.4px" width="8" height="6" viewBox="0 0 8 6"><path d="M0.9,1.3 L4,4.4 L7.1,1.3" fill="none" stroke="#4a4a4a" stroke-width="0.9"/></svg>
<svg class="ic" style="left:368.2px;top:107.0px" width="10.2" height="10.2" viewBox="0 0 10 10"><path d="M0.3,0.9 H9.7 M0.3,9.1 H9.7" stroke="#141b29" stroke-width="1.2" fill="none"/><path d="M0.5,3.3 H9.5 M0.5,6.9 H9.5" stroke="#141b29" stroke-width="1.1" stroke-dasharray="1.3 0.9" fill="none"/></svg>
<svg class="ic" style="left:498.6px;top:127.3px" width="10.6" height="10.6" viewBox="0 0 10 10"><path d="M3.67,1.64 A3.9,3.9 0 1 1 1.14,5.84" fill="none" stroke="#196ef0" stroke-width="1.35"/><path d="M1.3,1.7 L4.0,-0.2 L4.0,3.6Z" fill="#196ef0"/></svg>
<svg class="ic" style="left:516.9px;top:124.3px" width="12" height="14" viewBox="0 0 12 14"><text x="1.0" y="10.4" font-family="Liberation Serif,serif" font-style="italic" font-size="12.6" fill="#4a4a4a" stroke="#4a4a4a" stroke-width="0.25">f</text><text x="6.2" y="11.6" font-family="Liberation Sans,sans-serif" font-weight="bold" font-size="5.6" fill="#4a4a4a">x</text></svg>
<div class="fld" style="top:124px"></div>
<svg class="ic" style="left:368.2px;top:146.6px" width="10.2" height="10.2" viewBox="0 0 10 10"><rect x="0.3" y="0.3" width="9.4" height="9.4" rx="1.7" fill="#141b29"/><circle cx="2.7" cy="2.7" r="0.95" fill="#fff"/><circle cx="7.3" cy="2.7" r="0.95" fill="#fff"/><circle cx="2.7" cy="7.3" r="0.95" fill="#fff"/><circle cx="7.3" cy="7.3" r="0.95" fill="#fff"/><circle cx="5.0" cy="5.0" r="0.95" fill="#fff"/></svg>
<svg class="ic" style="left:517.0px;top:166.5px" width="10.6" height="10.6" viewBox="0 0 10 10"><path d="M3.67,1.64 A3.9,3.9 0 1 1 1.14,5.84" fill="none" stroke="#196ef0" stroke-width="1.35"/><path d="M1.3,1.7 L4.0,-0.2 L4.0,3.6Z" fill="#196ef0"/></svg>
<div class="fld" style="top:163px"></div>
<svg class="ic" style="left:498.6px;top:186.4px" width="10.6" height="10.6" viewBox="0 0 10 10"><path d="M3.67,1.64 A3.9,3.9 0 1 1 1.14,5.84" fill="none" stroke="#196ef0" stroke-width="1.35"/><path d="M1.3,1.7 L4.0,-0.2 L4.0,3.6Z" fill="#196ef0"/></svg>
<svg class="ic" style="left:516.9px;top:183.4px" width="12" height="14" viewBox="0 0 12 14"><text x="1.0" y="10.4" font-family="Liberation Serif,serif" font-style="italic" font-size="12.6" fill="#4a4a4a" stroke="#4a4a4a" stroke-width="0.25">f</text><text x="6.2" y="11.6" font-family="Liberation Sans,sans-serif" font-weight="bold" font-size="5.6" fill="#4a4a4a">x</text></svg>
<div class="fld" style="top:183px"></div>
<svg class="ic" style="left:608.1px;top:188.2px" width="8" height="6" viewBox="0 0 8 6"><path d="M0.9,1.3 L4,4.4 L7.1,1.3" fill="none" stroke="#4a4a4a" stroke-width="0.9"/></svg>
<svg class="ic" style="left:368.2px;top:205.8px" width="10.2" height="10.2" viewBox="0 0 10 10"><circle cx="5.3" cy="4.8" r="4.1" fill="none" stroke="#141b29" stroke-width="1.2"/><circle cx="5.1" cy="4.4" r="1.0" fill="#141b29"/><path d="M5.4,3.9 L6.6,2.4" stroke="#141b29" stroke-width="0.9"/><path d="M2.2,7.2 L0.3,9.6 L3.4,8.6Z" fill="#141b29"/></svg>
<svg class="ic" style="left:498.6px;top:225.8px" width="10.6" height="10.6" viewBox="0 0 10 10"><path d="M3.67,1.64 A3.9,3.9 0 1 1 1.14,5.84" fill="none" stroke="#196ef0" stroke-width="1.35"/><path d="M1.3,1.7 L4.0,-0.2 L4.0,3.6Z" fill="#196ef0"/></svg>
<svg class="ic" style="left:516.9px;top:222.8px" width="12" height="14" viewBox="0 0 12 14"><text x="1.0" y="10.4" font-family="Liberation Serif,serif" font-style="italic" font-size="12.6" fill="#4a4a4a" stroke="#4a4a4a" stroke-width="0.25">f</text><text x="6.2" y="11.6" font-family="Liberation Sans,sans-serif" font-weight="bold" font-size="5.6" fill="#4a4a4a">x</text></svg>
<div class="fld" style="top:222px"></div>
<svg class="ic" style="left:368.2px;top:245.3px" width="10.2" height="10.2" viewBox="0 0 10 10"><path d="M0.6,8.9 H8.4 A1.25,1.25 0 0 0 8.4,6.4 H1.8 A1.25,1.25 0 0 1 1.8,3.9 H5.6" fill="none" stroke="#141b29" stroke-width="1.15" stroke-linecap="round"/><path d="M6.3,0.7 H9.5 V1.6 L7.9,3.2 L6.3,1.6Z" fill="#141b29" stroke="#141b29" stroke-width="0.6" stroke-linejoin="round"/></svg>
<svg class="ic" style="left:517.0px;top:265.6px" width="10.6" height="10.6" viewBox="0 0 10 10"><path d="M3.67,1.64 A3.9,3.9 0 1 1 1.14,5.84" fill="none" stroke="#196ef0" stroke-width="1.35"/><path d="M1.3,1.7 L4.0,-0.2 L4.0,3.6Z" fill="#196ef0"/></svg>
<div class="cb" style="top:265.0px"></div>
<svg class="ic" style="left:537.3px;top:266.7px" width="7" height="7" viewBox="0 0 7 7"><path d="M1.3,3.5 L2.9,5.0 L5.7,2.0" fill="none" stroke="#16181c" stroke-width="1.35"/></svg>
<svg class="ic" style="left:517.0px;top:285.4px" width="10.6" height="10.6" viewBox="0 0 10 10"><path d="M3.67,1.64 A3.9,3.9 0 1 1 1.14,5.84" fill="none" stroke="#196ef0" stroke-width="1.35"/><path d="M1.3,1.7 L4.0,-0.2 L4.0,3.6Z" fill="#196ef0"/></svg>
<div class="cb" style="top:284.8px"></div>
<svg class="ic" style="left:537.3px;top:286.5px" width="7" height="7" viewBox="0 0 7 7"><path d="M1.3,3.5 L2.9,5.0 L5.7,2.0" fill="none" stroke="#16181c" stroke-width="1.35"/></svg>
<svg class="ic" style="left:517.0px;top:305.0px" width="10.6" height="10.6" viewBox="0 0 10 10"><path d="M3.67,1.64 A3.9,3.9 0 1 1 1.14,5.84" fill="none" stroke="#196ef0" stroke-width="1.35"/><path d="M1.3,1.7 L4.0,-0.2 L4.0,3.6Z" fill="#196ef0"/></svg>
<div class="fld" style="top:302px"></div>
<svg class="ic" style="left:368.2px;top:324.5px" width="10.2" height="10.2" viewBox="0 0 10 10"><path d="M5,0.3 V5.0 M2.9,3.2 L5,5.3 L7.1,3.2" fill="none" stroke="#141b29" stroke-width="1.2" stroke-linejoin="round"/><path d="M1.0,4.6 V6.3 A1.2,1.2 0 0 0 2.2,7.5 H7.8 A1.2,1.2 0 0 0 9.0,6.3 V4.6" fill="none" stroke="#141b29" stroke-width="1.2"/><path d="M0.6,9.5 H9.6" stroke="#141b29" stroke-width="1.0" stroke-dasharray="1.1 0.8"/></svg>
<svg class="ic" style="left:498.9px;top:344.7px" width="10" height="10" viewBox="0 0 10 10"><g fill="none" stroke="#4a4a4a" stroke-width="0.95" stroke-linecap="round"><path d="M4.4,6.9 L3.9,7.4 A1.75,1.75 0 0 1 1.4,4.9 L3.0,3.3 A1.75,1.75 0 0 1 5.5,3.3"/><path d="M5.6,3.1 L6.1,2.6 A1.75,1.75 0 0 1 8.6,5.1 L7.0,6.7 A1.75,1.75 0 0 1 4.5,6.7"/></g></svg>
<svg class="ic" style="left:517.0px;top:344.8px" width="10.6" height="10.6" viewBox="0 0 10 10"><path d="M3.67,1.64 A3.9,3.9 0 1 1 1.14,5.84" fill="none" stroke="#196ef0" stroke-width="1.35"/><path d="M1.3,1.7 L4.0,-0.2 L4.0,3.6Z" fill="#196ef0"/></svg>
<div class="fld" style="top:342px"></div>
<svg class="ic" style="left:608.1px;top:346.6px" width="8" height="6" viewBox="0 0 8 6"><path d="M0.9,1.3 L4,4.4 L7.1,1.3" fill="none" stroke="#4a4a4a" stroke-width="0.9"/></svg>
<svg class="ic" style="left:517.0px;top:364.6px" width="10.6" height="10.6" viewBox="0 0 10 10"><path d="M3.67,1.64 A3.9,3.9 0 1 1 1.14,5.84" fill="none" stroke="#196ef0" stroke-width="1.35"/><path d="M1.3,1.7 L4.0,-0.2 L4.0,3.6Z" fill="#196ef0"/></svg>
<div class="fld" style="top:361px"></div>
<svg class="ic" style="left:498.6px;top:384.4px" width="10.6" height="10.6" viewBox="0 0 10 10"><path d="M3.67,1.64 A3.9,3.9 0 1 1 1.14,5.84" fill="none" stroke="#196ef0" stroke-width="1.35"/><path d="M1.3,1.7 L4.0,-0.2 L4.0,3.6Z" fill="#196ef0"/></svg>
<svg class="ic" style="left:516.9px;top:381.4px" width="12" height="14" viewBox="0 0 12 14"><text x="1.0" y="10.4" font-family="Liberation Serif,serif" font-style="italic" font-size="12.6" fill="#4a4a4a" stroke="#4a4a4a" stroke-width="0.25">f</text><text x="6.2" y="11.6" font-family="Liberation Sans,sans-serif" font-weight="bold" font-size="5.6" fill="#4a4a4a">x</text></svg>
<div class="fld" style="top:381px"></div>
<div id="t0" class="t cat" style="left:383.6px;top:46.71px;transform:scaleX(0.8255)">Walls</div>
<div id="t1" class="t lab" style="left:377.5px;top:66.94px;transform:scaleX(0.8823)">Wall Line Count</div>
<div id="t2" class="t val" style="left:539.0px;top:67.14px;transform:scaleX(0.8084)">6</div>
<div id="t3" class="t lab" style="left:369.4px;top:86.89px;transform:scaleX(0.9105)">Wall Ordering</div>
<div id="t4" class="t val" style="left:539.0px;top:87.09px;transform:scaleX(0.8999)">Outside To Inside</div>
<div id="t5" class="t cat" style="left:383.6px;top:106.11px;transform:scaleX(0.8746)">Top/Bottom</div>
<div id="t6" class="t lab" style="left:369.2px;top:126.59px;transform:scaleX(0.8815)">Skin Overlap Percentage</div>
<div id="t7" class="t val" style="left:539.0px;top:126.79px;transform:scaleX(0.8473)">15.0</div>
<div id="t8" class="t unit" style="left:614.7px;top:126.79px;transform:scaleX(0.7800)">%</div>
<div id="t9" class="t cat" style="left:383.6px;top:145.71px;transform:scaleX(0.8960)">Infill</div>
<div id="t10" class="t lab" style="left:369.2px;top:165.79px;transform:scaleX(0.9322)">Infill Density</div>
<div id="t11" class="t val" style="left:539.0px;top:165.99px;transform:scaleX(0.8730)">50.0</div>
<div id="t12" class="t unit" style="left:614.7px;top:165.99px;transform:scaleX(0.7800)">%</div>
<div id="t13" class="t lab" style="left:369.2px;top:185.69px;transform:scaleX(0.9420)">Infill Pattern</div>
<div id="t14" class="t val" style="left:539.0px;top:185.89px;transform:scaleX(0.8700)">Gyroid</div>
<div id="t15" class="t cat" style="left:383.6px;top:204.91px;transform:scaleX(0.9023)">Material</div>
<div id="t16" class="t lab" style="left:369.2px;top:225.09px;transform:scaleX(0.9245)">Printing Temperature</div>
<div id="t17" class="t val" style="left:539.0px;top:225.29px;transform:scaleX(0.8886)">205.0</div>
<div id="t18" class="t unit" style="left:612.3px;top:225.29px;transform:scaleX(0.8570)">°C</div>
<div id="t19" class="t cat" style="left:383.6px;top:244.41px;transform:scaleX(0.8337)">Travel</div>
<div id="t20" class="t lab" style="left:369.2px;top:264.89px;transform:scaleX(0.8776)">Retract at Layer Change</div>
<div id="t21" class="t lab" style="left:369.2px;top:284.69px;transform:scaleX(0.8837)">Z Hop When Retracted</div>
<div id="t22" class="t lab" style="left:369.2px;top:304.29px;transform:scaleX(0.9026)">Z Hop Height</div>
<div id="t23" class="t val" style="left:539.0px;top:304.49px;transform:scaleX(0.8360)">0.1</div>
<div id="t24" class="t unit" style="left:607.2px;top:304.49px;transform:scaleX(0.9604)">mm</div>
<div id="t25" class="t cat" style="left:383.6px;top:323.61px;transform:scaleX(0.8471)">Build Plate Adhesion</div>
<div id="t26" class="t lab" style="left:369.2px;top:344.09px;transform:scaleX(0.8875)">Build Plate Adhesion Type</div>
<div id="t27" class="t val" style="left:539.0px;top:344.29px;transform:scaleX(0.9250)">Skirt</div>
<div id="t28" class="t lab" style="left:369.2px;top:363.89px;transform:scaleX(0.8889)">Skirt Line Count</div>
<div id="t29" class="t val" style="left:539.0px;top:364.09px;transform:scaleX(0.8533)">4</div>
<div id="t30" class="t lab" style="left:369.2px;top:383.69px;transform:scaleX(0.9091)">Skirt Height</div>
<div id="t31" class="t val" style="left:539.3px;top:383.89px;transform:scaleX(0.7800)">1</div>
</body></html>
